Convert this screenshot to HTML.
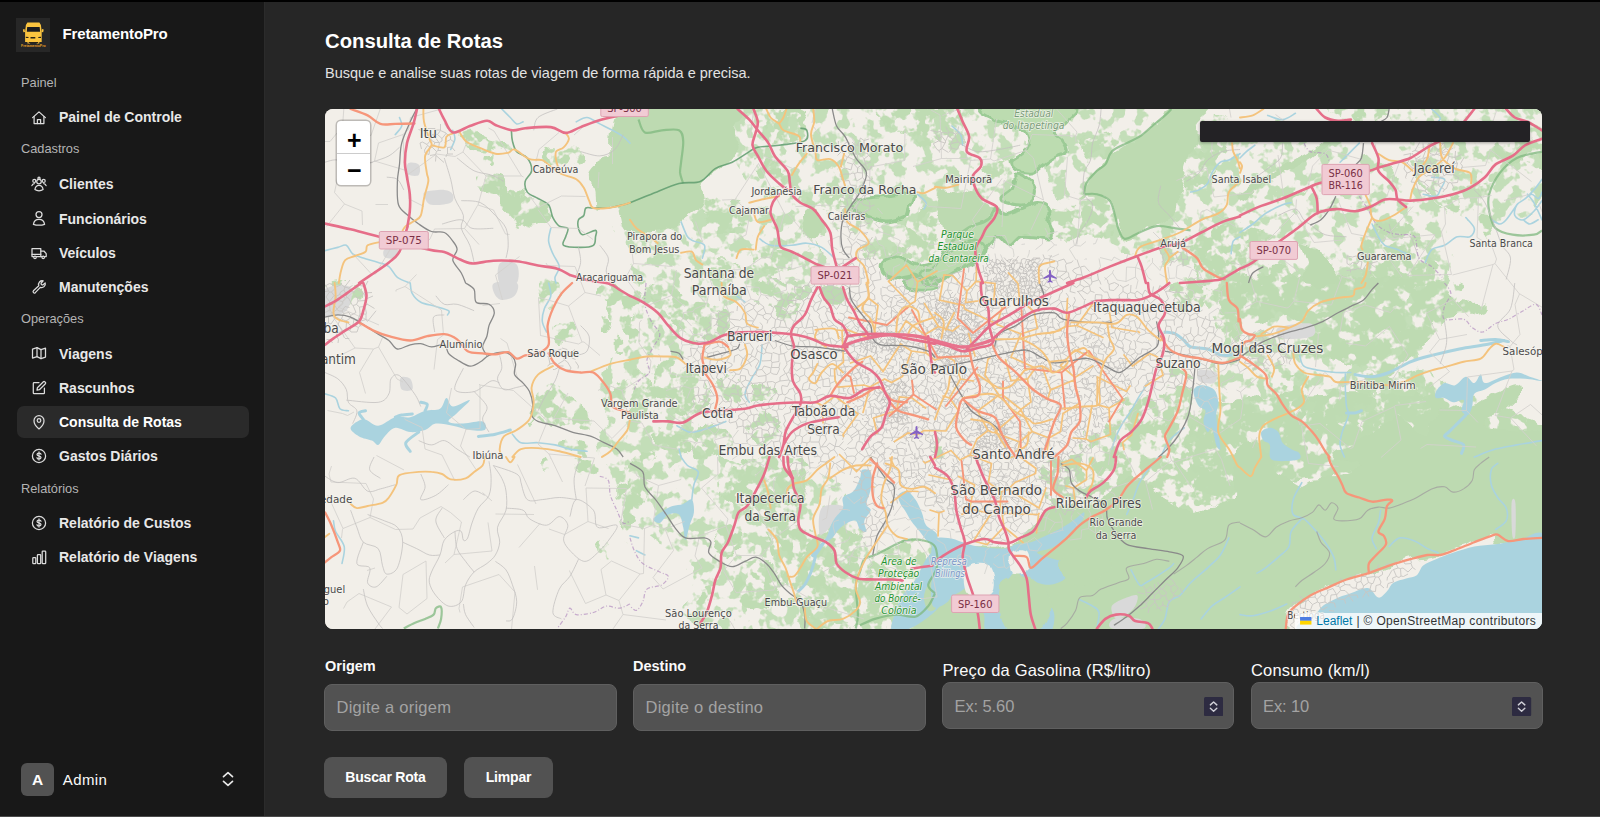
<!DOCTYPE html>
<html lang="pt-BR">
<head>
<meta charset="utf-8">
<title>FretamentoPro - Consulta de Rotas</title>
<style>
*{box-sizing:border-box;margin:0;padding:0}
html,body{width:1600px;height:817px;overflow:hidden;background:#262626;font-family:"Liberation Sans",Arial,sans-serif;color:#fafafa}
.abs{position:absolute}
#topbar{left:0;top:0;width:1600px;height:2px;background:#000;z-index:50}
#botline{left:0;top:816px;width:1600px;height:1px;background:#4a4a4a;z-index:50}
#sidebar{left:0;top:0;width:265px;height:817px;background:#181818;border-right:1px solid #2b2b2b}
#main{left:266px;top:0;width:1334px;height:817px;background:#262626}
.brand{left:62.5px;top:24.9px;letter-spacing:-0.12px;font-weight:700;font-size:15px;line-height:18px;color:#fff;white-space:nowrap}
.grp{left:21px;font-size:12.8px;line-height:16px;color:#b4b4b4;white-space:nowrap}
.nav{z-index:3;left:59px;font-size:14px;line-height:18px;font-weight:700;color:#e8e8e8;white-space:nowrap}
.ico{z-index:3;left:30.700px;width:16px;height:16px;stroke:#dcdcdc;fill:none;stroke-width:1.250;stroke-linecap:round;stroke-linejoin:round}
#active{left:17px;top:406px;width:232px;height:32px;border-radius:7px;background:#2a2a2a}
h1{left:325px;top:27.6px;font-size:20.3px;line-height:26px;font-weight:700;color:#fff;white-space:nowrap}
.sub{left:325px;top:64.4px;font-size:14.5px;line-height:18px;color:#e2e2e2;white-space:nowrap}
#map{left:325px;top:109px;width:1217px;height:520px;border-radius:8px;overflow:hidden;background:#f2efe9}
.lbl{font-size:14.5px;line-height:18px;font-weight:700;color:#fafafa;white-space:nowrap}
.lbl2{font-size:16.5px;line-height:20px;letter-spacing:0.18px;color:#fafafa;white-space:nowrap}
.inp{height:47px;width:293px;border-radius:8px;background:#525252;border:1px solid #5f5f5f;color:#a3a3a3;font-size:16.5px;line-height:45px;padding-left:11.5px;letter-spacing:0.25px;white-space:nowrap}
.btn{top:756.5px;height:41.5px;border-radius:8px;background:#525252;color:#fff;font-weight:700;font-size:14px;letter-spacing:-0.2px;line-height:41.5px;text-align:center;white-space:nowrap}
.spin{width:19px;height:19px;background:#2e2c40;border-radius:2px}
</style>
</head>
<body>
<div id="sidebar" class="abs"></div>
<div id="main" class="abs"></div>
<div id="topbar" class="abs"></div>
<div id="botline" class="abs"></div>

<!-- SIDEBAR -->
<svg class="abs" style="left:16.200px;top:17.900px;width:34.300px;height:34.300px" viewBox="16.200 17.900 34.300 34.300">
<rect x="16.200" y="17.900" width="34.300" height="34.300" fill="#272727"/>
<g fill="#fbc43f"><path d="M27.600 22.500h12l1.500 2.500.8 6.500v10.300h-2.400v1.700h-2.600v-1.700h-6.600v1.700h-2.600v-1.700h-2.400V31.500l.8-6.500z"/><path d="M23.100 29.300l1.600-.3.500 2.800-1.600.3zM43.900 29.300l-1.600-.3-.5 2.800 1.600.3z"/></g>
<path d="M27.400 26.900h12.500l.4 4.800H27z" fill="#1c1c1f"/>
<path d="M26 36.600l2.700.3v.9H26zM41.200 36.600l-2.700.3v.9h2.700zM30.700 37h4.800v1.400h-4.800zM28.900 41.800h9.500v1.100h-9.500z" fill="#2a2317"/>
<text x="33.550" y="46.900" text-anchor="middle" font-family="Liberation Sans,Arial,sans-serif" font-weight="700" font-size="3.300" fill="#e6a326" textLength="24.500" lengthAdjust="spacingAndGlyphs">FretamentoPro</text>
</svg>
<svg class="abs ico" style="top:109.7px" viewBox="0 0 16 16"><path d="M1.6 7.6L8 1.9l6.4 5.7"/><path d="M3.1 6.6v6.9h9.8V6.6"/><path d="M6.4 13.5V9.6h3.2v3.9"/></svg>
<svg class="abs ico" style="top:175.5px" viewBox="0 0 16 16"><circle cx="8" cy="5.6" r="2.3"/><path d="M3.9 13.6C4.3 10.7 5.9 9.4 8 9.4s3.7 1.3 4.1 4.2c-1.2.8-2.6 1.2-4.1 1.2s-2.9-.4-4.1-1.2z"/><circle cx="3.3" cy="4.9" r="1.5"/><circle cx="12.7" cy="4.9" r="1.5"/><circle cx="8" cy="2.2" r="1.1"/><path d="M.9 9.6c.4-1.4 1.2-2.1 2.4-2.1M15.1 9.6c-.4-1.4-1.2-2.1-2.4-2.1"/></svg>
<svg class="abs ico" style="top:210.1px" viewBox="0 0 16 16"><circle cx="8" cy="4.6" r="3"/><path d="M2.4 14.3C3 10.9 5.2 9.4 8 9.4s5 1.5 5.6 4.9c-1.7.6-3.5.9-5.6.9s-3.9-.3-5.6-.9z"/></svg>
<svg class="abs ico" style="top:245.2px" viewBox="0 0 16 16"><path d="M1 3.6h8.8v8H1z"/><path d="M9.8 6h3.1l2.3 2.7v2.9H9.8"/><path d="M1 9.3h8.8"/><circle cx="4" cy="12.4" r="1.2" fill="#181818"/><circle cx="12.2" cy="12.4" r="1.2" fill="#181818"/></svg>
<svg class="abs ico" style="top:278.8px" viewBox="0 0 16 16"><path d="M14.2 3.9a3.7 3.7 0 0 1-4.9 4.4l-5 5.4a1.35 1.35 0 0 1-1.9-1.9l5.4-5a3.7 3.7 0 0 1 4.400-4.900l-2.200 2.300.400 1.400 1.400.400z"/></svg>
<svg class="abs ico" style="top:345.1px" viewBox="0 0 16 16"><path d="M1.500 4.100l4.500-1.500 4 2 4.500-1.500v9l-4.500 1.500-4-2-4.500 1.500z"/><path d="M6 2.600v9M10 4.600v9"/></svg>
<svg class="abs ico" style="top:379.7px" viewBox="0 0 16 16"><path d="M8 2.600H3.100a.8.8 0 0 0-.8.800v9.500a.8.800 0 0 0 .8.800h9.500a.8.800 0 0 0 .8-.800V8"/><path d="M6 10.100l.400-2.400 6-6a.9.900 0 0 1 1.300 0l.700.700a.9.900 0 0 1 0 1.300l-6 6z"/></svg>
<svg class="abs ico" style="top:414.0px" viewBox="0 0 16 16"><path d="M8 14.900s-5-3.900-5-8.200a5 5 0 0 1 10 0c0 4.300-5 8.200-5 8.200z"/><circle cx="8" cy="6.500" r="1.800"/></svg>
<svg class="abs ico" style="top:448.2px" viewBox="0 0 16 16"><circle cx="8" cy="8" r="6.600"/><path d="M8 3.900v8.200M10 6.300c0-.9-.9-1.300-2-1.300s-2 .500-2 1.400c0 2.100 4 1 4 3.200 0 .9-.9 1.400-2 1.400s-2-.400-2-1.300"/></svg>
<svg class="abs ico" style="top:514.9px" viewBox="0 0 16 16"><circle cx="8" cy="8" r="6.600"/><path d="M8 3.900v8.200M10 6.300c0-.9-.9-1.300-2-1.300s-2 .500-2 1.400c0 2.100 4 1 4 3.200 0 .9-.9 1.400-2 1.400s-2-.400-2-1.300"/></svg>
<svg class="abs ico" style="top:549.0px" viewBox="0 0 16 16"><rect x="1.800" y="8.600" width="3" height="6" rx=".7"/><rect x="6.400" y="5.600" width="3.300" height="9" rx=".7"/><rect x="11.200" y="2" width="3.500" height="12.600" rx=".7"/></svg>
<svg class="abs" style="left:219.8px;top:771.4px;width:16px;height:16px;fill:none;stroke:#e8e8e8;stroke-width:1.7;stroke-linecap:round;stroke-linejoin:round" viewBox="0 0 16 16"><path d="M3.500 5.600L8 1.700l4.500 3.900M3.500 10.400L8 14.300l4.500-3.900"/></svg>
<div class="abs brand">FretamentoPro</div>
<div class="abs grp" style="top:75.3px">Painel</div>
<div class="abs nav" style="top:107.9px">Painel de Controle</div>
<div class="abs grp" style="top:141.3px">Cadastros</div>
<div class="abs nav" style="top:175.2px">Clientes</div>
<div class="abs nav" style="top:209.7px">Funcionários</div>
<div class="abs nav" style="top:243.9px">Veículos</div>
<div class="abs nav" style="top:278.2px">Manutenções</div>
<div class="abs grp" style="top:310.9px">Operações</div>
<div class="abs nav" style="top:345.0px">Viagens</div>
<div class="abs nav" style="top:379.1px">Rascunhos</div>
<div id="active" class="abs"></div>
<div class="abs nav" style="top:413.0px;color:#fff">Consulta de Rotas</div>
<div class="abs nav" style="top:447.3px">Gastos Diários</div>
<div class="abs grp" style="top:480.7px">Relatórios</div>
<div class="abs nav" style="top:513.7px">Relatório de Custos</div>
<div class="abs nav" style="top:548.2px">Relatório de Viagens</div>

<div class="abs" style="left:21px;top:763px;width:33px;height:33px;border-radius:6px;background:#525252;color:#fff;font-weight:700;font-size:15.5px;line-height:33px;text-align:center">A</div>
<div class="abs" id="admin" style="left:62.8px;top:770.7px;letter-spacing:0.4px;font-size:15px;line-height:18px;color:#fafafa">Admin</div>

<!-- MAIN -->
<h1 class="abs">Consulta de Rotas</h1>
<div class="abs sub">Busque e analise suas rotas de viagem de forma rápida e precisa.</div>
<div id="map" class="abs"><svg width="1217" height="520" viewBox="325 109 1217 520" style="position:absolute;left:0;top:0;font-family:'DejaVu Sans','Liberation Sans',sans-serif">
<defs><filter id="rough" x="-5%" y="-5%" width="110%" height="110%"><feTurbulence type="fractalNoise" baseFrequency="0.045" numOctaves="3" seed="7" result="n"/><feDisplacementMap in="SourceGraphic" in2="n" scale="14" xChannelSelector="R" yChannelSelector="G"/></filter><filter id="speck" x="-5%" y="-5%" width="110%" height="110%"><feTurbulence type="fractalNoise" baseFrequency="0.05" numOctaves="4" seed="21" result="n"/><feDisplacementMap in="SourceGraphic" in2="n" scale="16" xChannelSelector="R" yChannelSelector="G" result="d"/><feTurbulence type="fractalNoise" baseFrequency="0.085" numOctaves="3" seed="5" result="n2"/><feColorMatrix in="n2" type="matrix" values="0 0 0 0 0 0 0 0 0 0 0 0 0 0 0 10 0 0 0 -4.3" result="m"/><feComposite in="d" in2="m" operator="in"/></filter><filter id="speckmid" x="-5%" y="-5%" width="110%" height="110%"><feTurbulence type="fractalNoise" baseFrequency="0.05" numOctaves="4" seed="9" result="n"/><feDisplacementMap in="SourceGraphic" in2="n" scale="16" xChannelSelector="R" yChannelSelector="G" result="d"/><feTurbulence type="fractalNoise" baseFrequency="0.07" numOctaves="3" seed="14" result="n2"/><feColorMatrix in="n2" type="matrix" values="0 0 0 0 0 0 0 0 0 0 0 0 0 0 0 10 0 0 0 -3.55" result="m"/><feComposite in="d" in2="m" operator="in"/></filter><filter id="specksp" x="-5%" y="-5%" width="110%" height="110%"><feTurbulence type="fractalNoise" baseFrequency="0.03" numOctaves="2" seed="31" result="n"/><feDisplacementMap in="SourceGraphic" in2="n" scale="30" xChannelSelector="R" yChannelSelector="G" result="d"/><feTurbulence type="fractalNoise" baseFrequency="0.075" numOctaves="3" seed="17" result="n2"/><feColorMatrix in="n2" type="matrix" values="0 0 0 0 0 0 0 0 0 0 0 0 0 0 0 11 0 0 0 -5.5" result="m"/><feComposite in="d" in2="m" operator="in"/></filter><filter id="rough2" x="-5%" y="-5%" width="110%" height="110%"><feTurbulence type="fractalNoise" baseFrequency="0.09" numOctaves="2" seed="3" result="n"/><feDisplacementMap in="SourceGraphic" in2="n" scale="6" xChannelSelector="R" yChannelSelector="G"/></filter></defs>
<rect x="325" y="109" width="1217" height="520" fill="#f2efe9"/>
<g fill="#c3deb8" stroke="none" filter="url(#specksp)">
<path d="M620.0,215.0C630.0,198.3 671.7,200.0 700.0,200.0C728.3,200.0 768.3,205.0 790.0,215.0C811.7,225.0 828.3,245.8 830.0,260.0C831.7,274.2 818.3,291.7 800.0,300.0C781.7,308.3 738.3,298.3 720.0,310.0C701.7,321.7 693.3,348.3 690.0,370.0C686.7,391.7 688.3,423.3 700.0,440.0C711.7,456.7 738.3,463.3 760.0,470.0C781.7,476.7 811.7,465.0 830.0,480.0C848.3,495.0 865.0,535.2 870.0,560.0C875.0,584.8 888.3,617.5 860.0,629.0C831.7,640.5 728.3,640.5 700.0,629.0C671.7,617.5 700.0,578.2 690.0,560.0C680.0,541.8 655.0,540.0 640.0,520.0C625.0,500.0 605.0,466.7 600.0,440.0C595.0,413.3 603.3,383.3 610.0,360.0C616.7,336.7 638.3,324.2 640.0,300.0C641.7,275.8 610.0,231.7 620.0,215.0Z M740.0,109.0C780.0,95.5 955.0,93.8 1000.0,109.0C1045.0,124.2 1020.0,174.8 1010.0,200.0C1000.0,225.2 961.7,249.7 940.0,260.0C918.3,270.3 895.0,267.0 880.0,262.0C865.0,257.0 860.0,235.3 850.0,230.0C840.0,224.7 835.0,236.7 820.0,230.0C805.0,223.3 773.3,210.2 760.0,190.0C746.7,169.8 700.0,122.5 740.0,109.0Z M1180.0,150.0C1198.3,133.3 1260.0,123.3 1300.0,130.0C1340.0,136.7 1395.0,173.3 1420.0,190.0C1445.0,206.7 1446.7,211.7 1450.0,230.0C1453.3,248.3 1445.0,281.7 1440.0,300.0C1435.0,318.3 1423.3,320.0 1420.0,340.0C1416.7,360.0 1440.0,405.0 1420.0,420.0C1400.0,435.0 1336.7,431.7 1300.0,430.0C1263.3,428.3 1213.3,425.0 1200.0,410.0C1186.7,395.0 1220.0,360.0 1220.0,340.0C1220.0,320.0 1205.0,308.3 1200.0,290.0C1195.0,271.7 1193.3,253.3 1190.0,230.0C1186.7,206.7 1161.7,166.7 1180.0,150.0Z M1060.0,109.0C1083.3,93.8 1168.3,100.5 1200.0,109.0C1231.7,117.5 1250.0,134.8 1250.0,160.0C1250.0,185.2 1221.7,245.0 1200.0,260.0C1178.3,275.0 1143.3,260.0 1120.0,250.0C1096.7,240.0 1070.0,223.5 1060.0,200.0C1050.0,176.5 1036.7,124.2 1060.0,109.0Z M1400.0,109.0C1420.3,97.2 1518.3,93.8 1542.0,109.0C1565.7,124.2 1554.0,181.5 1542.0,200.0C1530.0,218.5 1490.3,223.3 1470.0,220.0C1449.7,216.7 1431.7,198.5 1420.0,180.0C1408.3,161.5 1379.7,120.8 1400.0,109.0Z"/>
</g>
<g fill="#bfdcb3" stroke="none" filter="url(#speck)">
<path d="M542.3,149.5C544.8,147.4 552.2,147.0 559.3,147.3C566.4,147.7 581.0,149.1 584.9,151.6C588.8,154.1 587.0,160.1 582.7,162.2C578.4,164.3 565.7,164.8 559.3,164.4C552.9,164.1 547.2,162.6 544.4,160.1C541.6,157.6 539.8,151.6 542.3,149.5Z M484.7,154.8C486.5,153.6 493.6,153.6 495.4,154.8C497.2,156.0 497.2,161.0 495.4,162.2C493.6,163.4 486.5,163.4 484.7,162.2C482.9,161.0 482.9,156.0 484.7,154.8Z M461.3,134.6C462.0,132.5 469.8,131.7 474.1,132.4C478.4,133.1 481.2,136.7 486.9,138.8C492.6,140.9 505.0,143.1 508.2,145.2C511.4,147.3 509.6,150.9 506.0,151.6C502.4,152.3 492.9,150.6 486.9,149.5C480.9,148.4 474.1,147.7 469.8,145.2C465.5,142.7 460.6,136.7 461.3,134.6Z M800.4,194.2C804.0,193.1 814.6,195.2 821.7,196.3C828.8,197.4 839.8,198.5 843.0,200.6C846.2,202.7 845.2,208.0 840.9,209.1C836.6,210.2 824.1,208.1 817.4,207.0C810.6,205.9 803.2,204.8 800.4,202.7C797.6,200.6 796.8,195.3 800.4,194.2Z M862.2,245.3C869.3,243.5 899.5,245.3 906.9,247.4C914.3,249.5 914.0,256.3 906.9,258.1C899.8,259.9 871.8,260.2 864.3,258.1C856.8,256.0 855.1,247.1 862.2,245.3Z M755.7,249.6C761.4,246.4 785.9,248.9 791.9,251.7C797.9,254.5 794.0,263.4 791.9,266.6C789.8,269.8 783.0,268.2 779.1,270.9C775.2,273.6 772.0,283.0 768.4,283.0C764.8,283.0 759.9,276.5 757.8,270.9C755.7,265.3 750.0,252.8 755.7,249.6Z M909.0,215.5C913.7,211.2 930.7,204.1 935.0,211.2C939.3,218.3 937.9,251.0 935.0,258.1C932.1,265.2 922.2,257.4 917.5,253.8C912.8,250.2 908.3,243.2 906.9,236.8C905.5,230.4 904.3,219.8 909.0,215.5Z M702.4,204.8C704.5,199.8 716.6,198.8 723.7,198.5C730.8,198.2 740.7,199.1 745.0,202.7C749.3,206.2 751.4,214.8 749.3,219.8C747.2,224.8 738.6,231.1 732.2,232.5C725.8,233.9 715.9,232.9 710.9,228.3C705.9,223.7 700.3,209.8 702.4,204.8Z M757.8,158.0C761.3,155.5 774.1,159.0 779.1,162.2C784.1,165.4 788.3,173.3 787.6,177.2C786.9,181.1 779.8,185.7 774.8,185.7C769.8,185.7 760.6,181.8 757.8,177.2C755.0,172.6 754.2,160.5 757.8,158.0Z M766.3,115.4C772.0,111.9 793.6,110.1 800.4,113.3C807.1,116.5 810.3,129.3 806.8,134.6C803.2,139.9 785.9,145.2 779.1,145.2C772.4,145.2 768.4,139.6 766.3,134.6C764.2,129.6 760.6,119.0 766.3,115.4Z M881.3,109.0C889.5,106.2 926.0,104.7 935.0,109.0C944.0,113.3 936.9,127.5 935.0,134.6C933.1,141.7 928.6,151.6 923.9,151.6C919.2,151.6 913.3,138.9 906.9,134.6C900.5,130.3 889.9,130.3 885.6,126.0C881.3,121.7 873.1,111.8 881.3,109.0Z M715.2,258.1C719.5,255.6 733.7,258.8 736.5,262.4C739.3,265.9 736.5,276.9 732.2,279.4C727.9,281.9 713.7,280.9 710.9,277.3C708.1,273.8 710.9,260.6 715.2,258.1Z M1050.0,211.2C1053.2,206.6 1067.7,211.9 1073.4,209.1C1079.1,206.3 1079.1,196.3 1084.1,194.2C1089.1,192.1 1098.7,194.5 1103.3,196.3C1107.9,198.1 1109.7,200.5 1111.8,204.8C1113.9,209.1 1116.3,216.9 1116.0,221.9C1115.7,226.9 1115.0,232.2 1109.7,234.7C1104.4,237.2 1093.3,236.5 1084.1,236.8C1074.9,237.2 1060.0,241.1 1054.3,236.8C1048.6,232.5 1046.8,215.8 1050.0,211.2Z M1082.0,136.7C1087.7,133.1 1109.6,128.5 1116.0,130.3C1122.4,132.1 1122.1,142.3 1120.3,147.3C1118.5,152.3 1110.7,157.6 1105.4,160.1C1100.1,162.6 1092.3,163.6 1088.4,162.2C1084.5,160.8 1083.1,155.8 1082.0,151.6C1080.9,147.3 1076.3,140.2 1082.0,136.7Z M935.0,109.0C939.3,104.7 956.0,103.7 960.6,109.0C965.2,114.3 965.6,135.2 962.7,140.9C959.9,146.6 948.1,144.2 943.5,143.1C938.9,142.0 936.4,140.3 935.0,134.6C933.6,128.9 930.7,113.3 935.0,109.0Z M984.0,162.2C987.5,160.1 1003.9,161.6 1007.4,164.4C1010.9,167.2 1008.8,177.2 1005.3,179.3C1001.8,181.4 989.6,180.0 986.1,177.2C982.6,174.3 980.5,164.3 984.0,162.2Z M1190.6,236.8C1198.8,231.8 1231.8,220.6 1240.0,228.3C1248.2,236.0 1246.5,273.9 1240.0,283.0C1233.5,292.1 1209.4,287.1 1201.2,283.0C1193.0,278.9 1192.4,265.8 1190.6,258.1C1188.8,250.4 1182.4,241.8 1190.6,236.8Z M1197.0,138.8C1201.3,131.7 1207.3,128.2 1211.9,130.3C1216.5,132.4 1224.7,143.4 1224.7,151.6C1224.7,159.8 1217.6,172.9 1211.9,179.3C1206.2,185.7 1194.9,191.0 1190.6,189.9C1186.3,188.8 1185.2,181.4 1186.3,172.9C1187.4,164.4 1192.7,145.9 1197.0,138.8Z M1282.6,196.3C1285.1,194.2 1293.2,191.0 1299.6,187.8C1306.0,184.6 1317.2,178.3 1320.9,177.2C1324.6,176.1 1325.2,178.9 1322.0,181.4C1318.8,183.9 1308.0,188.9 1301.8,192.1C1295.6,195.3 1287.9,199.9 1284.7,200.6C1281.5,201.3 1280.1,198.4 1282.6,196.3Z M1367.8,224.0C1371.7,217.6 1382.0,219.1 1389.1,219.8C1396.2,220.5 1405.1,224.8 1410.4,228.3C1415.7,231.9 1417.5,236.1 1421.0,241.1C1424.5,246.1 1428.2,251.1 1431.7,258.1C1435.2,265.1 1453.0,278.9 1442.3,283.0C1431.6,287.1 1380.6,287.1 1367.8,283.0C1355.0,278.9 1365.7,267.9 1365.7,258.1C1365.7,248.3 1363.9,230.4 1367.8,224.0Z M1261.3,270.9C1264.8,268.2 1278.3,264.6 1282.6,266.6C1286.9,268.6 1290.5,280.3 1286.9,283.0C1283.4,285.7 1265.6,285.0 1261.3,283.0C1257.0,281.0 1257.8,273.6 1261.3,270.9Z M1240.0,224.0C1244.3,221.2 1262.0,224.8 1265.6,228.3C1269.1,231.9 1265.6,242.5 1261.3,245.3C1257.0,248.1 1243.5,248.9 1240.0,245.3C1236.5,241.8 1235.7,226.8 1240.0,224.0Z M1495.6,143.1C1502.6,138.8 1534.3,139.5 1542.0,143.1C1549.7,146.7 1546.2,161.6 1542.0,164.4C1537.8,167.2 1523.9,159.4 1516.9,160.1C1509.9,160.8 1503.5,171.4 1499.9,168.6C1496.4,165.8 1488.6,147.3 1495.6,143.1Z M1448.7,196.3C1450.3,194.2 1458.0,195.7 1459.4,198.5C1460.8,201.3 1458.9,211.3 1457.3,213.4C1455.7,215.5 1451.2,214.0 1449.8,211.2C1448.4,208.3 1447.1,198.4 1448.7,196.3Z M1478.6,183.5C1480.4,181.0 1488.8,179.6 1491.3,181.4C1493.8,183.2 1495.3,191.7 1493.5,194.2C1491.7,196.7 1483.2,198.1 1480.7,196.3C1478.2,194.5 1476.8,186.0 1478.6,183.5Z M1478.6,217.6C1479.7,215.5 1486.7,217.0 1489.2,219.8C1491.7,222.7 1494.6,232.6 1493.5,234.7C1492.4,236.8 1485.3,235.3 1482.8,232.5C1480.3,229.7 1477.5,219.7 1478.6,217.6Z M1329.5,109.0C1336.6,107.2 1381.3,107.2 1389.1,109.0C1396.9,110.8 1383.4,117.8 1376.3,119.6C1369.2,121.4 1354.3,121.4 1346.5,119.6C1338.7,117.8 1322.4,110.8 1329.5,109.0Z M599.8,287.3C603.4,284.4 625.0,284.1 630.0,291.5C635.0,298.9 631.9,326.3 630.0,332.0C628.1,337.7 622.5,329.5 618.9,325.6C615.3,321.7 611.5,315.0 608.3,308.6C605.1,302.2 596.2,290.2 599.8,287.3Z M550.8,325.6C553.3,322.8 568.2,321.7 572.1,323.5C576.0,325.3 576.7,333.4 574.2,336.2C571.7,339.0 561.1,342.3 557.2,340.5C553.3,338.7 548.3,328.4 550.8,325.6Z M601.9,317.1C603.7,315.3 611.1,316.7 612.5,319.2C613.9,321.7 612.2,330.2 610.4,332.0C608.6,333.8 603.3,332.4 601.9,329.9C600.5,327.4 600.1,318.9 601.9,317.1Z M614.7,338.4C616.1,336.6 621.8,338.0 623.2,340.5C624.6,343.0 624.6,351.5 623.2,353.3C621.8,355.1 616.1,353.7 614.7,351.2C613.3,348.7 613.3,340.2 614.7,338.4Z M535.9,389.5C539.4,383.8 545.5,384.5 550.8,385.2C556.1,385.9 563.5,390.9 567.8,393.8C572.0,396.7 572.4,399.5 576.3,402.3C580.2,405.1 589.1,406.6 591.2,410.8C593.3,415.1 593.7,425.3 589.1,427.8C584.5,430.3 572.1,427.1 563.6,425.7C555.1,424.3 543.7,418.2 538.0,419.3C532.3,420.4 530.9,432.1 529.5,432.1C528.1,432.1 528.4,426.4 529.5,419.3C530.6,412.2 532.4,395.2 535.9,389.5Z M614.7,385.2C616.6,382.7 627.5,381.0 630.0,383.1C632.5,385.2 631.9,395.5 630.0,398.0C628.1,400.5 621.4,400.1 618.9,398.0C616.4,395.9 612.9,387.7 614.7,385.2Z M559.3,440.6C563.2,439.2 582.0,440.6 587.0,442.7C592.0,444.8 593.0,452.0 589.1,453.4C585.2,454.8 568.6,453.4 563.6,451.3C558.6,449.2 555.4,442.0 559.3,440.6Z M538.0,283.0C541.2,279.8 556.1,279.4 559.3,283.0C562.5,286.6 560.4,301.1 557.2,304.3C554.0,307.5 543.3,305.8 540.1,302.2C536.9,298.6 534.8,286.2 538.0,283.0Z M325.0,283.0C330.7,278.7 353.8,279.4 359.1,283.0C364.4,286.6 362.6,300.0 356.9,304.3C351.2,308.6 330.3,312.2 325.0,308.6C319.7,305.1 319.3,287.3 325.0,283.0Z M630.0,283.0C632.1,279.4 641.0,280.2 642.8,283.0C644.6,285.8 642.7,296.4 640.6,300.0C638.5,303.6 631.8,307.1 630.0,304.3C628.2,301.5 627.9,286.6 630.0,283.0Z M651.3,289.4C654.1,286.6 666.2,285.5 672.6,287.3C679.0,289.1 682.5,297.2 689.6,300.0C696.7,302.8 708.1,301.8 715.2,304.3C722.3,306.8 730.8,310.3 732.2,314.9C733.6,319.5 728.7,328.1 723.7,332.0C718.7,335.9 709.1,338.4 702.4,338.4C695.6,338.4 688.9,335.6 683.2,332.0C677.5,328.4 672.9,321.7 668.3,317.1C663.7,312.5 658.4,308.9 655.6,304.3C652.8,299.7 648.5,292.2 651.3,289.4Z M753.5,283.0C762.4,280.9 802.5,279.4 811.0,283.0C819.5,286.6 807.9,298.3 804.7,304.3C801.5,310.3 796.2,316.4 791.9,319.2C787.6,322.0 783.0,323.1 779.1,321.3C775.2,319.5 772.0,312.9 768.4,308.6C764.8,304.4 760.3,300.1 757.8,295.8C755.3,291.5 744.6,285.1 753.5,283.0Z M630.0,325.6C631.8,323.1 639.2,324.9 640.6,327.7C642.0,330.5 640.3,340.1 638.5,342.6C636.7,345.1 631.4,345.4 630.0,342.6C628.6,339.8 628.2,328.1 630.0,325.6Z M661.9,363.9C667.6,361.1 678.6,366.1 685.4,368.2C692.1,370.3 698.1,372.4 702.4,376.7C706.6,381.0 711.2,388.1 710.9,393.8C710.5,399.5 705.3,407.2 700.3,410.8C695.3,414.4 687.1,416.5 681.1,415.1C675.1,413.7 669.1,407.3 664.1,402.3C659.1,397.3 651.7,391.6 651.3,385.2C650.9,378.8 656.2,366.7 661.9,363.9Z M719.5,378.8C721.6,375.2 736.5,377.8 740.8,381.0C745.0,384.2 747.1,394.4 745.0,398.0C742.9,401.6 732.2,405.5 728.0,402.3C723.8,399.1 717.4,382.4 719.5,378.8Z M749.3,383.1C751.4,380.6 762.8,382.7 766.3,385.2C769.8,387.7 772.7,395.5 770.6,398.0C768.5,400.5 757.0,402.6 753.5,400.1C750.0,397.6 747.2,385.6 749.3,383.1Z M657.7,430.0C662.7,426.4 680.1,425.3 685.4,427.8C690.7,430.3 691.7,440.6 689.6,444.9C687.5,449.2 678.3,452.7 672.6,453.4C666.9,454.1 658.1,453.0 655.6,449.1C653.1,445.2 652.7,433.6 657.7,430.0Z M749.3,419.3C752.1,414.3 769.8,412.2 774.8,415.1C779.8,418.0 781.9,431.4 779.1,436.4C776.3,441.4 762.8,447.8 757.8,444.9C752.8,442.0 746.5,424.3 749.3,419.3Z M630.0,372.5C633.2,366.1 646.4,370.3 649.2,376.7C652.0,383.1 650.2,404.4 647.0,410.8C643.8,417.2 632.8,421.5 630.0,415.1C627.2,408.7 626.8,378.9 630.0,372.5Z M693.9,432.1C698.2,427.2 713.1,425.7 719.5,427.8C725.9,429.9 732.2,440.0 732.2,444.9C732.2,449.8 725.9,455.0 719.5,457.0C713.1,459.0 698.2,461.1 693.9,457.0C689.6,452.9 689.6,437.0 693.9,432.1Z M1116.0,402.3C1117.8,400.2 1130.2,399.4 1137.3,398.0C1144.4,396.6 1152.2,393.8 1158.6,393.8C1165.0,393.8 1172.2,394.4 1175.7,398.0C1179.2,401.6 1181.0,409.4 1179.9,415.1C1178.8,420.8 1172.8,426.4 1169.3,432.1C1165.8,437.8 1162.1,445.0 1158.6,449.1C1155.0,453.2 1155.1,455.7 1148.0,457.0C1140.9,458.3 1120.6,459.7 1116.0,457.0C1111.4,454.3 1117.5,446.2 1120.3,440.6C1123.1,435.0 1132.0,428.6 1133.1,423.6C1134.2,418.6 1129.5,414.4 1126.7,410.8C1123.9,407.2 1114.2,404.4 1116.0,402.3Z M1216.2,308.6C1219.8,305.1 1236.0,299.3 1240.0,304.3C1244.0,309.3 1241.8,333.1 1240.0,338.4C1238.2,343.7 1232.5,338.3 1228.9,336.2C1225.3,334.1 1220.4,330.2 1218.3,325.6C1216.2,321.0 1212.6,312.2 1216.2,308.6Z M1209.8,283.0C1211.6,281.2 1219.0,282.6 1220.4,285.1C1221.8,287.6 1220.1,296.1 1218.3,297.9C1216.5,299.7 1211.2,298.3 1209.8,295.8C1208.4,293.3 1208.0,284.8 1209.8,283.0Z M1084.1,430.0C1086.9,426.8 1097.5,428.9 1101.1,432.1C1104.6,435.3 1108.2,445.9 1105.4,449.1C1102.6,452.3 1087.6,454.5 1084.1,451.3C1080.5,448.1 1081.3,433.2 1084.1,430.0Z M935.0,440.6C936.4,437.9 941.7,437.9 943.5,440.6C945.3,443.3 947.0,454.3 945.6,457.0C944.2,459.7 936.8,459.7 935.0,457.0C933.2,454.3 933.6,443.3 935.0,440.6Z M1169.3,283.0C1173.9,280.2 1195.5,279.4 1201.2,283.0C1206.9,286.6 1205.9,299.3 1203.4,304.3C1200.9,309.3 1191.3,313.5 1186.3,312.8C1181.3,312.1 1176.4,305.0 1173.6,300.0C1170.8,295.0 1164.7,285.8 1169.3,283.0Z M1169.3,372.5C1172.1,366.1 1187.8,368.9 1190.6,376.7C1193.4,384.5 1189.1,412.9 1186.3,419.3C1183.5,425.7 1176.4,422.9 1173.6,415.1C1170.8,407.3 1166.5,378.9 1169.3,372.5Z M1271.9,368.2C1277.2,365.3 1296.8,372.4 1303.9,376.7C1311.0,381.0 1309.2,388.1 1314.5,393.8C1319.8,399.5 1331.2,410.1 1335.8,410.8C1340.4,411.5 1338.3,399.4 1342.2,398.0C1346.1,396.6 1355.0,399.4 1359.3,402.3C1363.6,405.2 1369.9,410.1 1367.8,415.1C1365.7,420.1 1352.2,431.4 1346.5,432.1C1340.8,432.8 1339.0,422.1 1333.7,419.3C1328.4,416.5 1323.0,416.5 1314.5,415.1C1306.0,413.7 1289.7,414.4 1282.6,410.8C1275.5,407.2 1273.7,400.9 1271.9,393.8C1270.1,386.7 1266.6,371.1 1271.9,368.2Z M1359.3,376.7C1366.4,367.5 1389.8,377.4 1401.9,376.7C1414.0,376.0 1424.6,369.6 1431.7,372.5C1438.8,375.4 1444.5,386.7 1444.5,393.8C1444.5,400.9 1438.8,411.6 1431.7,415.1C1424.6,418.7 1411.1,412.3 1401.9,415.1C1392.7,417.9 1383.4,429.3 1376.3,432.1C1369.2,434.9 1362.1,441.3 1359.3,432.1C1356.5,422.9 1352.2,385.9 1359.3,376.7Z M542.3,459.1C543.7,457.3 549.4,457.0 550.8,459.1C552.2,461.2 552.2,470.1 550.8,471.9C549.4,473.7 543.7,471.9 542.3,469.8C540.9,467.7 540.9,460.9 542.3,459.1Z M574.2,459.1C577.1,457.0 590.2,456.6 593.4,459.1C596.6,461.6 596.2,471.9 593.4,474.0C590.5,476.1 579.5,474.4 576.3,471.9C573.1,469.4 571.4,461.2 574.2,459.1Z M595.5,544.3C596.6,541.5 605.5,538.7 608.3,542.2C611.1,545.8 613.6,562.8 612.5,565.6C611.4,568.4 604.7,562.8 601.9,559.2C599.1,555.7 594.4,547.1 595.5,544.3Z M616.8,488.9C618.6,485.3 627.8,477.9 630.0,486.8C632.2,495.7 631.1,535.5 630.0,542.2C628.9,549.0 625.1,533.0 623.2,527.3C621.4,521.6 620.0,514.5 618.9,508.1C617.8,501.7 614.9,492.4 616.8,488.9Z M719.5,478.3C722.0,472.6 730.1,469.1 736.5,465.5C742.9,461.9 747.1,458.4 757.8,457.0C768.4,455.6 791.9,453.4 800.4,457.0C808.9,460.6 808.2,471.2 808.9,478.3C809.6,485.4 806.8,491.8 804.7,499.6C802.6,507.4 800.4,518.8 796.1,525.2C791.8,531.6 784.8,537.5 779.1,537.9C773.4,538.2 767.1,531.5 762.1,527.3C757.1,523.0 753.6,515.6 749.3,512.4C745.0,509.2 741.1,510.2 736.5,508.1C731.9,506.0 724.4,504.6 721.6,499.6C718.8,494.6 717.0,484.0 719.5,478.3Z M715.2,529.4C718.4,525.1 732.2,518.8 736.5,520.9C740.8,523.0 742.6,536.2 740.8,542.2C739.0,548.2 729.7,556.4 725.8,557.1C721.9,557.8 719.1,551.1 717.3,546.5C715.5,541.9 712.0,533.7 715.2,529.4Z M745.0,563.5C750.3,559.2 762.7,557.1 768.4,559.2C774.1,561.3 778.0,569.2 779.1,576.3C780.2,583.4 778.3,596.1 774.8,601.8C771.2,607.5 763.5,609.7 757.8,610.4C752.1,611.1 744.3,610.4 740.8,606.1C737.2,601.8 735.8,591.9 736.5,584.8C737.2,577.7 739.7,567.8 745.0,563.5Z M774.8,533.7C780.5,527.3 799.7,529.4 813.2,529.4C826.7,529.4 848.0,529.1 855.8,533.7C863.6,538.3 860.0,548.6 860.0,557.1C860.0,565.6 855.8,576.6 855.8,584.8C855.8,593.0 862.1,599.4 860.0,606.1C857.9,612.9 852.9,621.6 843.0,625.3C833.1,629.0 808.2,633.8 800.4,628.5C792.6,623.2 799.6,603.4 796.1,593.3C792.6,583.2 782.7,577.7 779.1,567.8C775.5,557.9 769.1,540.1 774.8,533.7Z M700.3,589.1C702.4,585.9 709.1,582.0 710.9,584.8C712.7,587.6 713.0,602.9 710.9,606.1C708.8,609.3 700.0,606.8 698.2,604.0C696.4,601.2 698.2,592.3 700.3,589.1Z M630.0,461.3C634.3,450.7 652.1,453.4 655.6,457.0C659.1,460.6 654.1,474.1 651.3,482.6C648.4,491.1 642.0,501.7 638.5,508.1C635.0,514.5 631.4,528.7 630.0,520.9C628.6,513.1 625.7,471.9 630.0,461.3Z M860.0,557.1C863.2,552.1 867.1,557.8 874.9,555.0C882.7,552.2 898.0,542.2 906.9,540.1C915.8,538.0 923.2,541.1 928.2,542.2C933.2,543.3 935.3,531.2 936.7,546.5C938.1,561.8 950.2,619.2 936.7,633.8C923.2,648.3 868.9,638.4 855.8,633.8C842.7,629.2 857.9,614.3 857.9,606.1C857.9,597.9 855.4,593.0 855.8,584.8C856.1,576.6 856.8,562.1 860.0,557.1Z M1054.3,457.0C1085.2,448.8 1209.0,448.5 1240.0,457.0C1271.0,465.5 1244.7,499.6 1240.0,508.1C1235.3,516.6 1220.1,507.4 1211.9,508.1C1203.7,508.8 1197.7,513.8 1190.6,512.4C1183.5,511.0 1176.4,504.2 1169.3,499.6C1162.2,495.0 1155.1,488.2 1148.0,484.7C1140.9,481.1 1133.8,476.5 1126.7,478.3C1119.6,480.1 1112.5,490.3 1105.4,495.3C1098.3,500.3 1092.6,506.3 1084.1,508.1C1075.6,509.9 1059.3,514.5 1054.3,506.0C1049.3,497.5 1023.3,465.2 1054.3,457.0Z M1110.0,420.0C1123.3,408.3 1155.0,400.0 1170.0,400.0C1185.0,400.0 1195.0,405.0 1200.0,420.0C1205.0,435.0 1211.7,476.7 1200.0,490.0C1188.3,503.3 1148.3,503.3 1130.0,500.0C1111.7,496.7 1093.3,483.3 1090.0,470.0C1086.7,456.7 1096.7,431.7 1110.0,420.0Z"/>
</g>
<g fill="#bedbb2" stroke="none" filter="url(#speckmid)">
<path d="M501.8,194.2C504.3,191.3 512.1,189.2 516.7,189.9C521.3,190.6 524.5,196.0 529.5,198.5C534.5,201.0 543.0,201.2 546.5,204.8C550.0,208.4 552.2,215.9 550.8,219.8C549.4,223.7 542.6,227.2 538.0,228.3C533.4,229.4 527.7,227.9 523.1,226.1C518.5,224.3 513.9,220.8 510.3,217.6C506.8,214.4 503.2,210.9 501.8,207.0C500.4,203.1 499.3,197.0 501.8,194.2Z M478.4,172.9C480.5,170.1 488.3,169.7 493.3,170.8C498.3,171.9 506.1,175.4 508.2,179.3C510.3,183.2 508.9,191.4 506.0,194.2C503.1,197.0 495.4,197.4 491.1,196.3C486.9,195.2 482.6,191.7 480.5,187.8C478.4,183.9 476.3,175.7 478.4,172.9Z M1235.7,280.9C1271.9,274.2 1416.8,277.7 1453.0,280.9C1489.2,284.1 1447.3,296.1 1453.0,300.0C1458.7,303.9 1483.5,301.8 1487.1,304.3C1490.6,306.8 1480.0,312.8 1474.3,314.9C1468.6,317.0 1459.4,314.2 1453.0,317.1C1446.6,320.0 1440.3,327.0 1436.0,332.0C1431.7,337.0 1431.7,342.3 1427.4,346.9C1423.1,351.5 1416.8,355.4 1410.4,359.7C1404.0,364.0 1396.2,370.7 1389.1,372.5C1382.0,374.3 1374.9,371.7 1367.8,370.3C1360.7,368.9 1353.6,366.0 1346.5,363.9C1339.4,361.8 1332.3,359.3 1325.2,357.5C1318.1,355.7 1306.4,356.9 1303.9,353.3C1301.4,349.8 1310.3,340.8 1310.3,336.2C1310.3,331.6 1308.5,328.8 1303.9,325.6C1299.3,322.4 1289.7,317.1 1282.6,317.1C1275.5,317.1 1269.1,324.9 1261.3,325.6C1253.5,326.3 1240.0,328.8 1235.7,321.3C1231.4,313.9 1199.5,287.6 1235.7,280.9Z M1199.7,413.2C1216.4,397.5 1255.6,397.5 1300.0,395.0C1344.4,392.5 1425.7,392.4 1466.0,398.0C1506.3,403.6 1529.3,415.8 1542.0,428.5C1554.7,441.2 1565.7,467.1 1542.0,474.0C1518.3,480.9 1440.3,469.0 1400.0,470.0C1359.7,471.0 1333.4,476.8 1300.0,480.0C1266.6,483.2 1216.4,500.4 1199.7,489.3C1183.0,478.2 1183.0,428.9 1199.7,413.2Z"/>
</g>
<g fill="#bddab1" stroke="none" filter="url(#rough)">
<path d="M589.1,172.9C590.5,167.6 596.9,162.6 601.9,160.1C606.9,157.6 614.2,158.0 618.9,158.0C623.6,158.0 628.1,152.7 630.0,160.1C631.9,167.5 633.6,194.7 630.0,202.7C626.4,210.7 614.0,207.3 608.3,208.0C602.5,208.7 598.0,209.7 595.5,207.0C593.0,204.3 594.5,197.8 593.4,192.1C592.3,186.4 587.7,178.2 589.1,172.9Z M621.5,106.9C640.7,88.1 717.5,103.0 736.5,106.9C755.5,110.8 734.7,122.9 735.4,130.3C736.1,137.8 744.2,144.8 740.8,151.6C737.4,158.3 721.6,165.5 715.2,170.8C708.8,176.1 704.4,178.2 702.4,183.5C700.4,188.8 705.3,197.7 703.5,202.7C701.7,207.7 697.7,209.1 691.8,213.4C685.9,217.7 676.5,225.5 668.3,228.3C660.1,231.1 650.6,231.8 642.8,230.4C635.0,229.0 625.0,240.4 621.5,219.8C618.0,199.2 602.3,125.7 621.5,106.9Z M804.7,213.4C806.5,209.8 814.2,209.4 817.4,211.2C820.6,213.0 823.8,219.7 823.8,224.0C823.8,228.3 820.2,235.4 817.4,236.8C814.6,238.2 808.9,236.4 806.8,232.5C804.7,228.6 802.9,217.0 804.7,213.4Z M1084.1,194.2C1082.0,191.4 1087.3,183.9 1090.5,179.3C1093.7,174.7 1099.0,171.1 1103.3,166.5C1107.5,161.9 1110.3,155.9 1116.0,151.6C1121.7,147.3 1130.5,145.9 1137.3,140.9C1144.0,135.9 1151.2,127.5 1156.5,121.8C1161.8,116.1 1160.4,109.4 1169.3,106.9C1178.2,104.4 1204.8,104.4 1209.8,106.9C1214.8,109.4 1201.2,116.5 1199.1,121.8C1197.0,127.1 1198.4,132.8 1197.0,138.8C1195.6,144.8 1192.4,152.3 1190.6,158.0C1188.8,163.7 1188.1,166.9 1186.3,172.9C1184.5,178.9 1181.7,187.8 1179.9,194.2C1178.1,200.6 1179.2,206.2 1175.7,211.2C1172.2,216.2 1164.6,220.4 1158.6,224.0C1152.6,227.6 1145.2,230.0 1139.5,232.5C1133.8,235.0 1128.5,240.7 1124.6,238.9C1120.7,237.1 1118.1,227.6 1116.0,221.9C1113.9,216.2 1113.9,209.1 1111.8,204.8C1109.7,200.5 1107.9,198.1 1103.3,196.3C1098.7,194.5 1086.2,197.0 1084.1,194.2Z M941.4,189.9C946.0,185.6 958.0,191.3 966.9,194.2C975.8,197.0 991.8,202.4 994.6,207.0C997.5,211.6 988.6,218.3 984.0,221.9C979.4,225.5 972.9,224.4 966.9,228.3C960.9,232.2 952.4,246.7 947.8,245.3C943.2,243.9 940.4,229.0 939.3,219.8C938.2,210.6 936.8,194.2 941.4,189.9Z M1240.0,202.7C1242.1,202.3 1247.5,198.1 1252.8,194.2C1258.1,190.3 1265.2,183.6 1271.9,179.3C1278.6,175.0 1286.5,172.2 1293.2,168.6C1300.0,165.0 1307.1,161.6 1312.4,158.0C1317.7,154.4 1322.4,149.8 1325.2,147.3C1328.0,144.8 1329.5,144.2 1329.5,143.1C1329.5,142.0 1328.4,139.5 1325.2,140.9C1322.0,142.3 1316.0,148.1 1310.3,151.6C1304.6,155.1 1297.8,158.6 1291.1,162.2C1284.3,165.8 1276.5,168.6 1269.8,172.9C1263.0,177.2 1255.6,183.9 1250.6,187.8C1245.6,191.7 1241.8,193.8 1240.0,196.3C1238.2,198.8 1237.9,203.0 1240.0,202.7Z M1301.8,245.3C1303.9,243.9 1315.9,250.2 1320.9,253.8C1325.9,257.4 1328.0,261.7 1331.6,266.6C1335.1,271.5 1346.8,280.3 1342.2,283.0C1337.6,285.7 1309.6,286.4 1303.9,283.0C1298.2,279.6 1308.6,268.7 1308.2,262.4C1307.8,256.1 1299.7,246.7 1301.8,245.3Z M821.7,287.3C824.5,284.8 840.2,286.2 843.0,289.4C845.8,292.6 841.5,303.9 838.7,306.4C835.9,308.9 828.8,307.5 826.0,304.3C823.2,301.1 818.9,289.8 821.7,287.3Z M1346.5,459.8C1315.3,456.6 1354.3,445.2 1359.3,440.6C1364.3,436.0 1371.3,435.7 1376.3,432.1C1381.3,428.6 1384.8,422.1 1389.1,419.3C1393.4,416.5 1398.4,413.7 1401.9,415.1C1405.5,416.5 1406.9,425.0 1410.4,427.8C1414.0,430.6 1419.7,433.5 1423.2,432.1C1426.8,430.7 1426.7,423.6 1431.7,419.3C1436.7,415.0 1445.9,409.3 1453.0,406.5C1460.1,403.7 1467.2,404.4 1474.3,402.3C1481.4,400.2 1488.5,396.7 1495.6,393.8C1502.7,390.9 1512.6,385.2 1516.9,385.2C1521.2,385.2 1523.3,389.5 1521.2,393.8C1519.1,398.1 1510.1,406.6 1504.1,410.8C1498.0,415.1 1486.3,415.8 1484.9,419.3C1483.5,422.9 1485.3,430.0 1495.6,432.1C1505.9,434.2 1538.2,427.5 1546.7,432.1C1555.2,436.7 1580.1,455.2 1546.7,459.8C1513.3,464.4 1377.7,463.0 1346.5,459.8Z M932.9,550.7C938.6,536.2 954.8,547.2 966.9,546.5C979.0,545.8 994.6,549.7 1005.3,546.5C1015.9,543.3 1024.0,533.3 1030.8,527.3C1037.5,521.2 1041.9,513.8 1045.8,510.2C1049.7,506.6 1047.9,506.4 1054.3,506.0C1060.7,505.6 1075.6,509.9 1084.1,508.1C1092.6,506.3 1098.3,500.3 1105.4,495.3C1112.5,490.3 1121.0,481.1 1126.7,478.3C1132.4,475.5 1136.0,477.2 1139.5,478.3C1143.0,479.4 1143.0,481.1 1148.0,484.7C1153.0,488.2 1162.2,495.0 1169.3,499.6C1176.4,504.2 1183.5,511.0 1190.6,512.4C1197.7,513.8 1203.4,508.8 1211.9,508.1C1220.4,507.4 1236.7,487.2 1241.7,508.1C1246.7,529.0 1293.2,612.8 1241.7,633.8C1190.2,654.8 984.4,647.6 932.9,633.8C881.4,619.9 927.2,565.2 932.9,550.7Z M1237.9,454.9C1243.6,425.1 1265.9,452.4 1271.9,454.9C1277.9,457.4 1271.6,465.9 1274.1,469.8C1276.6,473.7 1282.7,475.8 1286.9,478.3C1291.2,480.8 1295.7,484.4 1299.6,484.7C1303.5,485.0 1305.3,481.5 1310.3,480.4C1315.3,479.3 1323.5,479.0 1329.5,478.3C1335.5,477.6 1341.5,478.3 1346.5,476.2C1351.5,474.1 1354.3,469.1 1359.3,465.5C1364.3,461.9 1345.1,456.7 1376.3,454.9C1407.5,453.1 1518.3,441.1 1546.7,454.9C1575.1,468.7 1551.7,523.5 1546.7,537.9C1541.7,552.3 1525.4,540.0 1516.9,541.1C1508.4,542.2 1499.9,545.2 1495.6,544.3C1491.3,543.4 1494.8,536.1 1491.3,535.8C1487.8,535.4 1480.7,539.9 1474.3,542.2C1467.9,544.5 1460.1,547.2 1453.0,549.7C1445.9,552.2 1438.8,555.5 1431.7,557.1C1424.6,558.7 1417.5,557.8 1410.4,559.2C1403.3,560.6 1396.2,563.3 1389.1,565.6C1382.0,567.9 1374.9,570.8 1367.8,573.1C1360.7,575.4 1353.6,576.8 1346.5,579.5C1339.4,582.2 1332.3,585.7 1325.2,589.1C1318.1,592.5 1310.3,595.5 1303.9,599.7C1297.5,604.0 1289.9,608.9 1286.9,614.6C1283.9,620.3 1294.0,630.6 1285.8,633.8C1277.6,637.0 1245.9,663.6 1237.9,633.8C1229.9,604.0 1232.2,484.7 1237.9,454.9Z"/>
</g>
<g fill="#bcdcb0" stroke="#9ccb96" stroke-width="3" stroke-linejoin="round" filter="url(#rough2)">
<path d="M853.6,202.7C855.4,200.9 859.0,199.6 864.3,198.5C869.6,197.4 877.4,197.0 885.6,196.3C893.8,195.6 909.4,192.1 913.3,194.2C917.2,196.3 910.4,205.2 909.0,209.1C907.6,213.0 908.7,215.5 904.8,217.6C900.9,219.7 892.4,222.2 885.6,221.9C878.9,221.6 869.6,217.6 864.3,215.5C859.0,213.4 855.4,211.2 853.6,209.1C851.8,207.0 851.8,204.5 853.6,202.7Z M984.0,106.9C996.8,104.8 1057.5,104.4 1071.3,106.9C1085.1,109.4 1069.9,117.5 1067.1,121.8C1064.3,126.0 1055.0,129.2 1054.3,132.4C1053.6,135.6 1060.7,137.7 1062.8,140.9C1064.9,144.1 1068.5,148.8 1067.1,151.6C1065.7,154.4 1058.6,155.5 1054.3,158.0C1050.0,160.5 1045.0,164.0 1041.5,166.5C1038.0,169.0 1036.5,172.2 1033.0,172.9C1029.5,173.6 1023.8,172.6 1020.2,170.8C1016.7,169.0 1011.0,165.4 1011.7,162.2C1012.4,159.0 1021.7,155.5 1024.5,151.6C1027.3,147.7 1029.4,142.7 1028.7,138.8C1028.0,134.9 1025.9,131.4 1020.2,128.2C1014.5,125.0 1000.6,123.1 994.6,119.6C988.6,116.0 971.2,109.0 984.0,106.9Z M1015.9,172.9C1018.2,172.9 1025.5,176.8 1028.7,179.3C1031.9,181.8 1034.4,184.6 1035.1,187.8C1035.8,191.0 1034.8,195.7 1033.0,198.5C1031.2,201.3 1028.8,204.1 1024.5,204.8C1020.2,205.5 1011.3,203.8 1007.4,202.7C1003.5,201.6 1000.3,200.6 1001.0,198.5C1001.7,196.4 1009.4,193.1 1011.7,189.9C1014.0,186.7 1014.2,182.1 1014.9,179.3C1015.6,176.5 1013.6,172.9 1015.9,172.9Z M996.8,209.1C998.9,208.8 1001.4,213.4 1005.3,213.4C1009.2,213.4 1015.2,210.9 1020.2,209.1C1025.2,207.3 1030.8,203.4 1035.1,202.7C1039.4,202.0 1043.3,203.4 1045.8,204.8C1048.3,206.2 1049.7,208.7 1050.0,211.2C1050.3,213.7 1047.6,216.2 1047.9,219.8C1048.2,223.4 1051.8,229.3 1052.1,232.5C1052.4,235.7 1053.2,238.2 1050.0,238.9C1046.8,239.6 1038.0,237.2 1033.0,236.8C1028.0,236.5 1024.1,235.4 1020.2,236.8C1016.3,238.2 1013.0,245.3 1009.5,245.3C1006.0,245.3 1002.4,236.8 998.9,236.8C995.4,236.8 991.8,241.8 988.2,245.3C984.7,248.9 982.9,253.8 977.6,258.1C972.3,262.4 963.4,266.8 956.3,270.9C949.2,275.0 940.7,281.0 935.0,283.0C929.3,285.0 924.3,285.0 922.2,283.0C920.1,281.0 920.1,273.6 922.2,270.9C924.3,268.2 930.7,270.9 935.0,266.6C939.3,262.3 942.5,251.7 947.8,245.3C953.1,238.9 960.9,232.2 966.9,228.3C972.9,224.4 979.7,224.0 984.0,221.9C988.3,219.8 990.4,217.6 992.5,215.5C994.6,213.4 994.7,209.4 996.8,209.1Z M906.9,278.7C911.6,277.1 930.3,276.9 935.0,278.7C939.7,280.5 939.7,287.8 935.0,289.4C930.3,291.0 911.6,290.1 906.9,288.3C902.2,286.5 902.2,280.3 906.9,278.7Z M882.0,262.0C884.7,259.5 892.0,256.5 898.0,257.0C904.0,257.5 911.3,264.7 918.0,265.0C924.7,265.3 931.3,262.2 938.0,259.0C944.7,255.8 951.8,249.2 958.0,246.0C964.2,242.8 970.5,239.3 975.0,240.0C979.5,240.7 985.0,246.3 985.0,250.0C985.0,253.7 980.0,258.3 975.0,262.0C970.0,265.7 961.7,268.3 955.0,272.0C948.3,275.7 941.7,283.5 935.0,284.0C928.3,284.5 921.7,276.0 915.0,275.0C908.3,274.0 900.5,278.5 895.0,278.0C889.5,277.5 884.2,274.7 882.0,272.0C879.8,269.3 879.3,264.5 882.0,262.0Z"/>
</g>
<g fill="#d9d9d9" stroke="none">
<path d="M425.1,192.1C428.3,190.7 439.7,189.6 444.3,189.9C448.9,190.2 451.7,192.1 452.8,194.2C453.9,196.3 454.2,200.9 450.7,202.7C447.1,204.5 435.8,205.5 431.5,204.8C427.2,204.1 426.2,200.6 425.1,198.5C424.0,196.4 421.9,193.5 425.1,192.1Z M499.7,263.4C502.5,260.3 513.9,261.2 516.7,264.5C519.5,267.8 519.5,279.9 516.7,283.0C513.9,286.1 502.5,286.3 499.7,283.0C496.9,279.7 496.9,266.5 499.7,263.4Z M408.1,163.3C409.9,161.7 416.9,162.5 418.7,164.4C420.5,166.3 420.5,173.4 418.7,175.0C416.9,176.6 409.9,175.9 408.1,174.0C406.3,172.1 406.3,164.9 408.1,163.3Z M384.6,249.6C386.7,248.4 395.6,248.2 397.4,249.6C399.2,251.0 397.4,256.9 395.3,258.1C393.2,259.3 386.4,258.4 384.6,257.0C382.8,255.6 382.5,250.8 384.6,249.6Z M494.3,283.0C498.0,281.2 513.3,280.9 516.7,283.0C520.1,285.1 517.1,293.0 514.6,295.8C512.1,298.6 505.2,300.4 501.8,300.0C498.4,299.6 495.6,296.4 494.3,293.6C493.1,290.8 490.6,284.8 494.3,283.0Z M400.6,377.8C402.0,376.0 408.2,376.9 410.2,378.8C412.1,380.8 413.7,387.7 412.3,389.5C410.9,391.3 403.6,391.4 401.7,389.5C399.8,387.6 399.2,379.6 400.6,377.8Z M325.0,289.4C329.3,284.8 347.1,283.8 350.6,287.3C354.2,290.9 350.6,306.1 346.3,310.7C342.0,315.3 328.6,318.4 325.0,314.9C321.4,311.3 320.7,294.0 325.0,289.4Z M1199.1,370.3C1201.9,368.9 1213.7,370.4 1216.2,372.5C1218.7,374.6 1216.8,381.7 1214.0,383.1C1211.2,384.5 1201.6,383.1 1199.1,381.0C1196.6,378.9 1196.2,371.7 1199.1,370.3Z M1278.3,327.7C1282.9,325.2 1304.6,322.1 1310.3,323.5C1316.0,324.9 1317.0,333.7 1312.4,336.2C1307.8,338.7 1288.3,339.8 1282.6,338.4C1276.9,337.0 1273.7,330.2 1278.3,327.7Z M821.7,508.1C825.6,503.5 838.4,504.6 843.0,506.0C847.6,507.4 850.8,514.1 849.4,516.6C848.0,519.1 838.0,518.8 834.5,520.9C831.0,523.0 830.6,527.3 828.1,529.4C825.6,531.5 820.7,537.2 819.6,533.7C818.5,530.2 817.8,512.7 821.7,508.1Z M1111.8,606.1C1113.6,602.6 1122.5,599.4 1126.7,597.6C1131.0,595.8 1135.9,594.0 1137.3,595.4C1138.7,596.8 1137.0,602.9 1135.2,606.1C1133.4,609.3 1129.9,612.5 1126.7,614.6C1123.5,616.7 1118.5,620.3 1116.0,618.9C1113.5,617.5 1110.0,609.6 1111.8,606.1Z M1113.9,618.9C1118.5,617.3 1134.5,617.3 1139.5,618.9C1144.5,620.5 1148.3,626.9 1143.7,628.5C1139.1,630.1 1116.8,630.1 1111.8,628.5C1106.8,626.9 1109.3,620.5 1113.9,618.9Z M1511.6,502.8C1512.1,497.5 1514.8,497.5 1515.4,502.8C1516.0,508.1 1515.9,529.4 1515.4,534.7C1514.9,540.0 1512.8,540.0 1512.2,534.7C1511.6,529.4 1511.1,508.1 1511.6,502.8Z"/>
</g>
<g fill="#aad3df" stroke="none">
<path d="M350.6,427.8C351.3,425.0 358.7,419.7 363.3,419.3C367.9,418.9 372.9,426.1 378.2,425.7C383.5,425.3 390.0,418.6 395.3,417.2C400.6,415.8 405.2,418.3 410.2,417.2C415.2,416.1 420.1,412.2 425.1,410.8C430.1,409.4 436.4,410.8 440.0,408.7C443.6,406.6 444.3,398.4 446.4,398.0C448.5,397.6 448.9,406.1 452.8,406.5C456.7,406.9 469.1,399.0 469.8,400.1C470.5,401.2 460.7,409.3 457.1,412.9C453.6,416.4 447.8,419.6 448.5,421.4C449.2,423.2 455.6,423.6 461.3,423.6C467.0,423.6 478.7,420.3 482.6,421.4C486.5,422.5 486.8,428.6 484.7,430.0C482.6,431.4 475.1,430.7 469.8,430.0C464.5,429.3 458.5,426.8 452.8,425.7C447.1,424.6 440.4,422.9 435.8,423.6C431.2,424.3 429.4,428.6 425.1,430.0C420.8,431.4 415.2,432.5 410.2,432.1C405.2,431.7 399.6,427.1 395.3,427.8C391.0,428.5 387.5,433.5 384.6,436.4C381.8,439.2 380.3,444.2 378.2,444.9C376.1,445.6 375.1,442.0 371.9,440.6C368.7,439.2 362.7,438.5 359.1,436.4C355.6,434.3 349.9,430.6 350.6,427.8Z M1193.8,389.5C1194.8,387.4 1197.8,385.2 1201.2,385.2C1204.6,385.2 1211.2,386.6 1214.0,389.5C1216.8,392.4 1217.9,398.0 1218.3,402.3C1218.7,406.6 1216.2,410.1 1216.2,415.1C1216.2,420.1 1217.6,426.4 1218.3,432.1C1219.0,437.8 1220.8,447.0 1220.4,449.1C1220.1,451.2 1217.6,448.4 1216.2,444.9C1214.8,441.3 1213.3,429.9 1211.9,427.8C1210.5,425.7 1209.0,433.2 1207.6,432.1C1206.2,431.0 1203.8,424.9 1203.4,421.4C1203.1,417.8 1206.2,413.3 1205.5,410.8C1204.8,408.3 1200.9,408.6 1199.1,406.5C1197.3,404.4 1195.8,400.8 1194.9,398.0C1194.0,395.2 1192.8,391.6 1193.8,389.5Z M1436.0,391.6C1437.4,389.1 1441.3,384.2 1444.5,383.1C1447.7,382.0 1451.5,386.3 1455.1,385.2C1458.6,384.1 1462.6,377.0 1465.8,376.7C1469.0,376.4 1471.8,383.5 1474.3,383.1C1476.8,382.8 1478.9,374.6 1480.7,374.6C1482.5,374.6 1481.4,382.8 1484.9,383.1C1488.5,383.5 1496.7,378.5 1502.0,376.7C1507.3,374.9 1512.3,372.5 1516.9,372.5C1521.5,372.5 1525.5,375.3 1529.7,376.7C1533.9,378.1 1542.7,380.6 1542.0,381.0C1541.3,381.4 1531.0,379.2 1525.4,378.8C1519.8,378.4 1513.4,378.1 1508.4,378.8C1503.4,379.5 1499.5,381.3 1495.6,383.1C1491.7,384.9 1488.5,387.7 1484.9,389.5C1481.4,391.3 1476.4,391.0 1474.3,393.8C1472.2,396.6 1473.3,402.9 1472.2,406.5C1471.1,410.1 1469.7,414.4 1467.9,415.1C1466.1,415.8 1462.2,413.3 1461.5,410.8C1460.8,408.3 1465.0,401.5 1463.6,400.1C1462.2,398.7 1456.2,402.7 1453.0,402.3C1449.8,401.9 1447.3,398.7 1444.5,398.0C1441.7,397.3 1437.4,399.1 1436.0,398.0C1434.6,396.9 1434.6,394.1 1436.0,391.6Z M1261.3,432.1C1262.4,430.0 1267.0,427.8 1269.8,427.8C1272.6,427.8 1276.2,429.6 1278.3,432.1C1280.4,434.6 1280.5,439.9 1282.6,442.7C1284.7,445.5 1288.3,447.3 1291.1,449.1C1293.9,450.9 1298.5,451.6 1299.6,453.4C1300.7,455.2 1302.1,458.7 1297.5,459.8C1292.9,460.9 1276.5,462.3 1271.9,459.8C1267.3,457.3 1271.2,448.1 1269.8,444.9C1268.4,441.7 1264.8,442.7 1263.4,440.6C1262.0,438.5 1260.2,434.2 1261.3,432.1Z M843.0,508.1C844.4,504.6 841.2,500.3 843.0,497.5C844.8,494.7 850.8,494.3 853.6,491.1C856.4,487.9 858.6,481.9 860.0,478.3C861.4,474.8 860.4,470.9 862.2,469.8C864.0,468.7 869.3,468.7 870.7,471.9C872.1,475.1 871.4,483.6 870.7,488.9C870.0,494.2 866.4,500.3 866.4,503.9C866.4,507.4 871.1,507.4 870.7,510.2C870.4,513.0 865.0,517.4 864.3,520.9C863.6,524.4 867.1,530.1 866.4,531.5C865.7,532.9 861.8,531.2 860.0,529.4C858.2,527.6 857.9,522.0 855.8,520.9C853.7,519.8 850.1,521.6 847.3,523.0C844.4,524.4 841.2,526.9 838.7,529.4C836.2,531.9 834.4,535.8 832.3,537.9C830.2,540.0 827.8,540.4 826.0,542.2C824.2,544.0 823.5,546.1 821.7,548.6C819.9,551.1 817.1,556.0 815.3,557.1C813.5,558.2 810.6,556.8 811.0,555.0C811.4,553.2 814.9,549.4 817.4,546.5C819.9,543.6 823.9,541.1 826.0,537.9C828.1,534.7 828.8,530.5 830.2,527.3C831.6,524.1 832.4,522.0 834.5,518.8C836.6,515.6 841.6,511.7 843.0,508.1Z M898.4,495.3C899.5,493.2 904.1,490.4 906.9,491.1C909.7,491.8 912.9,496.1 915.4,499.6C917.9,503.2 920.0,508.1 921.8,512.4C923.6,516.7 923.6,521.7 926.1,525.2C928.6,528.8 934.9,530.2 936.7,533.7C938.5,537.2 938.1,545.1 936.7,546.5C935.3,547.9 931.0,544.7 928.2,542.2C925.4,539.7 922.5,535.0 919.7,531.5C916.9,528.0 913.7,524.4 911.2,520.9C908.7,517.4 906.6,513.0 904.8,510.2C903.0,507.4 901.6,506.4 900.5,503.9C899.4,501.4 897.3,497.4 898.4,495.3Z M936.7,576.3C935.3,572.8 930.3,581.2 928.2,584.8C926.1,588.3 923.9,593.3 923.9,597.6C923.9,601.9 926.1,609.0 928.2,610.4C930.3,611.8 935.3,611.8 936.7,606.1C938.1,600.4 938.1,579.8 936.7,576.3Z M653.4,518.8C654.1,516.7 660.9,512.3 664.1,510.2C667.3,508.1 669.4,507.1 672.6,506.0C675.8,504.9 680.0,505.0 683.2,503.9C686.4,502.8 690.0,498.2 691.8,499.6C693.6,501.0 694.3,508.1 693.9,512.4C693.5,516.7 691.0,520.6 689.6,525.2C688.2,529.8 686.5,539.8 685.4,540.1C684.3,540.5 684.3,531.6 683.2,527.3C682.1,523.0 681.5,516.6 679.0,514.5C676.5,512.4 671.5,513.1 668.3,514.5C665.1,515.9 662.3,522.3 659.8,523.0C657.3,523.7 652.7,520.9 653.4,518.8Z M932.9,542.2C935.4,535.8 942.8,537.9 947.8,537.9C952.8,537.9 957.7,540.8 962.7,542.2C967.7,543.6 970.5,545.4 977.6,546.5C984.7,547.6 998.9,549.0 1005.3,548.6C1011.7,548.2 1011.6,545.4 1015.9,544.3C1020.1,543.2 1025.8,543.6 1030.8,542.2C1035.8,540.8 1040.5,538.3 1045.8,535.8C1051.1,533.3 1057.8,530.1 1062.8,527.3C1067.8,524.5 1072.0,521.3 1075.6,518.8C1079.1,516.3 1083.0,512.0 1084.1,512.4C1085.2,512.8 1084.1,517.7 1082.0,520.9C1079.9,524.1 1074.8,528.0 1071.3,531.5C1067.8,535.0 1064.2,539.4 1060.7,542.2C1057.2,545.1 1053.9,546.8 1050.0,548.6C1046.1,550.4 1036.5,551.0 1037.2,552.8C1037.9,554.6 1048.6,557.8 1054.3,559.2C1060.0,560.6 1064.6,561.2 1071.3,561.4C1078.0,561.6 1092.6,559.2 1094.7,560.3C1096.8,561.4 1088.0,565.8 1084.1,567.8C1080.2,569.8 1074.8,569.9 1071.3,572.0C1067.8,574.1 1066.3,578.4 1062.8,580.5C1059.2,582.6 1054.3,584.4 1050.0,584.8C1045.7,585.2 1041.5,583.8 1037.2,582.7C1033.0,581.6 1028.0,580.2 1024.5,578.4C1021.0,576.6 1018.8,571.6 1015.9,572.0C1013.0,572.4 1010.2,577.0 1007.4,580.5C1004.6,584.0 999.2,589.0 998.9,593.3C998.5,597.6 1002.5,601.8 1005.3,606.1C1008.1,610.4 1012.7,614.3 1015.9,618.9C1019.1,623.5 1029.1,631.3 1024.5,633.8C1019.9,636.3 995.0,637.0 988.2,633.8C981.5,630.6 985.8,619.9 984.0,614.6C982.2,609.3 980.1,605.3 977.6,601.8C975.1,598.2 971.9,596.1 969.1,593.3C966.3,590.5 964.2,587.6 960.6,584.8C957.0,582.0 952.4,577.7 947.8,576.3C943.2,574.9 935.4,582.0 932.9,576.3C930.4,570.6 930.4,548.6 932.9,542.2Z M1028.7,593.3C1030.8,591.9 1041.5,598.2 1045.8,601.8C1050.1,605.3 1053.6,609.3 1054.3,614.6C1055.0,619.9 1053.2,630.6 1050.0,633.8C1046.8,637.0 1037.9,637.7 1035.1,633.8C1032.3,629.9 1034.1,617.1 1033.0,610.4C1031.9,603.6 1026.6,594.7 1028.7,593.3Z M932.9,576.3C935.4,571.3 944.6,574.2 947.8,576.3C951.0,578.4 952.0,584.9 952.0,589.1C952.0,593.4 951.0,599.0 947.8,601.8C944.6,604.6 935.4,610.4 932.9,606.1C930.4,601.9 930.4,581.3 932.9,576.3Z M1318.8,610.4C1322.3,604.7 1328.4,602.6 1333.7,599.7C1339.0,596.9 1345.1,595.2 1350.8,593.3C1356.5,591.3 1363.2,587.3 1367.8,588.0C1372.4,588.7 1375.2,597.1 1378.4,597.6C1381.6,598.1 1384.5,593.7 1387.0,591.2C1389.5,588.7 1390.2,584.8 1393.4,582.7C1396.6,580.6 1402.2,579.6 1406.1,578.4C1410.0,577.1 1413.9,577.3 1416.8,575.2C1419.7,573.1 1420.0,568.3 1423.2,565.6C1426.4,562.9 1431.0,561.3 1436.0,559.2C1441.0,557.1 1446.6,554.9 1453.0,552.8C1459.4,550.7 1467.2,547.9 1474.3,546.5C1481.4,545.1 1488.5,545.2 1495.6,544.3C1502.7,543.4 1508.4,542.0 1516.9,541.1C1525.4,540.2 1541.7,523.5 1546.7,539.0C1551.7,554.5 1585.8,618.0 1546.7,633.8C1507.7,649.6 1350.4,637.7 1312.4,633.8C1274.4,629.9 1315.2,616.1 1318.8,610.4Z M915.4,579.4C920.8,571.4 925.1,556.6 932.5,552.0C939.9,547.4 953.1,549.7 960.0,552.0C966.9,554.3 972.6,560.0 973.7,565.7C974.8,571.4 971.4,580.6 966.8,586.3C962.2,592.0 952.0,595.4 946.3,600.0C940.6,604.6 938.2,609.1 932.5,613.7C926.8,618.3 918.9,624.4 912.0,627.4C905.1,630.4 893.4,636.6 891.4,632.0C889.4,627.4 896.0,608.8 900.0,600.0C904.0,591.2 910.0,587.4 915.4,579.4Z"/>
</g>
<g fill="#f2efe9" stroke="none" filter="url(#rough2)">
<path d="M966.0,568.0C970.0,563.7 985.3,562.3 990.0,566.0C994.7,569.7 995.7,584.7 994.0,590.0C992.3,595.3 984.7,597.7 980.0,598.0C975.3,598.3 968.3,597.0 966.0,592.0C963.7,587.0 962.0,572.3 966.0,568.0Z M1011.0,553.0C1013.3,549.7 1023.2,549.2 1026.0,552.0C1028.8,554.8 1030.3,566.7 1028.0,570.0C1025.7,573.3 1014.8,574.8 1012.0,572.0C1009.2,569.2 1008.7,556.3 1011.0,553.0Z"/>
</g>
<g fill="#bddab1" stroke="none" filter="url(#rough2)">
<path d="M1000.0,585.0C1004.2,576.5 1021.7,575.5 1030.0,578.0C1038.3,580.5 1048.3,591.5 1050.0,600.0C1051.7,608.5 1047.5,624.2 1040.0,629.0C1032.5,633.8 1011.7,636.3 1005.0,629.0C998.3,621.7 995.8,593.5 1000.0,585.0Z M1060.0,560.0C1064.2,553.8 1091.7,546.3 1100.0,548.0C1108.3,549.7 1114.2,563.8 1110.0,570.0C1105.8,576.2 1083.3,586.7 1075.0,585.0C1066.7,583.3 1055.8,566.2 1060.0,560.0Z"/>
</g>
<g fill="none" stroke="#aad3df" stroke-width="1.6" stroke-linecap="round" stroke-linejoin="round">
<path d="M325.0,250.6C327.1,250.1 334.2,248.3 337.8,247.4C341.4,246.5 343.8,244.2 346.3,245.3C348.8,246.4 349.9,251.7 352.7,253.8C355.5,255.9 359.1,256.7 363.3,258.1C367.6,259.5 373.9,261.0 378.2,262.4C382.5,263.8 385.7,264.1 388.9,266.6C392.1,269.1 393.8,274.6 397.4,277.3C400.9,280.0 408.1,282.1 410.2,283.0 M550.8,228.3C550.4,230.4 548.2,236.8 548.6,241.1C549.0,245.3 551.1,249.6 552.9,253.8C554.7,258.1 558.9,262.7 559.3,266.6C559.6,270.5 555.5,274.6 555.0,277.3C554.5,280.0 555.9,282.1 556.1,283.0 M395.3,134.6C396.4,133.2 401.0,128.8 401.7,126.0C402.4,123.2 399.9,118.9 399.5,117.5 M450.7,149.5C451.4,147.7 454.5,142.0 454.9,138.8C455.2,135.6 453.1,131.7 452.8,130.3 M501.8,109.0C503.2,110.4 507.8,115.0 510.3,117.5C512.8,120.0 514.6,123.2 516.7,123.9C518.8,124.6 522.0,122.2 523.1,121.8 M576.3,121.8C578.1,121.1 583.1,117.2 587.0,117.5C590.9,117.8 595.5,121.8 599.8,123.9C604.0,126.0 608.6,128.2 612.5,130.3C616.4,132.4 620.3,134.6 623.2,136.7C626.1,138.8 628.9,142.0 630.0,143.1 M681.1,221.9C682.2,224.4 685.4,233.6 687.5,236.8C689.6,240.0 691.1,239.7 693.9,241.1C696.7,242.5 703.1,242.5 704.5,245.3C705.9,248.1 702.8,256.0 702.4,258.1 M759.9,238.9C761.7,240.0 765.3,244.2 770.6,245.3C775.9,246.4 785.9,245.7 791.9,245.3C797.9,245.0 801.8,242.8 806.8,243.2C811.8,243.5 817.1,244.9 821.7,247.4C826.3,249.9 832.4,256.3 834.5,258.1 M917.5,194.2C918.9,195.6 925.0,200.2 926.1,202.7C927.2,205.2 924.3,208.0 923.9,209.1 M1240.0,153.7C1238.2,154.8 1232.2,158.7 1228.9,160.1C1225.6,161.5 1223.2,160.1 1220.4,162.2C1217.6,164.3 1214.0,169.3 1211.9,172.9C1209.8,176.5 1209.7,180.7 1207.6,183.5C1205.5,186.3 1201.9,188.5 1199.1,189.9C1196.3,191.3 1192.0,191.7 1190.6,192.1 M1240.0,236.8C1238.9,237.5 1234.7,238.3 1233.2,241.1C1231.7,243.9 1231.4,251.7 1231.1,253.8 M952.0,126.0C953.4,127.4 958.8,131.4 960.6,134.6C962.4,137.8 962.4,143.4 962.7,145.2 M1542.0,179.3C1540.7,181.1 1536.7,186.7 1533.9,189.9C1531.1,193.1 1528.2,196.0 1525.4,198.5C1522.6,201.0 1518.7,202.0 1516.9,204.8C1515.1,207.6 1513.7,213.0 1514.8,215.5C1515.9,218.0 1520.1,220.5 1523.3,219.8C1526.5,219.1 1530.8,214.4 1533.9,211.2C1537.0,208.0 1540.7,202.4 1542.0,200.6 M1525.4,198.5C1526.5,197.8 1529.7,194.2 1531.8,194.2C1533.9,194.2 1536.5,198.8 1538.2,198.5C1539.9,198.2 1541.4,193.2 1542.0,192.1 M1523.3,219.8C1524.4,220.5 1527.2,224.0 1529.7,224.0C1532.2,224.0 1536.8,220.5 1538.2,219.8 M1516.9,204.8C1515.1,207.3 1509.0,216.6 1506.2,219.8C1503.4,223.0 1502.4,224.0 1499.9,224.0C1497.4,224.0 1492.7,220.5 1491.3,219.8 M1527.5,194.2C1528.6,195.6 1531.5,198.4 1533.9,202.7C1536.3,207.0 1540.7,217.0 1542.0,219.8 M1465.8,217.6C1467.2,219.4 1473.6,225.1 1474.3,228.3C1475.0,231.5 1472.8,235.4 1470.0,236.8C1467.2,238.2 1461.5,235.4 1457.3,236.8C1453.0,238.2 1448.8,243.2 1444.5,245.3C1440.2,247.4 1434.9,246.8 1431.7,249.6C1428.5,252.4 1426.4,260.3 1425.3,262.4 M1240.0,232.5C1242.1,231.1 1248.5,227.2 1252.8,224.0C1257.1,220.8 1260.6,216.6 1265.6,213.4C1270.6,210.2 1278.3,206.6 1282.6,204.8C1286.8,203.0 1289.7,203.0 1291.1,202.7 M1340.1,162.2C1341.9,160.4 1347.6,154.8 1350.8,151.6C1354.0,148.4 1357.9,144.5 1359.3,143.1 M1240.0,158.0C1241.1,156.9 1243.9,153.7 1246.4,151.6C1248.9,149.5 1253.5,146.3 1254.9,145.2 M1267.7,115.4C1270.2,116.1 1278.0,119.9 1282.6,119.6C1287.2,119.2 1293.3,114.3 1295.4,113.3 M1372.1,224.0C1373.1,226.1 1376.3,233.2 1378.4,236.8C1380.5,240.4 1381.6,243.2 1384.8,245.3C1388.0,247.4 1393.3,247.8 1397.6,249.6C1401.9,251.4 1408.3,254.9 1410.4,256.0 M1423.2,194.2C1425.3,194.5 1433.2,197.0 1436.0,196.3C1438.8,195.6 1438.8,192.7 1440.2,189.9C1441.6,187.1 1445.9,181.4 1444.5,179.3C1443.1,177.2 1433.8,177.5 1431.7,177.2 M1431.7,109.0C1433.1,110.4 1439.1,115.4 1440.2,117.5C1441.3,119.6 1438.4,121.1 1438.1,121.8 M410.2,283.0C410.6,284.8 410.5,290.4 412.3,293.6C414.1,296.8 416.9,300.1 420.8,302.2C424.7,304.3 431.2,305.0 435.8,306.4C440.4,307.8 446.6,309.3 448.5,310.7C450.4,312.1 447.7,314.2 447.5,314.9 M325.0,393.8C326.8,394.5 333.1,395.5 335.6,398.0C338.1,400.5 337.8,406.6 339.9,408.7C342.0,410.8 347.0,410.4 348.4,410.8 M548.6,283.0C549.0,285.1 551.5,291.5 550.8,295.8C550.1,300.1 545.8,304.4 544.4,308.6C543.0,312.9 541.9,317.4 542.3,321.3C542.6,325.2 545.8,330.2 546.5,332.0 M512.4,434.2C513.8,435.6 516.7,441.3 521.0,442.7C525.3,444.1 532.3,442.3 538.0,442.7C543.7,443.1 549.7,443.8 555.0,444.9C560.3,446.0 564.6,448.0 569.9,449.1C575.2,450.2 584.1,450.9 587.0,451.3 M762.1,344.8C761.7,348.0 761.7,358.2 759.9,363.9C758.1,369.6 753.9,373.8 751.4,378.8C748.9,383.8 745.4,389.9 745.0,393.8C744.6,397.7 748.6,400.9 749.3,402.3 M676.9,425.7C679.0,426.8 685.4,431.4 689.6,432.1C693.9,432.8 698.1,431.1 702.4,430.0C706.7,428.9 711.3,427.1 715.2,425.7C719.1,424.3 724.0,422.1 725.8,421.4 M679.0,449.1 L681.1,457.0 M736.5,295.8 L745.0,302.2 M1148.0,383.1C1146.6,385.2 1142.3,391.3 1139.5,395.9C1136.7,400.5 1133.8,406.2 1131.0,410.8C1128.2,415.4 1124.9,419.3 1122.4,423.6C1119.9,427.9 1117.8,432.1 1116.0,436.4C1114.2,440.6 1112.5,447.0 1111.8,449.1 M1184.2,427.8C1181.7,429.9 1173.2,435.7 1169.3,440.6C1165.4,445.5 1162.2,454.3 1160.8,457.0 M1299.6,355.4C1300.3,357.2 1300.7,363.6 1303.9,366.1C1307.1,368.6 1313.5,369.2 1318.8,370.3C1324.1,371.4 1330.5,372.1 1335.8,372.5C1341.1,372.9 1348.3,372.5 1350.8,372.5 M1345.4,372.5C1345.4,375.3 1345.2,383.8 1345.4,389.5C1345.6,395.2 1346.0,402.2 1346.5,406.5C1347.0,410.8 1349.3,410.8 1348.6,415.1C1347.9,419.4 1343.6,427.1 1342.2,432.1C1340.8,437.1 1339.7,440.8 1340.1,444.9C1340.5,449.0 1343.7,455.0 1344.4,457.0 M1542.0,440.6C1537.8,441.3 1524.6,443.5 1516.9,444.9C1509.2,446.3 1502.7,447.1 1495.6,449.1C1488.5,451.1 1477.8,455.7 1474.3,457.0 M333.5,520.9C333.9,522.7 333.8,527.2 335.6,531.5C337.4,535.8 343.1,541.2 344.2,546.5C345.3,551.8 342.4,560.7 342.0,563.5 M681.1,457.0C682.2,458.4 684.6,463.0 687.5,465.5C690.4,468.0 697.1,468.7 698.2,471.9C699.3,475.1 695.0,480.1 693.9,484.7C692.8,489.3 692.1,497.1 691.8,499.6 M630.0,535.8 L638.5,537.9 M636.4,550.7 L644.9,555.0 M1228.9,537.9C1227.5,540.8 1224.0,550.0 1220.4,555.0C1216.9,560.0 1212.6,563.2 1207.6,567.8C1202.6,572.4 1195.2,578.1 1190.6,582.7C1186.0,587.3 1183.5,592.2 1179.9,595.4C1176.4,598.6 1171.8,597.9 1169.3,601.8C1166.8,605.7 1166.8,614.4 1165.0,618.9C1163.2,623.4 1159.7,626.9 1158.6,628.5 M1240.0,586.9C1237.5,588.7 1229.4,594.4 1224.7,597.6C1220.0,600.8 1215.8,602.6 1211.9,606.1C1208.0,609.6 1203.0,616.8 1201.2,618.9 M1158.6,457.0C1156.8,459.1 1151.2,465.5 1148.0,469.8C1144.8,474.1 1142.0,477.6 1139.5,482.6C1137.0,487.6 1135.2,494.3 1133.1,499.6C1131.0,504.9 1127.8,512.0 1126.7,514.5 M1131.0,569.9C1132.4,572.4 1137.0,582.7 1139.5,584.8C1142.0,586.9 1140.9,585.5 1145.9,582.7C1150.9,579.9 1164.7,571.0 1169.3,567.8C1173.9,564.6 1172.9,564.2 1173.6,563.5 M1079.8,599.7C1081.9,600.8 1089.4,604.0 1092.6,606.1C1095.8,608.2 1098.3,608.8 1099.0,612.5C1099.7,616.2 1097.2,625.8 1096.9,628.5 M1301.8,482.6C1300.4,485.4 1294.6,494.3 1293.2,499.6C1291.8,504.9 1291.4,511.3 1293.2,514.5C1295.0,517.7 1300.4,516.3 1303.9,518.8C1307.5,521.3 1311.0,525.5 1314.5,529.4C1318.0,533.3 1322.0,537.6 1325.2,542.2C1328.4,546.8 1331.9,552.5 1333.7,557.1C1335.5,561.7 1335.5,567.8 1335.8,569.9 M1301.8,518.8C1300.0,520.9 1293.2,526.9 1291.1,531.5C1289.0,536.1 1291.1,542.2 1289.0,546.5C1286.9,550.8 1282.2,553.6 1278.3,557.1C1274.4,560.6 1269.1,565.1 1265.6,567.8C1262.0,570.5 1258.4,572.2 1257.0,573.1 M1240.0,614.6C1242.1,614.8 1247.5,616.4 1252.8,615.7C1258.1,615.0 1266.2,612.4 1271.9,610.4C1277.6,608.4 1284.4,605.1 1286.9,604.0 M1380.6,510.2C1380.2,512.3 1379.8,518.4 1378.4,523.0C1377.0,527.6 1372.4,533.6 1372.1,537.9C1371.8,542.2 1375.6,546.8 1376.3,548.6 M1389.1,546.5C1390.9,545.1 1395.4,538.8 1399.7,537.9C1404.0,537.0 1410.1,539.3 1414.7,541.1C1419.3,542.9 1423.5,546.7 1427.4,548.6C1431.3,550.5 1436.3,552.1 1438.1,552.8 M1497.7,463.4C1496.6,464.5 1492.4,466.2 1491.3,469.8C1490.2,473.4 1490.2,480.1 1491.3,484.7C1492.4,489.3 1495.2,493.6 1497.7,497.5C1500.2,501.4 1504.8,504.2 1506.2,508.1C1507.6,512.0 1508.0,517.4 1506.2,520.9C1504.4,524.4 1497.4,528.0 1495.6,529.4"/>
</g>
<g fill="none" stroke="#aad3df" stroke-width="3" stroke-linecap="round" stroke-linejoin="round">
<path d="M418.7,432.1C416.6,433.9 407.3,439.5 405.9,442.7C404.5,445.9 409.5,449.9 410.2,451.3 M363.3,419.3C362.6,418.2 358.7,414.3 359.1,412.9C359.5,411.5 364.4,411.1 365.5,410.8 M425.1,410.8C425.5,409.7 427.9,405.8 427.2,404.4C426.5,403.0 421.9,402.6 420.8,402.3 M395.3,417.2C396.4,416.9 398.9,415.6 401.7,415.1C404.5,414.6 410.5,414.2 412.3,414.0 M478.4,436.4C481.2,436.0 490.1,435.3 495.4,434.2C500.7,433.1 507.8,430.7 510.3,430.0 M1165.0,332.0C1166.8,332.4 1172.5,332.7 1175.7,334.1C1178.9,335.5 1181.7,338.4 1184.2,340.5C1186.7,342.6 1186.7,345.5 1190.6,346.9C1194.5,348.3 1202.3,347.6 1207.6,349.0C1212.9,350.4 1217.1,354.7 1222.5,355.4C1227.9,356.1 1237.1,353.6 1240.0,353.3 M1504.1,340.5C1500.9,341.2 1492.4,343.4 1484.9,344.8C1477.5,346.2 1468.3,347.2 1459.4,349.0C1450.5,350.8 1439.9,353.3 1431.7,355.4C1423.5,357.5 1417.5,358.9 1410.4,361.8C1403.3,364.7 1395.5,370.0 1389.1,372.5C1382.7,375.0 1377.8,376.3 1372.1,376.7C1366.4,377.1 1357.8,375.0 1355.0,374.6 M1465.8,415.1C1464.4,416.5 1460.1,420.8 1457.3,423.6C1454.5,426.4 1450.8,430.0 1448.7,432.1C1446.6,434.2 1443.8,435.0 1444.5,436.4C1445.2,437.8 1449.8,439.2 1453.0,440.6C1456.2,442.0 1462.2,442.8 1463.6,444.9C1465.0,447.0 1461.8,452.0 1461.5,453.4 M1480.7,340.5C1483.2,340.3 1491.0,339.2 1495.6,339.4C1500.2,339.6 1506.3,341.2 1508.4,341.6 M1346.5,412.9C1347.9,412.9 1352.5,413.2 1355.0,412.9C1357.5,412.5 1360.3,411.1 1361.4,410.8 M815.3,557.1C814.6,559.6 812.8,567.4 811.0,572.0C809.2,576.6 806.8,581.6 804.7,584.8C802.6,588.0 799.4,590.1 798.3,591.2"/>
</g>
<g fill="none" stroke="#7fb87f" stroke-opacity="0.75" stroke-width="2.2" stroke-linejoin="round">
<path d="M638.5,119.6C639.6,121.7 641.0,130.6 644.9,132.4C648.8,134.2 656.2,130.7 661.9,130.3C667.6,130.0 675.5,128.5 679.0,130.3C682.5,132.1 682.9,135.6 683.2,140.9C683.6,146.2 681.6,156.9 681.1,162.2C680.6,167.5 679.8,169.3 680.1,172.9C680.5,176.5 682.7,181.7 683.2,183.5 M1084.1,194.2C1084.4,192.4 1084.1,187.4 1086.2,183.5C1088.3,179.6 1093.7,174.0 1096.9,170.8C1100.1,167.6 1102.9,167.6 1105.4,164.4C1107.9,161.2 1108.2,155.2 1111.8,151.6C1115.3,148.0 1122.1,145.6 1126.7,143.1C1131.3,140.6 1135.2,139.5 1139.5,136.7C1143.8,133.8 1148.0,129.6 1152.3,126.0C1156.5,122.5 1161.8,118.2 1165.0,115.4C1168.2,112.6 1170.3,110.1 1171.4,109.0 M1084.1,194.2C1086.2,194.2 1092.6,193.1 1096.9,194.2C1101.2,195.3 1106.7,197.0 1109.7,200.6C1112.7,204.2 1113.6,210.9 1115.0,215.5C1116.4,220.1 1116.6,224.4 1118.2,228.3C1119.8,232.2 1121.0,238.2 1124.6,238.9C1128.1,239.6 1134.2,234.6 1139.5,232.5C1144.8,230.4 1150.5,226.8 1156.5,226.1C1162.5,225.4 1170.0,227.6 1175.7,228.3C1181.4,229.0 1188.1,230.1 1190.6,230.4 M1542.0,151.6C1537.8,152.7 1523.9,154.4 1516.9,158.0C1509.9,161.6 1504.5,166.9 1499.9,172.9C1495.3,178.9 1491.0,187.8 1489.2,194.2C1487.4,200.6 1488.1,205.5 1489.2,211.2C1490.3,216.9 1491.7,224.4 1495.6,228.3C1499.5,232.2 1506.2,233.6 1512.6,234.7C1519.0,235.8 1529.0,235.4 1533.9,234.7C1538.8,234.0 1540.7,231.1 1542.0,230.4 M403.8,628.5C405.6,627.6 410.9,624.7 414.5,623.1C418.1,621.5 421.9,620.3 425.1,618.9C428.3,617.5 431.8,616.4 433.6,614.6C435.4,612.8 434.6,609.4 435.8,608.2C437.1,607.0 440.2,605.4 441.1,607.2C442.0,609.0 441.6,615.4 441.1,618.9C440.6,622.4 438.4,626.9 437.9,628.5 M855.8,628.5C856.1,626.2 857.9,621.9 857.9,614.6C857.9,607.3 855.4,591.9 855.8,584.8C856.1,577.7 858.6,576.3 860.0,572.0C861.4,567.7 861.8,562.0 864.3,559.2C866.8,556.4 869.6,557.5 874.9,555.0C880.2,552.5 890.9,546.8 896.2,544.3C901.5,541.8 902.6,540.8 906.9,540.1C911.2,539.4 917.1,539.0 921.8,540.1C926.5,541.2 932.5,541.9 935.0,546.5C937.5,551.1 937.8,561.4 936.7,567.8C935.6,574.2 928.5,580.5 928.2,584.8C927.9,589.0 933.9,591.9 935.0,593.3 M935.0,593.3C933.9,595.4 931.5,602.2 928.2,606.1C924.9,610.0 920.7,615.3 915.4,616.7C910.1,618.1 903.0,614.2 896.2,614.6C889.5,615.0 880.9,617.1 874.9,618.9C868.9,620.7 862.5,624.2 860.0,625.3"/>
</g>
<g fill="none" stroke="#5f9c6f" stroke-opacity="0.85" stroke-width="1.6" stroke-linejoin="round">
<path d="M511.4,130.3C511.6,132.1 511.5,137.4 512.4,140.9C513.3,144.4 514.2,148.8 516.7,151.6C519.2,154.4 524.8,154.8 527.3,158.0C529.8,161.2 532.0,166.9 531.6,170.8C531.2,174.7 525.9,177.9 525.2,181.4C524.5,184.9 525.2,189.2 527.3,192.1C529.4,194.9 534.5,196.4 538.0,198.5C541.5,200.6 546.1,201.6 548.6,204.8C551.1,208.0 551.1,214.1 552.9,217.6C554.7,221.1 556.8,224.3 559.3,226.1C561.8,227.9 566.7,226.5 567.8,228.3C568.9,230.1 566.4,234.0 565.7,236.8C565.0,239.6 561.1,243.5 563.6,245.3C566.1,247.1 575.6,247.4 580.6,247.4C585.6,247.4 590.9,247.1 593.4,245.3C595.9,243.5 595.1,239.3 595.5,236.8C595.9,234.3 597.6,230.8 595.5,230.4C593.4,230.1 585.5,235.0 582.7,234.7C579.9,234.3 579.2,230.8 578.5,228.3C577.8,225.8 577.6,221.9 578.5,219.8C579.4,217.7 582.6,217.5 583.8,215.5C585.0,213.5 584.3,209.2 585.9,208.0C587.5,206.8 589.7,208.0 593.4,208.0C597.1,208.0 603.3,208.5 608.3,208.0C613.3,207.5 619.6,205.7 623.2,204.8C626.8,203.9 628.9,203.0 630.0,202.7 M630.0,202.7C633.5,201.3 643.1,197.4 651.3,194.2C659.5,191.0 670.8,185.6 679.0,183.5C687.2,181.4 694.3,183.9 700.3,181.4C706.3,178.9 709.9,171.8 715.2,168.6C720.5,165.4 726.5,165.0 732.2,162.2C737.9,159.4 745.0,154.1 749.3,151.6C753.6,149.1 752.8,148.4 757.8,147.3C762.8,146.2 771.3,146.3 779.1,145.2C786.9,144.1 800.1,143.4 804.7,140.9C809.3,138.4 807.5,132.4 806.8,130.3C806.1,128.2 801.5,128.5 800.4,128.2"/>
</g>
<path d="M3105 627l-65-39-1 0-49-61 3-9-9-25-30-18 3-80-38 2-30 17 2 34-8 16 20 85-88 2 55-82-103 10 59-66M1036 759l-22-73-13-9M3002 194l-24 73M3061 809l-40 27 52 56M3061 809l30 27M3028 739l-8-46 20-24-10-60 9-21M2656 300l71 20M2656 300l-31 32-11 51M2767 479l-5 3M2758 406l15-12 26-70M2678 405l25 62 53 10M3028 739l-4 3-34 89 31 5M1599 343l-72-31M1638 268l-11-15M1077 596l4 75-1 0M965 611l35-4M883 620l4 50-12 9-7 60M1027 781l-67-11-2-2M1028 782l67 60-19 46 22 20 27 56M1027 781l1 1M960 770l0 87-28 2-39-33 10-50M694 1204l24-17 65 27-45 60M687 1217l7-13M710 696l37 2-28 47 12 42M710 696l-50 25-13-1M662 964l70 3 15 31-7 37 51 24 35-1 14-22 42-23 19 12 22 19-15 65 76-7-8-57M662 964l-4-16 5-16M740 1035l-54 22-1 2-2 17M750 1136l-16 5M686 1057l-30-66M852 1122l-46 27-8 66 16 13 40-31-2-75M806 764l-12-6-37-64-10 4M695 831l13-7M695 831l-10-4-30-6M809 837l1 2 34 16 6 43 34 12 26 52M2971 331l10-31 82 63M3008 401l51-12M2923 335l48-4M2983 391l-26 4M2551 229l27 20M2423 306l2-33M2831 324l3-4 66-19M2751 289l1 19M2802 880l-40 35M2766 500l38 54M2986 529l4-2M2986 529l-81 21M2906 599l-53 27 26 53 55-10M1949 206l-64 25M1880 230l-18-10M1883 317l51 0-7-44M1883 317l-3-87M1647 1217l-2-4-73-44-22 5-2 6-76 5-25-43 26-31-21-59-53 20-9 40 14 24-78 42-20-23 41-54-17-43-24-8-17 7-2 90-7 1-42 53-26-11-10-51 21-17 57 26M1647 1217l9-1 72 22M1707 1109l-61 35M1500 426l-30-27 47-72 53 102-2 1-26 85-16-1-37 25-33 1M1444 400l26-1M1302 722l-3 24-55 35-29-11-19 11M1302 722l-24-36 1-41 4-5M1576 428l51 59M1591 413l70-3M1702 273l34 59M1510 201l-10 75M1624 246l10-37M710 696l-55-78M991 550l14 50M1118 265l-40 34-6 24M988 262l-11-6M753 911l55 29M921 892l31 47M932 859l-11 33M965 985l19 17M1035 929l37 79M1098 908l91 8-19 56M3089 435l-11-27M2458 213l4 22M2841 897l13-8 98 5M1739 374l1-40 69-13 1-63M1696 433l43-59M1883 317l-57 16M2640 847l61 50 5-2 18-52 65-30 13 67M2603 852l14 75 60 6M2603 852l37-5M2906 599l31 34M3020 693l-5-2M2986 529l-24 91M2792 613l-11 12-51-15-43 15-7 39M2879 679l-20 25 40 39-40 31M2816 710l-37-57-48 39-39-6M2154 264l-65-73M2154 264l-3 8-87-3-13 32-63 21-7-4 12-80M1212 1278l34-49 86 11M1253 977l-81-1 4 67 41 14M1253 977l-12 71 48 9M1744 1207l72-11-29-75M1148 270l18-16M1200 711l-32-27-4 0-27-72-58-17M1081 671l76 17 7-4M1251 556l16-29 78 6M1251 556l42 56 50-21 10-51M1264 504l3 23M1370 613l-27-22M1150 533l20 52 32 7M1137 612l33-27M1095 531l55 2M1500 426l-8 44-24 11M1391 443l15 43M706 508l36 39-66 67 82 36M757 694l8-19M988 262l55 90-71 0-46-48 10-26M926 304l-16 9-37-5-57 41 2 49 30 15M955 411l1-1 16-58M746 325l-65 3-12 57 20 23 35 14 1 28M644 283l16 0 25-30 4-53M653 453l36-45M1068 1029l-77-1M1022 1270l8-86-1-1-31-34-73 25-7 43 2 8M1238 1201l8 28M1212 1190l-41 17-32-65 0-1M1176 1043l-47 26-31-11M1075 1179l1 0M2217 978l59-19-30-62 3-3M2151 272l1 12M2514 603l-24 12M2514 603l-20-68-31-11M2423 306l4 9M2353 361l60-25 15 58 75-8 6-8M2460 972l-17-53-12-21-82 26 34 51M2437 868l44-30 5-32-5-22 41-35M2514 874l-9 22M2380 834l57 34M2473 780l8 4M2600 850l-8-21 57-84M2935 754l-2 67-54-1M3024 742l-89 12M2956 845l-23-24M2789 813l1-2 62-8M2816 710l-41 65M2514 603l60 13 4-2 10-12 11-46M2494 690l72-30 8 67M1403 976l53 62-4 14M1369 1043l-39 15M1317 971l-11 79M1317 971l45-12M1317 971l-43-19-3-7M1816 1196l5 4 53-6-16-79-24-36M1157 457l29 22M1225 274l0 54M1196 376l2-32M742 547l9 1 32-54 11-5 52 3 14-14 9-20 60-1 26-46M883 620l-73-47 23-24M792 583l0-3 18-7M1095 531l-3-5M1157 457l-55-2-26-36M991 550l48-37M1043 352l4 2M1171 393l-48-1-47 23-19-26M1307 890l-23-44-25-4-15-61M1307 890l51 9M1436 948l-1-34M1436 948l-33 28M1550 1174l-27-63 21-25 1-8-32-64M1473 1111l50 0M890 1126l18-17M1080 1047l-42 48M1075 1179l-6-47M1839 396l18 17 65 4 19-96-7-4M1856 490l65-7 31-31-7-13 59-82M2186 398l-25 2-7 89M1981 318l-40 3M2349 924l-6-3-52 42 14 56M2380 834l-44 64 7 23M2556 310l11 80M2399 461l3-37 12-5 56 34M2320 478l-14-14M2631 734l6-67M2684 480l-56 5-37-60-55 55 2 18 58 44M2494 535l44-37M2593 399l-2 26M2663 610l21-57 24 7M2588 602l75 8M2676 546l8 7M1473 1264l-13-22M1136 786l-29 51 3 0 78 5 36 35 35-35M751 409l25 0M958 489l-29-32M816 349l-7-9-60-18 8-36 49-17 11-10 4-24 69-19M987 420l24 48 8 1M956 410l31 10M742 271l30-86M685 253l57 18M809 340l-3-71M1660 991l-7 45-8 4M1545 1078l52-37M2161 400l-32-10 6-76M2062 460l27-58M2681 771l-31-26M2681 771l54-13M2679 801l2-30M2087 400l-20-84-16-15M2087 400l-79-39-4 93" transform="scale(.5)" fill="none" stroke="#d3d1cd" stroke-width="1.7" stroke-linejoin="round"/>
<path d="M2191 924l-13 11 8 12-19 13 3 13 4 1M2195 951l11-17M2201 983l-2 12M2201 983l-12-10M2215 961l-19-7-1-3M2274 819l-8 5-7 18-8 4M2244 816l8-18 6-2M1929 472l-6 20-19-4M1797 1108l7 15M1797 1107l0 1M1797 1107l-1-1 1-17-7-5-7-14-13-5-7 5M1808 1083l14 0M2177 1057l-14 3-1 17-22 3M2177 1057l14 9 0-28 15 0-5-20-6 0-6-18M2084 1089l-9 13-16-2-5-15 15-10 15 14M2178 935l-6-2 2-27 9 0 0-22 15-5 1 23-10 5 2 17M2170 973l-15 8M2171 1008l-2-1M2171 1008l7-7M2211 979l17 8 2 5-1 3-21 8M2229 995l7 19M2252 563l-18-3-9-14-16 14M2442 640l-23 1-1-13 18-12 9 12M1979 527l-2-19M1994 531l-4-24M1951 521l12-14-4-15-4-8-20 16 5 12M1951 521l1 5 7 4M2009 527l-8-18M1678 1019l15 0 7 2M1677 941l13 6M1683 967l-9 5-2-19-22 1 11-24M1673 933l4 8M1683 993l-5 8M1657 975l15 0M1717 1042l2 1M1666 1052l2-9 10-3M1694 993l14 14 0 1M1889 1089l6 17-1 1-11 5M1782 1135l16 6M1782 1135l-9 1-1 0-9 20-17-12M1758 1081l13 10M1770 1048l0 17M1796 1106l-28 5-4 3M1796 1057l-13 13M1738 1146l-7 7M1746 1170l17-6M1745 1129l-10-17M1738 1146l0-10 7-7M1756 1083l-3 26M1728 1120l0-1-26-7 9-17 19-3M1721 1153l-6-8M1513 949l-2 4M1493 928l-11 8M2436 750l2-5 13-7 5-11 19 4 6-16-2-8 5-6M2436 750l-24 8M2399 777l7-5 6 6M2013 1137l15-11-5-22-1 0-16 7 3 23 4 3M2191 1038l-11-5 1-6-10-19M2177 1035l0 22M2177 1035l3-2M2169 1036l-14-11M2089 1061l-17 2M2009 1134l-13 1-10-8M2199 879l-1 0M2199 879l13-2M2219 907l8-22 6-3 0-12-5-9-14 6M2219 907l-20-5M2217 930l3-22-1-1M2180 861l18 16 7-22-1-7-8-1M2216 836l-2 5 14 12 21-8M2350 556l-11 1-2 1-8 16M2320 541l1-2 10-28M2319 548l18 10M2336 534l3 23M2368 561l-16-6 2-23 9-4 20 8M2432 607l12-10-1-14-15-3M2472 625l-23 1M2407 570l-8 2-18-14 22-3 8 11-4 4M2398 543l5 12M2418 564l-7 2M2377 556l7-17 14 4M2371 576l16 6 2 12-4 6M2389 594l22 3M2418 602l-2 0M2419 564l-1 0M1955 482l11-10M1987 497l-10-5M1924 494l-1-2M1991 473l-20 0M1991 473l-3 22-1 2M1933 515l-12 21 4 3M2059 500l-1 7-3 8M1605 975l9 14M1708 1007l19-14M1820 1053l-14 9M1834 1080l-1-19 3-3 20 3-13 20M1889 1089l-16-10M1846 1040l-8-5-22 5-5-5-18 4-3-1-20 10M1782 1165l-9 6M1358 649l8 10-23 11-1-1M1523 940l-10 9M1520 972l18-14M1527 931l4-2 17 11M1527 931l-4 9M1555 953l-7 5-1 21 5 14M1504 920l2-9M1504 920l-11 7 0 1M1484 910l18-19-7-4-24 0-4-2-12 12M1527 931l-23-11M1503 891l18 0M1484 910l-6-1-14 10M1439 906l-10-26 1-1 0-10 7-9 0-9 4-4M1465 876l-7-4-27 7M1465 876l2 9M1458 872l-5-8M2442 640l2 5-16 25 16 7 0 11 15 9 8-19 17 19 1 3M2474 646l-3 3 8 20 11 3M2476 628l-4-3M2429 794l22 10M2454 780l-11-9 0-5 23-11 2-4M2434 777l-1 0M2417 800l12-6M2409 803l-13-8-9 2M2409 803l-9 14M2416 802l-7 1M2399 777l-3 18M2411 828l16-7-11-19M2284 821l-3 26M2270 810l17-22M2284 821l4-1 2 1 22-7 1-13-18 0M2389 835l-1-14M2372 818l-1 26M2041 1089l13-4M2042 1068l-8-7M2031 1103l10-14M2069 1058l-27 10M2235 821l0 2-19 13M2235 821l9-5M2215 961l7-4M2142 1038l11 10 1 4M2124 1044l1 16 2 2M2124 1044l1-1-6-16M2144 1030l-2 8M2138 1079l-2-9M2110 1045l-13 20M2110 1045l14-1M2100 1068l25-8M2016 1084l-11-5-12 15M1922 1091l2 17-8 3-2 11 7 15M2296 555l-6-13-19-7 0 19 5 7-4 17M2303 560l-7-5M2320 541l-15-16-15 17M2252 563l19-9M2443 583l2-2M1851 533l-1 27M1851 533l17 6 2 6 25-6M1843 522l0 2-14 17-20-7-1-2 6-15M1877 515l-9 24M2027 514l1-4-2-12-6-4-1 0-9-23-17 0M2225 546l1-4 2-2M2195 551l2-11 4-7-3-16M1765 428l-10-12M1897 533l14-4 3-12-1-4-18-12-13 15 15 17M1877 515l5 1M1933 515l-19 2M1495 887l-3-23M1465 876l12-16M1603 954l-8-6-18 16M1603 954l1 21M1594 936l1 12M1591 980l1-2M1619 935l13 1 11-8M1624 966l0-3M1650 954l-11-8M1603 954l15-11M1579 970l-6 5-10 23M1852 1023l-23-8M1666 1052l4 16M1688 1042l6 25M1692 1111l8 3-1 16M1699 1077l-7 6-24 7M1674 1110l18 1M1700 1073l-1 4M1332 781l24-7 4 0 0 13M1386 753l5-17M1349 683l-11 9M1414 856l-13 9M1414 856l16 13M1403 884l8 6 0 3M1380 659l6 10-7 20-14 1-2-2 3-28 0-1M1367 634l16 18M1367 634l-9 15M1406 668l-20 1M1384 692l-5-3M1378 719l-19-8 6-21M1359 711l-6 5M1437 582l2 20M1451 607l10-7 3-16 7-3-9-23-1 0-14 3M1772 513l-5-20-10-5-6-15M1795 451l-8 2M1783 473l-1-2-24-8M1783 473l16 7 1 3-5 13 1 9 13 2 12-15M2479 669l-12 9M2462 705l17 2M2462 705l-3-8M2454 652l-1 19M2453 715l-19-3M2307 778l8 21-2 2M2356 815l-17-21M2332 815l-5-17 5-5 0-8M2360 814l-4 1M2315 799l12-1M2312 814l6 9 14-8M1902 1078l-2-16-14-4-11 6-7-6-12 3M1971 1102l11-10M1940 1113l-16-5M1967 1122l8 8-6 18M1967 1122l5-15-1-5M1999 1108l-11 8M1940 1113l3 7M2069 1058l-7-13M2305 525l0-9M2271 535l6-13M2271 535l-18-1-1 29M2256 507l-5 17M2224 521l4-7 23 12M2050 488l-7 1M2062 471l-6-6M2224 521l-24-6M2118 508l-13 6-8-3M2139 499l1-2 9-6 12 1 11-9M1828 1014l-9-3 0-1-27-22M1788 1032l15-21 14 2M1346 799l-14-9M1348 810l-11 13M1366 821l-3-7M1351 837l-3 0-9-7M1365 753l-24-6 0-12M1386 753l-20 1-1-1M1380 726l-14 11M1374 797l8-20-19-6-3 3M1396 774l-14 3M1391 818l-15 9 0 14 11 5M1351 837l17 9-3 10-6 3M1394 642l0-8-8-11-19 2 0 9M1422 647l0-21M1427 579l-8-24M1451 607l7 18M1423 623l21 9M1461 600l5 2 17-5 0-16 10-8 9 25-14 9-5-10M1321 715l-4-7M1321 715l0 7M2475 731l5 13 24-14M2478 748l2-4M2317 834l-10 5-17-18M2317 834l21 8 10-10M2318 823l-1 11M1861 1042l9-8M1850 1038l11 4M2089 1061l4-26-17-2M2110 1045l-17-10 6-10M2191 487l4-10M2139 499l13 21M2171 518l3 0M2191 487l-5 1M2169 519l2-1M2095 502l14-12-16-18 3-4 19-5M2085 488l0-10M2114 490l-5 0M2071 499l14-11M1437 851l-15-6M1414 856l2-9M1403 884l-10 2-9 17M1375 881l-10 6M1392 860l-15 8M1393 886l-18-5M1397 591l16 17-24 10-3 5M1395 582l2 9M1419 582l-6 26M1748 441l-8-5M1778 446l-20 10-9-10M1734 470l-6-5-7-3-13 19-23-14M2122 482l-1-13M2149 491l-5-20M1800 529l-13 6-1 14M1786 512l-13 3M1796 505l-10 7M1827 996l-7 8M1495 554l-3 15 1 4 25 2 4 14 22 4M1462 558l8-3M1495 554l26-7M1502 598l14 4 6-13M1712 410l2 23 22-15M1696 431l3 4M1722 443l-8-10M1696 431l-17-8M1668 434l0 5 25 6 2 8M1720 460l1 2M1722 443l-2 17M2096 468l-6-12M1596 560l3-1M1644 472l-3 1M1634 543l6-15 20 0M1668 439l-3 6 11 18M1573 565l0 15-25 8M1573 565l13-8 10 3M1535 550l5 7 20 3-14 17M1561 560l-5-26-3-1M1645 505l-8 15-8-3M1616 501l1-2M1656 482l23-10 2 23M1644 472l1 0M1660 491l15 8M1656 482l4 9M1645 505l2 0M1640 528l-3-8M1540 557l-4 13M1556 534l1-1 25 5 1 0 2-26 17 1M1583 538l26-7 0-2M1612 536l-3-5" transform="scale(.5)" fill="none" stroke="#d2d0cd" stroke-width="1.6"/>
<path d="M2218 725l-3 14-10-5-3-7-14 7 8 12 3 0 6-12M2218 725l-13 0 2-16-11-2 3-15 6-4 9 8-3 11 10 6 0 10 5 3 4 9-12 8-3-4M2270 755l4-15-5-4-13 2-6-3-5 2 0 9-2 1-8 12-7-4 4-6 3-12-5-2M2277 761l2-2 6-8 7-1 2-3 10-1 2-11 6-1 7 6-5 10-5 3-5-7M2297 726l-11-3-6 15 11 2M2297 726l2 4 7 5M2333 697l9 14-1 1-15 0-5-12-10 9 4 11 1 0 6-2 4-6M2333 697l-5-3-6 3M2347 691l2 1 0 16-7 3M2347 691l-14 6M2261 761l-11-1 0-5 8-6M2261 761l7-6 2 0M2264 774l-3-13M2253 777l-5-14 2-3M2276 739l4-1M2292 750l2 10 2 2 12-4 1-5M1922 684l-1 4 15 8 3-8-11-10-6 6-9-8 1-5-5-4 2-10 6-2M1813 605l-5-8-14 6-1 7 11 5 6-3 3-5 0-2 12-10-10-8-8 2 0 1 1 7M1772 605l3 8-7 6-12-13 0-2M1772 605l-8-6 0-7-2-3 0-13M2235 737l8-1-6-16-11 6M2221 713l11-4 1-3-6-12-8-1-5 3M2195 761l-3-10-11 1-3-5 9-14-3-4-15 9 2 6 7 3M2195 761l13 1 1-11-10-5M2218 743l0 3-9 5M2203 602l-13-3 1-10 13 1-1 12 3 4 1 2 6 6 2 12-6 3M2179 543l-10-11-8 2 3 16-10-1-9-7 3-4 11-4-5-15M2143 569l-3 14 11 3M2143 569l10 6 7-6 9 5 10-2 2 10-6 6-11-7 5-7M1445 830l-9-2-4 4 3 12 8 2 4-3M1472 748l7 1 6-13-1-1-1-2-1-4 4-12-9-8-8 3-1 13M1472 748l-4-5 0-5M1453 705l-9 7-8-10-10 3 3 12-9 4 0 9-6 2-2-1-13 2-1-2-20 8M1453 705l-4-10-3 0-6 0-3-3-4-8-7-1-6 5 0 3-10 8-6-5-7 0-3 4-13-2 2 16-8 2M2343 748l-14 0-4 7 2 10-16-2-3-5M2343 748l-8 15-6 4 0 5-8 9-7-2-5-3-5 0-10 8-4-4-3-6 9-12 8 14M2324 740l-5 0M2324 740l5 8M2325 755l-11-5M2301 721l14-1M2316 720l0 6M2311 709l-6-2-5 5 1 9M2294 710l1-11 7-3M2294 710l6 2M2253 777l-1 1-13 3-4-12-9 2-2 0-12 6 4 8 9 3 2-2 12-4 0-1M2237 763l11 0M2237 763l-2-4M2245 746l5 9M2245 737l-2-1M2226 754l-8-8M2226 754l2 1M2277 761l0 7-7 7 2 9 2 2 16-6M2344 748l8 4 0 3-4 11-13-3M2367 749l-2 1-2 17 8 4 1 2-8 8M2365 733l6 5 9 1 6 12-9 6-6 14M2363 767l-2 0-10 7-1 3 1 2M2377 757l-10-8M2352 752l4-1M2352 755l9 12M2348 766l3 8M2333 774l17 3M2021 649l7-9 8 0 0 1 1 6-7 10-9-8M2057 642l-21-1M2057 642l-5 14-4 1-11-10M2033 694l-2 3 1 8-15 7-3-4 5-9-5-12 0-3 17 1 2 9M2010 652l13 14 0 1-18-2 0 3-8 2-10-7-4 5 1 10 8 3 1 1 16-3M2012 681l11-14M2075 674l4 6 2 1 1 15 5 1 11-4 1-9-9-5 2-11 3-2 1-12-3-3-12 2 5 12M1975 693l-7-1-2-1-11 2-17 6-2-3-8 6-5 1 0 17-2 2 9 14 5 0 7 10-5 8-13-11 6-7M1975 693l5 4 0 7-17 7-1 1-9-6-9 1-1 0-11 5-4-10M1949 684l6-8 9 7 2 8M1944 685l-6-16 17 3 0 4M1964 683l6-7-2-6-12-1 0-5-7-6-8 0-3 11-8 2-2 7M1975 693l5-13-10-4M1939 688l5-3M1750 576l-4-9-1-5 17-3-3-15 2-2M1772 590l9 5 4 0 3-2 1-2 18-1M1777 581l11 3 5-10 4 1 10 13 4-14-8-2-6 3M1774 576l3 5M1774 576l-10-2M1764 592l8-2M1772 605l9-10M1781 614l4-19M1781 614l-6-1M1793 610l-8 4-2 1-2-1M1737 596l5 5 8-2-1-9-7-5-2 0-3 11M1750 576l-8 9M1750 612l6-6M1750 612l-9-1 1-10M1735 582l-1-5 12-10M2165 709l0 9 10 3 2 0 4-16-5-2-11 6-5-7-10 6 2 9 13 2 0-1M2142 612l-14 10-6-18 0-1 11 0 9 9M2145 612l2 1 1 9 5 7 8-1 1-12-15-3M2153 693l6 3 1 6M2153 693l-12 8 1 4-5 9 0 2 8 6 7-5M2132 694l5-8 12-1 4 8M2132 694l9 7M2148 594l3 7-6 11M2154 583l2 0 13 17 3-1M2200 576l9 8 6 0 4 12-13 10M2196 636l-6-9-7 2-8-2 0-9-7-6 1-11M2196 636l6 1M2207 608l-10 8-2 3M2010 652l-1-1-1-7M2019 632l9 8M2009 651l-5 4-7 0-9 5-8-9-9 0-2 5-9 3-5-12 0-1 11-3M2095 538l5-5 10 3-8 12-7-5 0-5M2042 533l2 0 11 10 7-2-1-4-6-14 10-3 3 3-7 14M2028 525l9-13M2042 533l-2 0-5 11 1 2 17 1 2-4M2132 586l5 7-4 10M2101 574l-3-11-2-2-1 0-7 10 10 5 3-2 4 2 12-5 7 3 0 1 1 8-5 6-2 8 0 2 4 4M2183 568l-3 3-1 1M2189 585l-8-3M2200 574l0 2M2156 583l8-2M2076 539l-8 4 0 14 9 5 9-7 0-1-10-15 3-6 0-1 9-14 1-1 10 1 16 5 1-1 12-4 5 9-2 4 2 12-17-1-3 9 1 3 5 0 15-11-1 0M2096 561l7-12-1-1M2095 561l-9-6M2066 516l14 0M2103 510l-4 8 1 15M2116 531l-1-8M2113 536l3-5M2089 517l-3-8M1737 939l3 3 3 14-12-1-6-9 12-7-3-9-9-2-6 11 3 5 3 2M1731 955l-7 8-8-10-8 2M1720 1058l8 7 11-12 5 8-4 13-9 0-3 2-6-1M1435 821l4-7 11 3 1 1-3 10-3 2M1428 805l-6 4-2 9-2 2-2 7-4 1-14-7 6-8 14 7M1458 844l2-12-12-4M1446 801l-8 9M1446 801l5 3 12-2-2 10 10 10 7-12-5-9M1460 832l5-4-12-10-2 0M1436 828l-1-7M1472 748l-9 12 10 6 7-3 1-12 10 1 0 8 10 3 2 3-11 9-4-2-13 8-5-5-8 2M1411 747l3-2 5 0 7 13 3 0M1412 760l4 1 5 13-2 3 10 15-14 0-3-4 1-9 6-2M1442 720l-6 1-6 13 18 2 1 2 4 0 8 8 7-3M1442 720l5 4 6-1 11 5 0 4-11 6M1433 756l2-8-7-8-9 5M1428 740l1-4 1-2M1452 755l-6-10-11 3M1455 775l7-15-6-4M1455 775l-5 1-6-4 0-9 8-8M1433 756l11 7M1458 844l2 2 12-3 3 11 11-2 0-11-8-5-6 7M1431 791l-1 1M1421 774l9-2 4 3 10-3M1443 792l-12-1M1443 792l3 9M1432 832l-11 1M1524 722l18-1 2-14-12-2-5 3-12-6-5 13-6-3-8 9 3 4 0 1 13-9-2-2M1524 722l0-1M1453 723l9-15-9-3M1442 720l2-8M1502 709l-8-1-7 9 9 4M1502 709l2 3M1518 722l-6-5M1511 734l7-12M1503 733l-4-7M1486 717l1 0M1484 735l15-10M1496 740l-11-4M1538 684l9 14 6-5-1-9-12-3-2 1 0 2-1 1-6 15-10-9 16-6M1455 626l-17-3-2 7 1 8-1 1-13-3M1480 702l-6-9-8 0-4 15M1480 702l10-5 3 2M1490 688l-5-5-6 2-13-9-5 12 5 5M1468 624l-6 0-5 4 2 10 18 2 2 1 5-4 7 4 3 12-10 3-5-3-10 17 7 1 10 5 5-6M1455 626l2 2-19 10 15 10 5-7 1-3M1478 653l-7 0-13-12M1437 692l-13 6M1484 656l1 5M1526 631l6-4 10 1 1 5-7 8-9-5-1-5-11-3-1-3-7-8-15 8 17 15 6-12M1490 688l9-2 8 11-5 12M1515 702l-2-5 4-6M1494 653l6 1 3 14 11-9-9-12-5 7M2445 700l-14 10 13 10M2428 710l-4 2-2 4 7 11 13-2M2428 710l3 0M2407 715l9 4-4 13-13-7 8-10-4-7 10-7 11 11M2377 599l9 14 9-6M2377 599l1-3-8-11M2385 614l1-1M2390 626l4 2 11-8M2393 637l-14 4 0-1 1-8-6-7 1-8-8-5 8-12-12-4M2393 637l2 16 2 1-1 15-8 6-1 5 2 1 7 4 11-5 4 1-2 12 5 6 10-8 5 2 9-3M2349 692l9-2 6 4-3 14-4 2 1 10M2396 633l13 5-6 15 9 6 6-6 10 1-1 12-10-1-4-3-1-3M2396 633l-3 4M2330 732l2-5-10-9M2330 732l14 8 4-8 0-3-8-8 1-9M2329 733l1-1M2344 748l0-8M2365 733l0-7 6-5 1-11-11-2M2285 722l1-10M2284 698l11 1M2284 698l-2 10-6 0-5-3-2-6 3-3-2-14-3-1M2347 691l-2-5 7-12 7 7 6-2 4-9-3-3M2328 694l3-9-6-6-11 3-1 9M2345 686l-9-4 3-12M2351 670l1 4M2305 672l6 2 3 8M2303 693l-5-7-10-2-3 2-12-4 7-11 10-3 2-2-2-5 5-16 11 13-6 9-8-1M2284 697l0 1M2311 763l-2 13M1678 505l5 0 8-11 12 0 1-3 8-8 10 8-4 8-3 2 2 15-10 3-2-1-4-10 2-12 0-2M2191 768l-7-2-9 5-3-12 9-7M2191 768l4-7M2056 658l4 13-4 0-11 9-8-4-1-6 4-3 8-10M2056 658l17-3-2 15 4 4M2056 628l-4-1-12 2-4 8 0 3M2057 642l1-1 1 1 12-5 7 4 3-16 6-1 2-3M2099 684l8-4 0-1-1-10 2-5M2098 693l6 10 0 2M2107 680l8 12-11 11M2096 654l10 1-1-17 6-1 3-6-9-11 0-5 7 0 11 10-9 6M2093 651l4-15-18 6M2136 681l1 5M2136 681l1-14-10-2-1 1-6 11-13 2M2149 685l1-3-12-15 15-2-2-12 4-8-10-6-4 0-3-7M2159 675l-9 7M2036 710l-4-5M2036 710l-4 9 3 8 13-11-3-7-9 1M2017 712l1 2-3 6-5 4-8 0-3-15-13 4-2-2-4-7M1994 694l7 12 5 0 1-8-4-7-9 2-1-11M1980 697l14-3M1999 709l2-3M2012 681l1 2 1 1M2014 708l-8-2M2073 717l19-5-16-10 0-1 6-5M2073 717l0-8M1980 680l4-2M1968 670l4-4-3-10M1921 688l-9 8-1-1-6-14M1880 667l-5 13-3 1-10-3 0-13 2-1 6-12 12 9 8-8-10-11-10 9 0 1M1846 669l4 9-13 9 1 4 2 3 9 3 1 9 14 3-3-14-6-2-6 4M1846 669l10-7 6 3M1857 681l5-3M1884 685l8 2 6-9-1-6-8-1-5 14-9-5M1880 667l1 0 8 4M1902 695l9 0M1902 695l-10-6 0-2M1847 623l2-9 14 0 2 2-6 10-12-3-4 13M1877 623l-5-7-7 0M1877 623l-9 7-9-4-2 13-11 3-2 6-4 3-3 4 7 14 2 0M1849 614l-2-5-8-3-7 13-9-10 12-10 4 7M1825 595l6-1 1-7-8-9-9 9M1813 607l10 2M1835 599l0-1 12-5 6 11 7-1 2-3-4-9-9-1-2-4 7-13 5 0 3-3 18 4-7 8-5 1 3 15-9 2M1856 662l-2-6-10-8M1831 680l4-6 9-5M1840 651l-13-10 3-9-3-6-7 0 0 1-8 13-6 1-3-13-2-2 3-11M1857 681l-2 12M1870 693l-9 2M1807 589l0-1M1785 614l11 13 5-1M1740 611l1 0M1740 611l-12-3-2 2 2 13 9 0 8 6 8-6-3-11M1735 582l-17 4 3 8-7 9 0 8 12-1M1718 586l-6 1-8 11 10 5M1718 586l0-13 1-3 3-2 0-11-7-7 0-1-4-10M1734 577l-3-9M2202 727l-11-10 2-9-6-4 0-6 2-7 10 1M2188 601l-7 1M2188 601l3 9-9 4-1 2 10 7M2190 599l-2 2M2197 616l-6-6M2182 556l2-12M2182 556l2 8 13-4-2-12M1923 606l0-3-14-6-4 14 4 3 14-8 4 4 16-6 1 6-8 9 4 7 12 0 2-2 0-3 5-20 12 16-1 2 6 4 1 10-10 6-9-14 12-6M1915 585l11 7 5-6-3-13-3-2 6-15 11 5-5 11-9 1M1926 596l-3 7M1907 595l5-8M1907 595l2 2M1868 630l2 6 10 4 3-5 11 1M1854 656l10-8-2-6M1908 628l-10-1-5-5 5-11-1-1-15-3M1909 638l-10 6-2 8 1 18-1 2M1923 642l0-14 14 2-1 4 10 9 3-1 3-16M1923 642l-4 2-10-6M2021 612l-9 6-9-8-1-7 12-5 1 0 9-2 5 5 10-6 7 1 0 3-6 11-5 2M2113 536l3 6M2098 563l14-3 2-6M2127 560l-8-6M2127 560l11-7-1-7-3-3M2133 527l10-2 3-4M2066 516l-1 4M2062 541l6 2M2079 532l-11-9M1995 599l1-1 0-1-11-19-2 2-9 1-1-6 10-6 3 9-1 0M2105 576l1 8-5 7 1 2-5 11 4 5 17-10M2143 568l-19 7M2143 568l0-6-5-9M2112 560l5 11M2088 571l-1 0M2077 562l0 2-6 13-9-3 1-14M2041 928l-3-2-7-15 11-2 1-12-13 1-1 12-2 1-7 13 7 7 1 9 9 3 5-7-1-8 10-6 0-10-9-3M1754 1023l-9-6M1758 1013l-9-2-3-5-12 5-3-8-10 4 2-12-3-2M1768 1020l0 1-11 15-8-4 5-9M1768 1020l-7-3M1740 1074l3 4-1 13-9 2-6-9M1739 1053l6-4 7 0 3 11-11 1M1745 1049l-1-17-3-1-2-8-7-5M1758 1040l1 2-7 7M1753 1071l6-8 5 0M1740 1074l13-3M1542 721l2 4-1 10-1 1-14-4-4 7-10 1-3-6M1498 749l4 3 10-3 2-9M1496 740l2 9M1482 765l9-5M1463 787l14 2-2-8M1473 766l-3 10M1488 773l-6-8M1460 793l3-6M1460 793l-13-5M1422 809l-10-7 0-1 3-9M1412 802l-8 11M1412 760l-2 1-3 14M1402 744l9 3M1410 761l-14-1M1464 802l-1 0M1453 818l8-6M1471 826l0-4M1479 792l-2-3M1460 793l4 9M1477 831l11-7 1-3-11-11 13-3 5 9 3 0 8-5 2-6 3-2 10 6 7-5M1546 705l-2 2M1532 705l-1-5M1484 637l3-10 3-2-1-12 9-7 10 6-1 5M1546 655l3 0 2-16-8-6M1534 647l2-6M1546 655l-9 8 10 10 7-4-3-13-2-1M1538 682l-2-2 1-16-12-3-2 7 2 7-9 9-10-7M1554 669l6 4 2 3 1 2-11 6M1563 678l3 3 16-16-3-6-17 17M1537 598l-6-5M1516 605l2 1 10 8-1 2 5 11M1604 576l-15-3 1 12 10 9 6-12-2-6 4-4 8-2 6-11 7 5 0 7-7 6-6-7M1420 688l-9-4-1-1-1-9 6-5 8 1 3 13M1471 653l-12 6-7-5 1-6M1491 641l16 1-2 5M1520 645l5 6-1 8-10 0M2378 777l-6-4M2380 739l12-4 0-7-6-5-6 2M2392 766l7 4 0 1M2389 767l-5 8-6 2M2377 757l12 10M2392 735l3 4 18-3-1-4M2399 725l-7 3M2395 739l0 11 0 1 7 2 3 11-6 6M2357 599l6 13 4 0M2351 596l-3 2-1 17 8 3-1 14-16-14-6 7 20 10-4 5-17 0-8 1-11-7 1-10-3-3-15 4 6 15-6 4-6-2-3-17 4-2 5 2M2351 596l6 3M2360 615l3-3M2354 634l0-2M2331 603l6-5-6-15-2-2 0-1 12-11M2331 603l7 15 9-3M2331 603l-2 0-6 5 0 14 9 3M2355 634l11-9 5 2-6 13-2 13 3 2M2390 626l-10 6M2396 633l-2-5M2382 655l1-1M2365 640l-10-6M2386 723l-1-13 10-1 6-2-3-12-7 2M2331 666l-6 3-6-1-8 6M2331 666l0-10 2-4-2-12M2319 668l-4-14-1 0 9-13M2363 653l-9 2-4 14 1 1M2350 669l-5 0-4-16-8-1M2252 778l3 8-12 10M1723 969l1-6M1743 956l-1 4 12 11-6 6 0 2-1 15-1 1M1868 988l-10-8 10-11 4 7M2165 719l-5 14 9 5M2182 723l-5-2M2163 751l8-7M2164 757l8 2M1979 873l0 9M1979 873l-13 0M1971 890l-6-8-12 4M1971 890l-1 2 5 7 5-2 3-12 9 3 1-17M1803 682l-2 0-3 12 13 0-4 7-9 3-6-6 6-4M1790 667l0 12 1 1-3 16 4 2M1790 667l3-3 11 0 7-3 0 1 10-12 11 7-3 5-12 6-6-6M1986 716l-3 12 7 3-3 17 12 2-5 15-7 3-8-7 4-12 4-1M1986 716l14 10 2-2M1986 713l0 3M2003 742l-7-11M1841 747l-6 4-6-4 0-12 3-2 3-9 1 0 2-13-6-6 8-11M1841 747l0-7M1816 748l-2-10 4-4 11 1M1816 750l2 10-7 6 1 4 9 6-9 11-4-3-1-4-11-8-2 14 3 3M1834 755l1-4M1834 755l-12 6 8 15 2 1 1 2-11 12-7 0M2052 656l4 2M2030 665l6 5M2074 654l4-2 3 1M2096 633l1 3M2070 624l1 13M2081 625l-5-3 0-7 9-9 1-4 11 2M2056 628l7-5 7 1M2037 624l-10 2-4-1-5 4-4-3-2-8M2036 637l-9-11M2040 629l-3-5M2019 632l-1-3M2052 627l-5-13-7-4M2122 604l-10 11M2128 622l-5 3 4 18-8 2-8-8M2101 611l0-2M2096 633l9-13M2109 708l11 0 3 14-15 0 1-14M2094 719l-1-6M2094 719l10 9 4-6M2124 706l-3 1-6-15M2124 706l7-11-7-5-2-11-2-2M2137 714l-13-8M2130 722l7-6M2120 708l1-1M2132 694l-1 1M2127 665l0-1 3-11 0-9M2106 655l2 1M2119 645l-2 7M2130 653l11 0-2-12 2-2M2012 756l6-4 8 1 6-8M2012 756l-11-7M2012 736l7 2 10-3-14-15M2079 680l-10 7-9 0-1 2-14 6 1-13 13 3 1 2M2076 701l-2-2-13-3-3 7 1 17-5 0-9 13-10-4 0-2M2051 778l-5-2-9-13 2-2 14-2 4 4M1914 671l10-5 6 5M1898 670l11-3M1880 640l0 2M1864 648l6 3M1847 609l6-5M1863 614l-3-11M1863 581l-5 10M1847 586l-8-3-7 4M1837 655l-5 2M1835 674l-6-12M1827 641l-7 4 1 5M1847 735l-4-10-7-1M1847 735l6 1 6-13-9-3-2-10 2-4M1859 723l1-1 4-13 9-1 3-9-6-6M1868 727l-8-5M1868 727l1 1-13 12M1894 706l8-11M1894 706l-3 0-3-6 4-11M1884 685l-7 14 11 1M1877 699l-1 0M1850 560l-2 3-7-9-13 6 2 8-6 8 0 2M1854 573l-6-4-7 2-11-3M1868 559l-6 11M1848 569l0-6M1750 750l9-3 3-8-4-9M1750 750l-3-2-2-15 6-3M1728 623l-2 2-12-2-3-3M1725 636l4 6-9 11 12 4 4-9 9 13M1736 643l8-4 1-10M1744 639l7 3 10-5 2-11 0-2M1820 645l-8-5M1675 533l-18 1 1 7 17 3 0-11 2-4-7-8 0-3 17 0 0 1-1 7-8 3-1 0M1712 587l-12-5-3 4 3 12 2 1 2-1M1691 543l2-1 3 1 11 14-1 1-1 2-6 14 19-1M1691 543l0 14-8 5-9-4 2-12-1-2M1712 538l-7-12-11 7-1 9M1715 550l-8 7M1719 570l-13-12M2172 777l13 6-7 13-10-8M2193 794l-7-10 9-8 6 1 0 14 7 3 8-9M2191 768l4 8M2172 777l3-6M2185 783l1 1M2208 762l1 2 0 10-8 3M2226 754l-5 7-12 3M2269 720l-8-9-7-3-4 9 2 6 17 0 0-1 0-2 7-12M2271 705l-10 6M2285 722l-16 0M2250 735l2-12M2269 736l0-13M2238 717l12 0M2260 698l-1-7 4-8-14-6-6 5 4 9-2 7 0 3 9 6 6-9 9 1M2254 708l0-1M2230 690l15 8M2159 672l12-3 2 9-7 3 1 9 6 2 3-1 11 7M2162 616l6-4M2196 636l-11 11-4-3 2-15M2197 655l1 0 7-13 5 3 11-5 0-9 8 0 7 8-12 5-3-4M2197 655l-10-3-7 9 4 9 12 2 1-17M2171 669l7-8-12-4-9 9M2173 678l8-1 3-7M2368 586l-16-2 1-6M2351 586l1-2M2351 586l-14-4 11-9M2329 603l-10-9 0-3-5-4 6-16 9 9M2331 583l6-1M2209 555l6 5 1 6 2 3 11-4 9 5-10 11-9-1-1-11M2202 569l-3-8-2-1M2183 568l1-4M2219 596l3 1 3 4 14-5 1 3-12 11-2-1-1-8M2246 583l-8 7 1 6M2246 583l0-8-6-5M2255 588l-9-5M2255 588l6-3 1-15M2258 569l-12 6M1871 598l7 3 7-7-12-12M1872 616l7-11M1927 610l1 6M1912 624l-3-10M1958 625l-4-1M1986 614l9-15M1986 614l-8-6 1-9 6-2M1949 642l6 4M1949 658l6-11M1956 664l4-5M2024 596l7-11M2160 569l1-8-11-2 4-10M2180 571l-15-13-4 3M2182 556l-17 0 0-5-1-1M2165 556l0 2M2053 547l-1 9 3 2-4 15-4 1-10-4 5-12 10-2M1915 585l4-14-5-2 1-10 6-5-5-9 9-3 7 6-2 8 1 0M1969 564l-9 10-9-4-1-7 11-4M1942 561l5-1 3 3M1937 572l8 6 6-8M2068 901l0 9 8 0 5 13-9 4 4 13 1 1 10-7 9 4 2 3 4 3 10-6 2-11 7-2 3 2 1 17 11-1 0 12-7 4-9-4 2-8-10-9M2068 901l-6-10-8 9 0 10-3 2M2045 895l9 5M2054 968l5-1 0-14-7-6-4 3 0 12 6 6-7 13-9-1-1-1-16-4 7-15 2 0 5 3 13-1M1739 1053l-7-6-9 2M1768 1021l9 9-2 3-17 7M1743 974l-12 7 6 13-4 2-2 7M1723 969l-1 8 9 4M1706 963l17 6M1707 982l14-3 1-2M1732 1047l2-11-12-4M1741 1031l-7 5M1565 927l0-2-7-11 14-7 2 3-1 10M1554 912l-10 5M1578 937l6-10 8-2 2 1-3 16M1604 927l0 16M1604 927l-10-1M1574 910l6-1 10 7M1620 938l-1-12 8-1M1636 927l5-4 1-8-6-3-7 2-4-11-9 7 3 16M1742 1091l2 1 2 9M1751 1111l-7 5M1768 1059l-2-11-7-6M1775 1043l4 2M1775 1033l0 10M1581 825l-13 4M1587 833l-2 5 2 7 9 5 6-5 10-2-2 16 4 3 12-8 2 0 5 16 8 2 4-2 0-13-1-2-11-4-5 3M1571 842l-4-12M1481 792l13-5 1 0 1 14-5 4-10-13-2 0M1492 775l2 12M1503 787l-8 0M1503 787l5-10 9 1 3 3 5-5 12-1 3 4-5 9-12 2M1503 766l0 1 13-1 1-1 8 1 0 10M1503 787l11 6 7-4-1-8M1512 749l4 4 16-2 0 12-7 3M1504 868l-15-1-2-1 1-12-2-2M1504 868l2 4-14 11M1524 875l1 0 16-2-5-12-12-2 0 16-16-1-2-2M1534 837l0 8 14-1-2-9-5-2M1539 816l-3-10 5-8M1539 816l-8 3-7-1-2-9M1507 811l9 12M1402 744l-2-7M1416 707l-3 11-2 0-10 0-5 4-3-1-7-8 8-13 7 8 0 10M1416 707l9-2M1410 699l0 4 6 4M1436 721l-7-4M1398 776l-3-2M1393 823l0 1M1400 798l-3 8M1400 798l-4-7 0-1-7 2-4 6 4 10-4 8M1412 801l-12-3M1412 788l-16 3M1398 776l-2 14M1398 821l-5 2M1474 622l1-10M1527 616l-13 9M1508 612l8-7M1507 642l2-2M1559 654l3-13 5-1 3 4 3 11-2 0-12-1-8 2M1554 638l-3 1M1554 638l8 3M1579 659l0-2-6-2M1523 668l-18 4-3-3M1485 683l1-7M1607 767l-3 12 10 1 4-3 2-11 10 0 1-3 0-11 10-3 4 10-14 4M1600 761l-10 6 1 5 11 9 0 1-11 6-5-11-8 2-2 6-6 5-5-2-7 2-5 12M1599 754l1 7M1599 754l10-4 7 6 0 7-9 4M1598 714l-5-3M1590 726l11 1 2 8-10 7-7-7-5 0-4 10 11 5 3-2 8 6M1590 726l-6-8 2-4M1584 681l-1-15 11 3 3-13-13-3-5 4M1584 681l-2 1-14 1M1577 586l1 4 6-1 9 11 8-3-1-3M1554 638l5-10 10 2-2 10M1397 694l-2-11-3-3M1410 683l-15 0M1409 674l-9-4M1415 669l-3-10-4-1M1422 651l-4-7M1422 651l-10 8M1446 695l-2-16-4-1-7 6M1429 664l9 3 2 11M1448 656l-3 6 8 11M1448 656l-16-7-5 3M1456 689l-8-10-4 0M1466 676l-1-4 4-2M1449 695l7-6M1459 659l6 13M1452 654l-4 2M2437 741l-10-9-8 5 10 12M2429 727l-2 5M2416 719l6-3M2414 737l-1-1M2414 737l5 0M2414 737l-3 13-9 3M2411 750l7 6 0 1M2410 637l2-5M2410 637l11 5-3 11M2409 638l1-1M2432 670l-12 14M2427 666l5 4M2417 665l-5 15M2372 710l8-3 5 3M2348 640l1 11M2312 634l-8 5M2314 654l-1 0-7 4M2307 573l-2 13-2 2-2 1-11-9-5 10-11-8-4 5 1 7 9 5 6-3-1-6M1743 956l8-1M1754 971l4-2 8 1-1 12 0 1 8 2 7-4-6-13-4-2 0-9-16-4 3-13 1-10-3-3 0-10-15-6 10-12 2 1 8 10-5 7M1784 918l10-1 3-7-3-12-7 2-7 10M1768 909l-1 0 3 13 12-1 2-3M1776 896l-6 1-5-7-13 10M1768 909l2-12M1787 900l-11-4M1767 909l-7 1M1767 928l3-6M1851 994l-15 1-1-1 3-10 14-2-1 12M1871 993l-17 4-2-1-3 11 2 5 15-2M1871 993l-3-5M1853 981l-1 1M1853 981l5-1M1606 582l13 4 4-2-1-7M1623 584l6 3 1 0 5-8-6-8M1629 564l10 0 2 1 2 9-8 5M1688 543l3 0M1645 646l-2 4 7 12 1 0 6 4 2-1M1645 646l-7-12 1-5-6-6-4-1-3-8 5-8-7-8-1 0-9-1 5-11M1634 653l-7 0-2-10-8-7 3-7-7-6-13-2 8-15-1-4-6-5M1617 636l-5 20 13-2 2-1M1695 476l9 15M1868 559l13-5 6 8 4 0 7 5 4-2 12 4M1913 545l3 0M1938 531l-1 14M1948 547l-1 13M2001 791l-6-1-6-12 16-4 2 2-2 10-4 5 5 9-13 9 2 7-7 9-6-14-2 0-7-10-6 0-4 15 8 2 5 9 12-2 4 7M2029 771l4-7-3-3-14 3-4-6-10 10 3 6M2029 771l-10 2-2-2-10 5M2037 763l-4 1M2033 779l-4-8M2033 779l13-3M2031 786l-10-1-2-12M2031 786l2-7M2012 756l0 2M2005 786l15-1-3 17 10 0 4 5 3 9-3 4-13-3-1-15-11-1 0-1M2068 901l11-5 8 1-9 12 12 6 6-5-7-13 1-2M2142 942l-4-1-3-10-7-4-4 0M2142 942l4 15 12-12-6-6-10 3M2096 832l5 6-3 11-14 0-1-6 13-11 5-7 9 1 8 6 1-2 4-14 7-1 5 3 0 13 1 1-5 8-12 4-3-5-15-1M2123 816l-2-2-8 1-3 11M2118 832l-2 7M2072 827l-8 8 2 3 16 3-2-9-8-5 1-9-9-3 0-11-3-1-10-11-2-1-3 3-12-2-3-6M2083 843l-1-2M2087 826l9 6M2087 826l-7 6M2083 850l-15 2-2-14M2083 850l1-1M2066 801l14 8 0 5-7 4M2078 793l5 8-3 8M2078 793l-9 0-3 8M2087 826l-3-10-4-2M2009 857l-7-4-7-11 1-3 8 0 7 8 10-7 6 7 0 7-18 3-1 6-9 7 9 14-14 6-2-2M2096 874l4-8 0-4-16-3M2098 849l5 6-3 7M2090 872l-8 4-8-8-2 0-5-2-9 16 5 5M2133 806l-6-11 1-1-2-17 14 1 5 4 0 6-6 3M2118 800l5-4-9-11-8 4 1 10-5 4-2 0-9 12 10 7 5-10M2118 800l3 14M2133 806l6-2 9 3 2-1 4 1 10-8-1-8-3 0-10 1M2112 869l-12-3M2096 874l4 8 9 1-3 14M2081 881l1-5M2081 881l9 11 10-10M2138 915l-3-6-8-2-3 2-3 16M2128 760l10 4 2 14M2128 760l-3 1-7-3-15 8-1 0-4 6-5 2 2 13-2 2-12-3-3 7M2126 777l-4-3-1 0-2 2-5 9M2148 750l6-2 4-15 2 0M2141 746l-3-8 8-8-1-8M2148 761l0-11M2148 761l-10 3M2163 751l-9-3M2130 722l6 15 2 1M2172 776l-11-14-9 4 1 8 4 1 15 1 0 1M2164 757l-3 5M2145 782l8-8M2148 761l4 5M2021 944l7-4M2017 925l-1 15-14-2 2-11-9-5-8 4 0 13-4 3-1 3-14-6-4-3 0-5 10-2 9 13M1953 888l2 6 1 1 14-3M1981 871l12-1-2-13-5-5-7 11 2 8-2 2M2002 853l-11 4M1995 842l-9 9 0 1M2027 911l-12-5-3-10 14-1 4 2 0 1M2009 925l8 0M1907 1044l-11 1-4-6 7-10 11 1-3 14M1812 692l10 6 3-3 4-15-10-1-7 6-9-3M1817 668l2 11M1831 680l-2 0M1838 691l-13 4M1995 790l-8 4 0 14M1995 816l10 2 1-17M1989 778l-3-4-7 4-4 8 4 7 8 1M1960 760l0 8 6 6-1 11 10 1M1960 760l10-1 6 2-6 12 9 5M1979 793l-6 8M1963 798l4 3M2002 768l-8-3M1986 774l1-6M1976 761l3 0M1979 729l4-1M1979 729l-1 5 0 10 5 5M1970 759l0-13 8-2M1889 833l6-4 11-2 0 1 15-2 6-8 0-1-1-2 1-4-11-12-6 14-3 2-4-4-2-2 10-11 5 1 8-9-8-4-13 1-1-1 0-4-11-5-7 5 3 5 15-1M1889 833l-7-5-10 0-1-9 13-8 1 2 7 6 11-8M1889 833l-1 7-7 6-11-4-3-10-7-1-7 12-11-2 3-12 12-1 3 3M1816 750l-14 1-2 6 4 7-8 8-10-4 0-7-10-3-2-7-12-2-3-2M1841 769l-9 8M1851 758l4 3 1 0M1851 758l0-8 7-4 4 1 7 5 3 1 8-7 1-9-11-6-8 16M1841 747l10 3M1841 767l10-9M1870 731l-1-3M2098 576l-8 9-6-4-5 0-1 17 6 2 7-15M2002 603l-6-5M1986 614l0 3 13-1M1976 623l8-2 2-4M1971 617l7-9M2102 733l12 12 8-4M2104 729l16 5 3 5 13-2M2104 728l0 1M2123 722l-3 12M2098 737l-2 2-15-3-4-4 0-4 9-2 12 11 4-4M2094 719l-8 7M2096 746l0-7M2096 746l-10 4-4 0-1-14M2072 720l5 8M2088 773l-7 7-10-3 4-15 9 4M2082 750l-5 2-3 7-8 1-4-16 7-1 8 9M2065 779l-9-4M2065 779l6-2M2081 786l0-6M2069 793l-1-1-3-13M2045 709l3-5 10-1M2072 720l-10 1M2029 735l6-6M2077 732l-6 6M1912 696l1 3-5 15-14-8M1962 712l1 9 16 8M1978 734l-15 3-2 4-10-4-6 9 11 7 6-9-1-3M1873 761l-6 8 0 1-6 5 3 14-9 3-4 7-13 1 0-14-5-7M1835 724l-13-6 1-6 4-6M1818 721l0 13M1818 721l4-3M1848 710l-10 1M1810 705l-3-4M1873 708l5 7 0 2 10 12 6-6 15 10 6-11-7-8-14 9-6-12 3-5M1777 572l14-2 0-8M1777 560l11-2 0-1 7-7M1774 576l3-4M1793 574l-2-4M1772 558l5 2M1774 691l-10 4 0 12M1774 691l2-8 2-3 12-1M1757 687l7-7M1784 698l-10-7M1784 698l4-2M1784 698l-4 9-9 5 0 6 0 1-12 9-5-10 1-10-3-1-1 0-10 11 8 3 5-3M1800 757l-12 1-1-8 12-6 3 7M1734 664l-13 3-1 9 5 4-4 10-12 4-3-4 4-11-7-8 14-9-1-7 4-2M1740 667l-6-3M1740 667l2-1 10 7 12-6-8-12 11-5 7 5 7-5 1 0 11 2 0 12M1752 673l1 11 4 2-5 7 0 14M1764 667l1 1 5-1 8 13M1790 667l-6-2-11 0-3 2M1616 756l10-7 5 3M1794 651l-8-16 10-8M1794 651l9-5 8 15M1793 652l1-1M1806 641l-2 2M1783 615l0 20-1 0-3 3 0 1-9 3-9-5M1683 505l3 4 15-1M1694 533l-8-7M1705 518l-18 1M1688 543l-10-14M1734 488l-2 11 6 7 12-6M1734 488l-12 3M1718 499l9 3M1772 558l3-16M2190 801l3-7M2179 801l6 2-1 13-5 4 0 5 13 8-4 8 4 15M2179 801l-8 5-3 8-5-1-13 9-4-6M2209 774l3 3M2190 801l10 8 9-4 1-3 11-3 4-9 0-2M2200 809l-1 5 3 6 2 7-4 5-6 0-2-15-8-1M2209 805l5 7 6 5 6-10 10-4 1-2 6-4M2187 686l-3-1M2204 686l1 2M2204 686l-6-7-11 7M2198 679l-1-6-1-1M2153 629l-8 10M2175 627l-9 7 0 1 14 8-15 10-5-8 6-10M2198 655l11 4 1 8-13 6M2219 693l0-16-3-3-1-2-1-2-4-3M2215 672l14-8 5 15 2 1-6 10M2243 682l-7-2 5-17-7-7 8-8 9 4-2 13 2 2 8-2 3-10-4-4-7 1M2229 664l3-8-5-3-1 0-13 2-4 4M2213 614l13-5M2215 626l5 3 1 2M2231 614l-3-4M1887 623l6-1M1902 595l5 0M1902 595l-6 3 1 12M1896 598l-11-5 0 1M1928 642l8 9 1 0 4 7M1923 642l5 0M1923 660l13-9M1975 560l-6 4 4 11M1982 563l1 6M2057 576l0 13-8 2-3-4-15-4 0-2 6-11-13-9-3 0-4 13 10 6 4 1M2062 574l-5 2M2046 596l3-5M1931 586l9 0 5-6 0-2M1926 596l19 4-5-14M1943 604l2-4M1948 547l5-3-4-16M1960 546l-7-2M2068 910l0 15-10 3-7-6M2042 936l15 2 1-10M2037 943l1 2 10 5M2052 947l5-8 0-1M2038 945l-8 15M2082 983l-16 2 0-13-5-5-2 0M2082 983l1 4 9 5-1 13 8 4 7-2-4-17-2-1-8 3M2075 999l-9-9-5 6 6 12-6 2-1 9 3 2 12-2 8-1 6-12-14-4 0-3M2047 981l5 2 14 2M2089 1006l2-1M2089 1024l-6-6M2107 1007l-1 0M2107 1007l7 10-3 8M2121 1016l9 14 4-9 14-1-6 11M2121 1016l-7 1M2112 992l2 5-2 6 14 4 1-13 14 1 0 13-7 2 0 11M1758 1013l4-11-7-7 7-6 12 11M1787 1020l0-8-11-2-8 10M1781 1030l-4 0M1776 1010l-2-8M1655 939l-4-15-10-1M1604 927l0-14 3-6-3-5 9-7 12 8 4-3 1 0 6 12M1593 913l11 0M1593 913l3-15-1 0-10-16 5-3 2-7-5-9-1 0-8 9 0 2-8 1 1 8 6 5 7-6 1 0M1603 885l-6 13M1603 885l1-1 10 2-1 9M1668 927l-5 11M1668 927l3 0 14 11 2-2 17 0-4 14M1550 855l14 10-3 6 9 4M1550 855l4-7 4-2-2-14-10 3M1567 848l4 8-2 4 9 12M1549 856l-9-2-6-9-9 5-7-8-7 2 5 12 7 0 1 3M1549 856l1-1M1548 844l6 4M1556 831l0 1M1571 842l-4 6M1579 856l-8 0M1557 818l-4 4-9-3M1557 818l1-12M1554 804l-12 13-3-1M1556 831l-3-9M1565 819l-8-1M1534 837l-3-3 0-15M1581 819l0 6M1581 819l-2-4 12-13-1-1-1-11 2-2M1565 819l7-7-2-3-2-3 3-12 14 6M1541 797l12-11 5 4M1549 856l-3 14-4 3M1536 861l4-7M1553 786l-6-7-7 0M1559 738l-5 11-8-1-5-3-8 5-9-11M1560 754l11-7-4-8 7-10-1-3M1560 762l18-2-6-13 5-2M1560 762l0-8M1594 696l-10 0-2-14M1594 696l1-1 3-12M1640 706l-8 10M1640 706l-16 1M1526 882l-1-7M1526 882l-13 9M1531 893l-4 8M1531 893l-5-11M1488 824l9 8 6-3-4-13M1473 858l2-4M1477 831l1 5M1497 832l-3 7-8 2M1412 828l-5 6M1384 726l-6 12M1398 731l-2-9M1410 703l-9 5M1394 698l0 2M1384 726l9-5M1489 613l-7-6M1545 763l-11 1 3 11M1542 736l-1 9M1543 735l15 0 1 3M1551 766l-6-3M1551 766l9-4M1551 766l-3 11-1 2M1558 735l2-10M1544 725l14-2 0-14-12-4M1575 703l-7 4-6 1-2-16 8-6 8 14 8-4M1584 718l-11 7-5-18M1558 709l4-1M1584 653l4-10-6-6-3-9-4-2-6 4M1614 597l-7 5M1600 621l-1 0-1 2 9 14-4 6-13-1 6-19 2 0M1591 609l1-8 1-1M1584 613l-6-2-5 10 2 5M1579 628l13-5 4 0M1584 613l7-4M1592 601l-17 0 3 10M1578 590l-4 11M1559 627l4-12-12-3-4 3-1 6-4 7M1559 628l0-1M1573 621l-10-6 6-15-4-1-9 3-10-9M1538 608l9 7M1565 599l-4-11 6-3M1432 649l4-10M1438 638l-1 0M1923 1033l-10 14 15 6 3-16-4-4-4 0-10-5-3 2M1896 1045l0 1-8 7M1909 1060l-7-2M2414 771l-8-7-1 0M2382 655l-1 11-10 4-2 0M2305 672l-5-5M2295 644l0 1M2290 661l-12-5 5-13-9-7-5 5-10 2-3-5 10-13 7 4 1 7M2280 671l-7-7 2-8 3 0M2273 664l-7 7-7-6M2319 594l-8 4-10 9-8-9-3 0-4 14 5 6-1 5M2323 608l-6 0-8 8 1 5M2277 610l1 16 8-1M2277 610l9 2M2309 616l-8-9M2286 596l4 2M2276 609l4-10M2301 589l-8 9M2255 786l4 3M1740 942l3-2M1748 927l7 0M1785 876l-18-1-2-5 5-10 9 0 6 16 0 4-3 2M1762 884l3 6M1762 884l5-9M1762 884l-5-1-10 5-1 6 4 5M1751 867l14 3M1751 867l-1 5M1765 812l-8-8 11-6M1772 813l3-8 8-4-5-13-8 0-5-4M1831 974l-10 12-6-2-6 4-9 2-2 0-5 6 2 11M1809 942l-3-16 5-3 9 1 1 2 13-3 0-6-10-9-14 4 0-12-4-3-12 0-1-6 8-7 11 4M1809 942l-5 4-1-1-16-9 10-8M1794 917l5 8M1797 910l12 2M1868 925l-3 9-7 6 7 11 6-3 5-8-11-6M1868 925l-15-2-2 1 0 13-13 1-2-13-2-2M1851 924l-5-1-3-10-4-1-5 5M1853 981l-4-9-17-1-1 3M1633 623l2-3 14-8 5 6 0 4-3 4 6 15 3 0 8 9-11 4-7-10 7-3M1699 574l-1 1-12-7-3-6M1700 582l-2-7-17 11-13 9-1 4-1 11-12 8M1594 669l5 4 10-12 5 6 13 0-2-13M1605 654l-8 2M1605 654l4 3 3-1M1599 673l1 8 5 1 10-3-1-12M1897 549l7-1 1 0 8-3M2066 972l13 0M2082 983l1-4M2114 927l-9-6-4 4-15 0M2129 959l2 10M2105 954l11 3 4-2M2117 984l8 3M2132 977l-2-5-14-1-3 8-11 2-2 8M2132 977l-1 2 12 14-2 2M2112 992l5-8M2116 957l-1 13 1 1M2119 845l16 12-1 3-18 0-3-6M2119 844l0 1M2083 801l10-2 0-10M2093 774l-5-1M2084 816l7-1M2095 787l10 1-1-10 15-2M2041 854l3-1-3-13-1-1-13 8M2041 854l-14 0M2048 808l-2-6-15 5M2047 816l1-8M2047 816l10 2 7-3M2051 778l-2 13M2021 840l-1-5 10-7M2039 835l1 4M2047 816l0 12-8 7M2070 886l1-1 10-4M2079 896l-9-10M2055 881l3 1M2053 857l1-1 8 2 5 8M2048 868l7 13M2062 858l6-6M2135 931l13-7-1-4-9-5M2152 939l1-9M2135 909l10-8 9 10-7 9M2096 910l7 3 7-7 14 3M2087 897l2 0M2112 883l6 2 2 6 6 6 1 10M2142 834l-6-2M2142 834l11-5 10-4 5-11 11 6M2169 898l6-10M2163 825l10 8-2 7-2 3-10-1-6 6 3 11-5 4-1 4 8 8 5-2 4 0 3-2 1-7-4-6-9 1 5 14M2116 865l13 8 4-2M2118 885l6-5 13 10 4-12-1-3M2104 778l-6-6M2111 751l-9 2-2 7-10 0M2008 911l-8-3-1-7 13-5-1-10 9-2 6-4 10 4-6 13M1975 899l-2 11 2 1 11 0 7 3 2 8M1866 962l-1-11M1866 962l-15 2-5-8-2 0-14 13-3-3-14 12-5-5-12 6M1868 965l-2-3M1849 972l2-8M1838 938l-2 2 2 10 6 6M1993 895l1-5M1972 1017l7-11 9 3 5-5 0-6 14-6 2 1-5 13-11-2M1972 1017l-6-1-5-10 9-5 8 5 3-11-4-8-10 4 3 10M1990 1020l-2 1-15 1-1-5M1957 1021l-8-7-6 5 0 17-12 1M1957 1021l2 8-15 7 3 7-1 5-18 5 0 2-4 8-13 1M1943 1019l-6 0-7 3-9-10-1 0-7 9 0 7M1960 760l-4-4-12 6 9 12 7-6M1952 776l1-2M1914 773l1 2 14 8-3 7-2 0M1873 761l11 5 6 0 1-1-3-16-8-3M1903 787l0 3 8 8M1894 803l7 6M1894 803l9-13M1959 787l-13 6-1 2 2 7 5 1 11-5M1952 776l-11 3-6-3-6 7M1914 773l6-9-3-2-18 3-1-1 5-14 1-1 10 5 3 8M1933 765l-7-2-2-20-3 0-12-6-1-1M1944 762l-9 1-2 2M1962 870l0-1 11-10-1-4 5-9 9 5M1975 842l2 4M1855 761l-2 13M1841 769l11 5-4 12-10 0M1812 770l-5 10M1778 788l5-4 11 2M1783 801l10 3-2 13M2071 577l1 1-7 15-8 11-11-5M2084 600l2 2M1999 629l-1-1-6 1-8 8 1 5 6 1 10-6-2-8 15-3M1977 633l7 4M1980 651l5-9M2052 748l-4-2M2052 748l7-4-1-11-12 0-1 0M2053 759l-1-11M2062 744l-3 0M2059 732l-1 1M2061 696l-2-7M2061 672l-2 13M2045 680l1 2M1745 474l-8 12-2 0M1714 478l20 7M1745 490l-8-4M1788 557l-9-16M1806 560l2-1 6 2 11-4 3 3M1745 733l-3-2-2-12 1-1M1787 734l-10-4-6-11M1787 734l-4 11-6 2-7-9-8 1M1780 707l10 6 1 7-20-2M1798 704l0 2 7 13 2 0 1 17-9 2 0 6M1786 768l-4 5-12-3-4-5 1 0M1788 758l-2 3M1756 766l2 15 5 3-7 9-2 8-5-2-11 4 3 9 6 2-1 12 6 2 7-2-1-6-9-6-2 0M1756 766l10-1M1750 750l1 14-8 6 0 6 7 5-2 6 8 6M1674 668l1-13-5-3-2-2M1670 628l-16-6M1645 646l5-2M1690 650l-5 1-3 3 7 11 9 0 2-4-10-11 14-9 0-1-14-6-5 9-9-5M1674 668l8 8 1 2 12-1 7-7-4-5M1773 665l1-10M1736 750l-6-2 2-14-7-6-1-2 8-11M1748 787l-4 4M1756 804l-2-3M1756 804l1 0M1690 746l-6 6 2 7 3 2 10 2 1-1 2-12 2-1 3-14-10-3-6 3-1-1-7-13-11 1 2 13 16-1M1713 761l1 8-3 3 3 17 2 8 12 7-3 7-10 3 1 11 10 6 6-2 0-10M1713 761l-13 1M1604 884l1-10-6-3-7 1M1765 812l-7 8M1762 827l3 16-11 0-2-15M1762 827l-3-1M2237 801l-12-11M2199 814l-7 3M2221 799l5 8M2204 827l16-2M2181 644l-1-1M2166 657l-1-4M2275 656l-3-1-3-14M2278 626l-5 3M2242 641l-6-2M2227 653l-3-9M2238 616l-1 10 9 7 0 2 10 3M2238 616l8-4 6 11M2231 614l7 2M2229 631l8-5M2261 585l9 2M2265 612l-17-3M2265 612l1-2 10-1M2265 600l-10-4-8 9-7-6M2265 625l0-13M2255 588l0 8M2015 598l-1-10 13-8M2011 583l3-8-7-5-10 8 2 4M1986 578l9-1 2 1M1992 562l2 2 11-2 1 1 10-7 0-5-8-9-4 1-6 4 7 15M1992 562l-10 1M2042 558l-5-8-1-4M1961 579l-6 6 1 14 3 1 12-5 0-11 3-3M1960 574l1 5M1979 599l-8-4M1959 601l0-1M1960 546l8-3-2-13M1975 560l1-13-8-4M1993 548l-1 14M1993 548l-9-5 0-5 5-9 4 1 9-4 8 2 2 4 9-1 7-6M2019 1006l-13 3 1 11 3 4 13-4 4 4-2 10-12 1 3 8-12 7-6 1-8-13 2-3-1-15M2041 854l-5 14-8-3-5 5-7-1-8-6M2053 857l-9-4M2048 868l-10 2-2-2M2044 886l-7-2 1-14M2011 886l0-1-3-1M2057 939l12 5-1 6 3 8-10 9M2081 923l4 0 5-8M2068 925l4 2M2069 944l7-4M2003 962l10 3 8-10-2-3-10 0-7-11-7 11 14 1-6 9M2021 944l-2 8M2002 941l-1-2 1-1M2028 960l-7-5M2000 964l12 13 6-1-5-11M2028 994l-6 1-1-1-12-1M2021 975l-2 1-1 0M1991 993l-10 2M1991 993l2 5M2006 1009l-2-3M2022 998l0-3M2003 984l4 8M2003 984l9-7M2075 1019l-2 12-8-2-2-8M2138 966l12 7-2 3-1 2-15-1M2146 957l9 10M2164 1014l-4-10 1-8 0-1-16-3-2 1M2148 1020l-4-11M1762 989l3-6M1823 940l13 0M1823 940l0 13 2 3 13-6M1793 996l-7-1-4-14 10-4-1-7-4-3-13 1M1823 940l-14 2M1804 946l-1 6 6 3 14-2M1748 927l-8-2-6 5M1740 911l-2 0 2 14M1704 936l0-1 8 4 7 0M1532 892l12-11 3 3 2 13-11 14M1531 893l1-1M1554 912l3-13M1572 907l-4-8M1588 900l-12-8 1-4M1614 862l1 5-10 7M1614 886l6-3 1-10M1667 924l-8-4-2-9-1-3-9-1-5 8M1668 927l-1-3M1651 924l8-4M1565 788l-2-12 1-5 11 2 5-11-2-2M1582 762l-2 0M1582 762l6-12M1590 726l-4 9M1610 738l-1 12M1610 738l-7-3M1582 762l8 5M1613 720l0-1-6-9-9 4M1613 720l8 15 3 0 1 0 0-20M1601 727l12-7M1610 738l11-3M1626 749l-2-14 18 12-1 2M1608 708l10-2-5-11-1 0-7 5 3 8-1 2M1595 695l10 5M1605 682l7 13M1488 854l13-1 5 8-2 7M1494 839l8 8-1 6M1605 654l-2-11M1588 643l2-1M1626 614l-8-3 0-1M1629 587l-5 11M1643 601l-12 5M1643 601l-8 19M1613 623l5-12M1957 1085l-14-2 0-4-9-8-7 1-2 7M1924 1063l3 9M1892 1039l-6-3-3-13-11-1M2398 695l1-2M2380 707l-2-9 8-5 3-12M2364 694l9-3M2365 679l9 7 4-3-7-13M2249 677l2-10M2241 663l8 2M2259 643l-1 8M1768 945l4 9 2-1 10-11 1-6-1 0-10-1-6 10-11-5M1767 928l7 7M1782 921l2 15M1842 841l-6 3M1839 823l-10 6M1739 895l-3-12 5-2 2-6-10-7 2-9 9-1 7 8 7-8-8-13 4-2M1731 898l6 13 1 0M1731 898l8-3M1908 1018l-13-1-1-1 5-7 8-1 1 10 5 3M1899 1029l-4-12M1920 1012l-8-8M1867 1010l1 4M1809 955l5 10-6 7 0 1M1823 940l-2-14M1822 902l3 2-1 4M1839 912l-1-12-4-1-5-15-6-2 1-5-10-13-7 4-1 5 12 11M1654 561l-8 0-1-14 11-2M1654 561l7-5M1643 574l7 4 5-7-1-10M1670 560l-3 11-12 0M1638 544l7 3M1674 558l-4 2M1634 653l5 14-9 5-3-5M1650 662l-5 4-6 1M1618 680l2 12-7 3M1633 679l-4-3 1-4M1633 679l-1 15-5 2-3 10M1615 679l3 1M1646 681l-1-15M1646 681l-13-2M1635 696l6 9 7 2-1 9 8 12-1 3-6 4-12-4 1-10M1635 696l-3-2M1905 548l0 1 10 10M1868 559l12 12 0 3M1885 593l6-12 4-1 7 15M2102 981l-4-5-7 0 0-13 8-1 2 6 14 2M2114 997l13-3M2121 1016l6-7M2054 833l-7 6 8 6 8-10-2-2-7 0-7-5M2041 840l6-1M2057 818l4 15M2064 835l-1 0M2009 835l10-1-7-13-5-1-3 4 5 11-5 4M2020 835l-1-1M2018 817l-6 4M2166 925l-11-15 10-6 3-5-6-3-2-11-6-4 4-6M2154 911l1-1M2171 847l-2-4M2200 832l4 7M2142 834l2 14-4 2-9-10M2135 857l2-1 3-6M1975 911l4 12-5 6M1965 912l-1 19-11-3 0-16 5-2M2001 939l-14 0M1902 880l0-13 8-1 6 5 9-6 10 9-1 5 11 9M1902 880l-1 1-12-6 9-11 8-11 8 4-4 9M1888 898l6 1 6 11 2 0 10 4 10-12 0-1-6-5 1-14 15-2-1 16 6 2-1 15 7 2 5-3-5-12-4-2-2 0M1900 885l0 7 15 4 1 0M1886 899l2-1M1875 900l-5-16-3 0-4 3-5 8-9 3-2-1M1881 882l-1-1 4-5 5-1M1901 881l-1 4M1892 860l-10 1 2 15M1892 860l6 4M1895 846l-7-6M1895 846l-3 14M1881 846l-2 13 3 2M1991 993l1-9 5-2 6 2M1973 1022l-2 9 4 2 14 5-7 8-6 0-9 3 6 8 7 4 2 0 0-15M1957 1021l9-5M1959 1029l7 5 5-3M1966 1034l-2 11 1 4-10 12 5 7 0 4-15 3-2-11 0-1 6-3 6 1M1957 1085l6-10-3-3M1943 1079l2-4M1934 1071l9-7M1937 1019l-5-12-6 0-5 5M1935 763l2-9M1942 722l1-2 15 2-8 12M1929 718l13 4M1944 707l-1 13M1963 721l-5 1M1956 756l0-3M1942 746l3 0M1970 746l-8-2M1894 735l-6-4 0-2M1888 749l9-1-3-13M1881 737l7-6M1931 805l13 1 0 6-17 5M1926 790l4 4M1927 811l4-6M1915 880l2 2M1950 873l-8-3-7 4M1920 856l5 8 0 1M1908 833l7 9-10 8 1 3M1908 833l-9 13-4 0M1920 856l5-12 2 1 9 10-11 9M1915 842l9 2 1 0M1921 826l4 13-1 5M1927 818l11 9-13 12M1976 827l-4 8-12-4-7 11-5 0-3-3-3-11 2-2 14-1 2 6M1975 842l-1-1M1858 895l10 11 7-6M1854 913l-2-3-9 3M1854 913l14-4 5 8-1 4 9 9 0 8 7 6 11-7M1863 887l-12-7 1-10 5-1 7 3 3 12M1886 899l-4 15-9 3M1880 881l-9-15 3-6 5-1M1871 866l-7 6M1884 797l-11-9-8 2 3 12-8 8M1884 782l-4-2 4-14M1894 803l-8 0-2-6M1890 766l1 11M1867 769l12 11M1812 830l5 15 7 1 8-4M1814 828l14 0-2-14-3-1-4-9 10-4-7-9M2071 608l-11 3 3 12M2078 598l-4 0M2057 589l8 4M1814 561l1 11M1824 551l1 6M1753 684l-7 0-10-5-2 1 1 19-6-1-8-8M1751 707l-14-7 3-3M1794 724l-2 8M1791 720l3 4M1814 738l-6-2M1818 721l-11-2M1691 611l4 2 6-3 1-11M1691 611l-1-13 10 0M1714 611l-4 4-9-5M1690 634l-3-6-8-2M1676 626l-2 1M1685 651l0-8M1687 611l4 0M1694 622l1-9M1694 622l-7 6M1687 611l-6-4-8 12-7-9M1710 651l-10 10M1710 651l6 4M1703 671l-1-1M1674 705l7-4 6-12 10 1-3 17-6 0-5 14 16-1 1-1 13 1 2-12 17 6 3-14 0-1M1674 705l-4 16 2 1M1691 735l-1 11M1684 752l-9-2-2-12 1-3M1657 666l1 10-11 6-1-1M1635 696l13-7-1-7M1714 789l-10 1-3 16-5 2 1 7 8 3 7-7-1-1M1712 811l3 3M1738 803l-5-2-5 3M1735 831l11-5M1735 831l-3-2M1714 789l11-4 8 10 7-5-1-10-13 2-1-10 4-5-8-12 4-6-7-5-12 5 9 10 6-4M1596 850l2 6-11 7M1599 871l2-13M1751 867l0-1M1770 860l-3-4-9 2M1767 856l-1-13 10-3 6 7 12-5 4 6-4 9-11-2-1-8M1735 831l4 8-10 14-7-6-2-6-12-1 3-13 5-2M1752 502l-6 15 6 2M1722 557l8-1-4-10 1-2 9 0 6 6 10-6-6-12 10-6M1745 562l-4-3 1-9M1746 532l-7-14-4-1 3-11M2035 544l-7 0-7-13M2036 1055l-9-10 1-2 14-7 4 6-10 13M2046 1042l5 4 7-4-1-12-6-3-9 6 0 3M2005 1033l4-3 1-6M2023 1046l4-1M2023 1046l-7-3M2025 1034l3 9M2088 950l12 9 5-5M2088 950l-4 1-2 8 1 2 8 2M2077 941l7 10M2071 958l11 1M2075 1002l-6 6 6 11M2145 992l2-14M1815 984l-2-6M1780 981l2 0M1559 882l2-10 0-1M1559 882l2 4 1 11M1546 870l15 2M1547 884l12-2M1653 893l6-7 11 7 3-13-4-6-1-4 0-2 2-7-4-7-1-1-7 4-13 0M1653 893l-10 1 10-14-2-8 0-1 7-14M1645 870l6 2M1621 884l17 0 3 10-1 2 7 11M1620 883l1 1M1641 872l-3 12M1643 894l-2 0M1656 908l5-6-8-9M1671 927l13-7 5 2-2 14M1674 913l1-2 0-2-7-10-7 3M1705 928l-14-8 3-7-5-9M1705 928l-1 7M1591 772l-5 5M1599 805l5-5 2-5 14-2 0-1M1503 829l5 1-1 13 4 1M1519 833l-4-5-7 2M2396 669l7 3 10-10M2381 666l7 9M2378 683l9-3M1845 885l-7-4M1845 866l7 4M1812 830l-9 3 4 16 3 1 7-5M1784 834l-8 4-3-15-11 4M1784 834l1-14-10-1M1793 819l5 14-3 2-11-1M1886 1020l-13-16 0-1 14 3 9-14 3 2 0 15M1894 1016l-1 0M1867 1010l6-6M1871 993l2 1 0 9M2001 1076l-17 1-1 0-15 0-1-1-4-1M2001 1076l0-4-9-12 6-9M2022 1073l-9-12-12 11M2031 1064l-11-8 3-10M2003 1077l-2-1M2036 1056l-5 8M2004 1050l9 10M1898 567l-3 13 8 1M1905 549l-3 16M2186 858l-1 1-2 10M1968 939l0 10-9 2-2-2 0-4-8-5-7 4-2 6 6 5 1 10 9 6 7-5-4-15M1898 913l-7 5-9-4M1900 910l-2 3M1922 902l8 12 6-1M1955 894l-12 6M1953 912l-5 0M1943 915l-1 13-4 2 0 9 4 5M1873 994l7-4 15 1 1 1M1880 990l0-11 8-9M1895 991l1-13 8-4 7 6-10 14 9 3 7-4 1-12 0-1 12 2 3 4 9-2-5-16 10-3M1868 965l10-2 0-12-7-3M1887 967l-1-2-8-2M1878 951l10-3 2 4-4 13M1946 955l11-6M1942 984l13-7 6 11 2 0 4 3M1965 1049l2 0M1975 1033l1 13M1967 1076l13-15M1983 1061l-1 0M1941 1004l-4-7 9-6 6 6-2 9-1 0-8-2-9 3M1926 1007l0-11 6-4 5 5M1942 984l4 7M1961 1006l-11 0M1961 988l-9 9M1897 748l6 2M1909 737l-5 12M1921 743l-7 11M1952 803l8 12-15-1-1 12M1962 817l-2-2M1936 855l6 2 1 4 16-4 3 12M1972 855l-12-1-1-6-6-6M1959 857l1-3M1866 848l4 10-10 2-6-8 1-3-2-6M1870 842l-4 6M1874 860l-4-2M1857 869l3-9M1845 859l9-7M1845 859l-6-5-12 8M1870 817l6-13 9 0 1-1M1857 828l-1-14-12 1M1839 823l1-3-11-8 5-10 3-1M1865 790l-1-1M1876 804l-8-2M1848 786l7 6M1856 814l3-3M1793 819l18-1-2-14-13-3M1803 833l-5 0M1811 802l-2 2M1715 708l0-2-6-4-12 7 3 10M1737 700l-2 0M1694 707l3 2M1682 679l5 10M1697 690l3-1 6 1M1714 637l-9 5-1-1M1694 622l10 5M1710 651l-5-9M1660 767l11-5 0-10-10 0-1 1-13-11-5 5M1660 767l-2-11-12 3 0 14 14 0 2 2M1678 771l-7-9M1678 771l-1 1 1 1 0 13 15 2-7 15-8-1-5-9 0-2 5-5M1660 773l0-6M1646 759l-1 0M1686 759l-8 12M1673 738l-12-1 0 15M1670 721l-4 0-11 7M1661 737l-7-6M1625 735l11-4M1682 679l-8 5-3 5 10 12M1674 684l-11-8-3 1-2-1M1716 724l-8 10-1 1M1725 728l-7 13-10-7M1725 785l1-3M1736 750l0 16M1678 773l13 4M1695 780l1 6 8 4M1701 772l-6 8M1686 803l1 2-3 11-9 2-1 15 6 0 11-5 1 0 5-13M1626 854l-7-8 13-6 1 0 5-1 12 8-6 8M1612 843l0-1 2-7-19-3 7 13M1665 853l0-1-15-6 0 1M1736 883l-7 0 3-14-12 1-2 13-4 1-3 12 5 9 1 0 13 9-7 10M1731 898l-2-1-4-12-7-2M1729 853l0 1-12 9-2-1-5-7-5-2-10 5-1 9-3 2-15-9 11-9-9-4-4-14-6 1-4-2-3-14 6-6 1-1 10-9M1735 859l-6-5M1746 532l-9 3-1 9M1730 519l1 11-5 6 1 8M1730 519l-4-1-4 0-4 16-6 4M1735 517l-5 2M1737 535l-6-5M1717 516l5 2M2028 544l-12 7M2007 570l-1-7M2012 532l-4 10M1993 548l5-1M2004 543l-11-13M2052 983l7 13 2 0M2162 987l2-4M2161 996l11 0 6 10M2148 976l14 11M1791 970l9-9 2-8-10 0-6 4-12-4M1808 972l-8-11M1784 942l8 11M1803 952l-1 1M1688 872l-20-4M1688 872l-3 8M1687 883l-9 10-8 0-2 6M1519 833l-1 9M1506 861l10-5M1840 870l-10-2-6 9M1824 846l0 14-10 4M1807 849l-9-1M1795 835l-1 7M1810 850l-11 12M1796 861l-2-4M1785 876l3-2 8-13M1779 860l4-5M1985 1089l-11 1-6-13M1983 1077l2 12M1650 578l-14 13 7 9 0 1M1667 599l-21 1M1667 571l1 4-6 9-9-2M1686 568l-8 11-10-4M2145 901l0-4-8-5 0-2M2181 872l-11-1M2171 882l-4-9M2156 859l2 0M2171 847l-4 11M1937 968l-3-1-3-15 9-2M1930 982l2-14 2-1M1918 980l2-13 12 1M1899 994l2 0M1926 996l-9-3M1881 930l9-3 0-2M1876 940l5-2M1903 925l5 5-3 7M1912 914l4 11-8 5M1930 914l-6 12 2 3 12 1M1963 988l10-13-2-9M1973 975l7 9 7-2-2-11-11-7 6-10 1-1 10 3 7 9 0 1-13 5M1927 845l18-6M1938 827l4 1M1942 857l6-15M1962 817l-4 8M1811 818l12-5M1811 802l8 2M1709 702l0-8M1667 690l-4 0-9 6-6-7M1667 690l1 13-13 1-1-1-6 4M1671 689l-4 1M1660 677l3 13M1674 705l-6-2M1666 721l-11-17M1718 741l0 3M1713 761l2-2M1668 811l7 7M1688 849l-1 2 8 7M1688 849l-8-16M1631 782l6-7 5 1M1631 782l-2 7 4 3 14-4 4 4 4-2 7-14M1630 766l7 9M1618 777l13 5M1670 861l6-1M1688 872l3-3M1701 872l14-10M1701 872l-7-5M1718 867l2 3M1718 867l-15 9 2 4-10 9M1717 863l1 4M1701 872l2 4M1716 905l-6 8 2 5-7 10M1729 897l-12 8M1737 911l-7 3M1695 895l5 2 11-1M1695 895l-6 6-11-8M1694 913l11-1 5 1M2027 1024l9 3 6 6M2060 1019l-9 7 0 1M2050 1008l-4 5 5 13M2050 1008l-1-8-4-4 2-15M2038 998l-3 12 7 3-6 14M2061 1010l-11-2M2028 994l10 4M2022 998l13 12-12 9M1822 902l-5-17M1788 874l16 1M1667 599l12 5 9-7-1-6-6-5M1662 584l6 11M1690 598l-2-1M2151 883l-1 10-5 4M2171 882l-11 3M2141 878l10 5M1890 952l12 1 4-14 6 3 4 11 9-1 3-2-2-7-1-1-13 0M1887 967l20-6-5-8M1908 963l-1-2 9-8M1931 952l-3-2M1920 967l5-15M1926 929l-1 13M1968 949l12 5M1995 952l-4 4M1997 982l1-16M2000 964l-2 1M1704 825l-11 4 4 7 8 6 3-2M1705 818l-1 7M1692 828l1 1M1705 853l0-11M1688 849l9-13M1673 793l-7 1-5 11 6 7M1666 794l-11-4M1650 846l3-12 11-2M1661 805l-8-1-3-6 1-6M1633 792l3 11 0 1-10 3-5-6-1-8M1604 800l10 5 7-4M1614 835l3-4-15-14-8 15M1599 805l3 11 13-3-1-8M1581 819l21-3 0 1M1653 804l-5 11-7 0-5-11M1661 818l-10-1-3-2M1653 834l-3-2-5-1-7 8M1623 829l-1-15 1-1 16 4-2 7 8 7M1632 840l-8-11M1617 831l6-2M1615 813l7 1M1641 815l-2 2M1626 807l-3 6M2580 729l-2-3 5-9-14-4-3 1 3 11-4 4-6 0-4-11 8-5 3 1M2539 690l-3-2-1-5-7-4-14 10-3-2-12 13 2 4 1 0 15-4 5 6 12-17-19 0M2539 690l7-1 4-15-9-6-13-5-1 1-5-5-7 4M2569 713l11-12 7 3M2522 711l1-3 14-2 6 9 7-9-10-8-1-8M2522 711l-6 6-1-1-15 2-3-3-3 1-5 10 13 2-2-10M2536 688l-2 1M2478 722l6 6M2478 722l0-4 6-9 0-4-5-3-1-11 6-8 6 4 3 11 6 2M2510 735l0-3-7-3-16 11M2510 735l-6 11M2522 741l-12-6M2523 673l-8 2-3 3-1 7-14-1 1-12 7-1 1-5 5-3M2528 679l-5-6M2467 709l-1-5 13-2M2541 668l7-12M2550 674l7 0 1-8M2576 689l2 10 2 2M2576 689l-2-3 2-6 4-5M2570 700l-11-10 1-1-2-14-1-1M2556 703l5 5 2 5M2556 692l-10-3M2559 729l-7 3-7-5-1-8-1-1-10 1-11-8M2556 703l-6 3M2501 704l-4 11M2516 717l0 6-6 9M2503 729l-1-1M2498 672l-3-1-11 11-6-6-2-3 1-2M2512 678l-7-7M2463 689l15-13M2576 689l15 0M2558 675l7-2M2529 737l8-1 1 2M2529 737l-3-9 5-4 8 8 6-5M2527 740l2-3M2516 723l10 5M2533 719l-2 5M2497 684l-7 3M2484 682l0 1M2464 692l14-1M2846 335l-14-3 1-9 14 0 3 5-4 7 1 2 11 4 8-5M2863 328l-13 0M2863 328l-6-14-9 3-1 6M2863 328l1 0 7-7 10 1 2-10-11-4-3 2-9-3-1-2-3-2 0-15 7-1 4 3 8-5 11 2-8 12 6 4 8-6-4-10-2 0M2914 326l-13 5-7-7 4-11 12 2 4 11 1 0-4 17M2906 296l-8 5-1 10 1 2M2911 302l-1 13 13-6M2859 305l8-13 9 7 2 0M2898 301l-6-4M2897 311l-11-2-2-6M2876 299l-4 9M2807 310l15-3-5 16-3 3-3 0-7-5M2832 322l0-4-8-12M2846 315l5-13-4-2-1-13M2832 322l1 1M2832 318l9-6M2848 317l-2-2M2830 301l10 3M2830 301l9-16M2832 332l-3 4-3 1-12-11M2811 326l-3 12 6 8 6-2 6-7M2856 351l-3 2-9-7 3-9M2856 351l13 1-2 10-14-2-4 5 0 1 8 7-7 9-9-2-4 1-5-16 6-4 11 4M2837 349l-8-13M2844 346l-7 3-9 3-6 12 10 1M2830 301l-5 2 0 1M2881 322l4 4M2876 368l1 1 1 3 11 7-3 5M2876 368l-7-1-6 7 1 5 10 3 2 3M2811 355l1 2M2814 346l-3 9M2837 382l6 13M2867 362l2 5M2837 349l1 12M2837 382l0-1M2901 331l-1 7 6 8 0 3-1 1-13-1 3-9 5-2M2908 377l-5-11-3-1-3 1-4 11-4 2M2915 365l-12 1M2891 362l-14 7M2891 362l6 4M2915 365l2-10-11-6M2895 340l-9-2-2 3 4 11 4-3M2861 386l-6 1-5-5M2921 327l7-12M2925 332l-4 10M2921 327l4 5M2884 341l-12 2-1 7-2 2M2879 354l8 0M2869 337l3 6M2876 368l3-14M884 282l-5 3-3 16 6 0M893 293l2 2 0 13-2 1-1 5M889 285l12-6 7 5M895 295l8-1 7 8M853 264l1-3 2-4 14 0 0 3-2 9-2 0-4 2 0 9 8 5-5 10-5-1-5-3-1-2 8-9M853 264l-16-5M854 266l-1-2M889 247l7 11M901 279l0-6-9-6 0-1-11-5-6 8 9 8 8-10M860 311l11-2 0 1 1 1-1 12M871 309l2-6 3-2M881 248l0 12-11 0M873 303l-8-8M878 285l-8 0M858 309l2-15M858 309l-8-3-1-6 6-9M878 285l-12-16M845 284l9 5M872 311l16 14M868 269l7 0M881 260l0 1M884 282l0-5M843 298l-3-12 5-2M895 308l11 0M652 594l7-10-2-2-12 2M659 603l9-12-5-7-4 0M659 603l-7-9M652 571l-4-2M652 571l5 11M676 601l-8 8-9 0 0-6M676 601l-4-8-4-2M715 597l1 5 15-1 1-3-4-11-13 10-5-6M731 601l3 6M732 598l14-6M730 573l-10-2M730 573l6-11M688 580l5 11 0 4 4 1 8 15M688 580l-7 4-2 5 12 7-6 7-9-2M663 584l7-7 0-2 13-6 6 5 1 0 7 2 8-5M672 593l7-4M697 576l5 6 8 3M689 574l11-14M715 579l-1 1M690 574l-2 6M693 591l9-9M715 579l13 8 1-1 2-11-1-2M734 608l15 9M702 664l12 0 3-9-11-5 2-11 8 1 4-12-1-14-6-5 3-7M659 609l1 11-14 7M657 634l-10-4M657 634l0 12-7 1M685 603l1 4-12 11-6-9M652 571l7-4 8 3 3 5M729 586l15-1M649 662l13 1 1-1 10 5 10-4 6 13M653 679l5 0 4 2 3 5M698 676l0 1-8 0M713 609l-7 2 6 14-11 6 0 5 7 3M703 652l-3 9 2 3M734 608l-4 5-11 1M730 613l3 14-1 1 0 11-13 4 1 8 3 1M660 620l4 6 10-7 0-1M657 634l7-4 0-4M693 644l-1 15-8 3-3-6-5-6 4-11-5-4-4 0-9 13-5-2M703 652l-10-8M700 661l-8-2M674 619l4 3 6 0 6-9 9 2M664 630l7 5M673 667l0 6 4 6-1 7M680 639l3-1 9 4 9-6M732 639l3 4M717 655l3-4M732 628l-12 0M719 643l-3-3M683 569l0-3M698 625l-11 2-3-5M701 631l-3-6M683 638l4-11M1730 329l1-2 11-3M1730 329l6 11 4-1 3-7M1699 464l-3-10-10-1M1696 454l6-6-2-5-9-5-5 6M1725 355l4 5-6 11-5 1 5 16 7 4 4-4 8 2M1725 355l-11 7-2-1-3-14-5-1-3 2-13 0-6 6-3-2M1677 282l-1 9 5 4 15-13-2-2M1683 300l0 3-8 8M1729 360l12 1 1-2-13-14M1734 375l-11-4M1734 375l0 13M1725 346l0 9M1742 359l3-2M1739 296l-4 11 2 4 4 3M1728 291l11 4M1723 304l12 3M1728 318l9-7M1723 304l-8 6 0 7-1 2 9 11 1 0 6-1M1731 327l-3-9M1728 291l0-10-7-5-6 14 8 4M1728 281l10-3M1691 438l0-7-6-3M1699 464l2 2-3 10M1706 464l-5 2M1727 467l-7-7M1727 467l9-2M1706 434l-5-6-2-2-8 5M1707 384l6 5-1 11-14-5 3-9 6-2 7-12-13-2-3-9-10 1-6-4M1679 323l5 13M1724 330l1 16-10-1 0-9 8-6M1710 295l-13 3-1 0 2-14M1712 291l-8-7M1701 307l-4-9M1701 307l11 1-2-13M1712 308l3 2M1715 290l-3 1M1740 446l-6 1-4 4-11 2-4-3-2 0M1712 468l-6-4M1706 434l12 2 2-2 3-5 0-2-1-2-4-2-17 5M1744 437l-17 2 7 8M1713 401l6 3-7 13-12-3 0-1 13-12-1-1M1730 392l-1 3-6 9-4 0M1698 395l-5 4 3 11-5 3-11 0M1718 423l-6-6M1726 409l-3-5M1699 426l1-12M1691 413l-6 14M1683 395l3 0 5 4 2 0M1686 391l8-12 0-2M1686 391l0 4M1674 374l15 1-1-13M1683 383l7-8-1 0M1715 345l-6 2M1687 337l3-1 12 4 3-12-11-3M1692 321l2-6 2-1 15 7-4 6-2 1M1679 323l13-2M1683 303l11 12M1714 319l-3 2M1715 336l-8-9M1701 307l-5 7M1723 427l17-8 0-6-14-4M1749 410l-9 3-1-9-10-9M2351 476l-10 6-4-5M2318 497l6 12 1 1 2 11-4 3M2331 494l-1-14-6-1-5 6 3 8 9 1 5 2 6-6-1-8M2318 497l4-4M2351 476l6 7-7 8-8-1M2362 505l-9-1-3 2 5 13 8-1-1-13M2377 521l-3-3 1-2-2-13 9-4M2374 518l-8 1 0 14M2325 510l11-10 5 7 9-1M2336 496l0 4M2350 491l2 3M2357 483l8 0 1-1M2373 503l-7-2-1-7 1-1 15 0M2366 519l-3-1M2349 524l-5-1-4 9M2355 519l-6 5M2339 519l5 4M1109 739l6-3 1-4 11 0M1120 711l-10 3-4-3-9 2 3 15-5 4M1123 698l-17 6-1-2M1115 729l-4-4-11 3M1115 729l14-9-2-6-7-3M1106 739l3 0M1156 737l1-5-6-9M1140 742l0-2-8 1M1140 740l2-4-1-2-6-10-6-4M1115 729l1 3M1095 713l2 0M1144 716l7 3M1141 705l9-6M1141 705l3 11M1127 714l11-10 3 1M1134 699l-10-3M1138 704l-4-5M2287 1172l5 9 8-8 5 6-1 6-12 0 0-4M2309 1168l0 8 10 5 3-3-7-14M2291 1186l1-1M2291 1186l8 13 9 0 1-9-5-5M2284 1203l8 3 7-7M2268 1216l7-1 9-12M2320 1198l3-6-6-8-8 6M2320 1198l-11 2-1-1M2319 1181l-2 3M2294 1213l-14 5M2296 1226l2-9-1-1 13-12-1-4M2292 1206l2 7M2323 1222l-5-6-2-1-4 3M2325 1210l11 4M2325 1210l-7 6M2310 1204l6 11M2325 1210l1-7M2288 1188l-13-4M2365 1186l-4-9 0-1M2323 1192l8-1 3 9 4 1-1 12M2344 1199l-6 2M2361 1193l-13-2-4 8M2357 1176l-10 11 1 4M2322 1178l3 0 8 7-2 6M2347 1187l-5-4 0-10-9-6-8 11M2332 1159l11-1 7 9-1 2-7 4M2357 1176l-8-7M2675 1198l14 1 2-3 7-5 8 12M2675 1198l-2-8 7-8M2689 1199l2 8M2644 1220l-4-7-1-7-4-2-10 5-4 11 1 1 9 0M2621 1220l-7-1-4-2 2-15 1 0 3-2 9 9M2612 1202l-12 4-2-3-14 3M2613 1202l-14-10M2610 1217l-9-1-1-10M2616 1200l2-5-3-5M2635 1204l-1-5-4-5-12 1M2662 1190l-2 15-5 2-5-3 0-11 6-7-1-5-3-5 13-7 3 1 1 1 8 2 3 2 1 6 9 0 9 9-1 1M2639 1206l11-2M2643 1190l-9 9M2643 1190l7 3M2655 1214l-11 6M2655 1181l11-4 7 12-11 1M2650 1175l-10 8 3 7M2650 1175l2 1M2669 1206l2 9M2660 1205l9 1M2658 1221l10 1M2643 1230l0-1M2643 1230l1 1 9-1M2622 1221l1 7 3 7 17-5M2629 1245l9 1M2629 1245l-3-7 0-3M2699 1170l6 6 7 0 4 3 10-2 1-5-5-9 1-10-4-3-7 0-2 1 0 10 4 4 8-2M2677 1173l4-16M2635 1182l-4 3-1 9M2640 1183l-5-1M2629 1245l-7 10-5 0-5-2-9 5M2774 1176l2-9 11-3-2-8 8-3 5 2 4-3 5 1 9-5M2699 1190l15 0 2 6M2731 1153l3 2 16-2-3-10-7-3-4 2-5 11-8 0M2768 1176l-8-7 2-5-5-10 8-5 0-5-9-9-9 8M2626 1238l-15 3-1-5-3-3-6-1-2-2-4-11-6-1-6-10M2584 1224l5-6M2690 1169l-7-12M2690 1169l9 1 1-2M2680 1175l10-6M2712 1176l2-11M2703 1151l-6 7M2774 1161l1-7 2-1 6-11 3-3 1 0 6 14M2831 1139l-6-4-9 9-10-8-5 1 1 15M2821 1119l2 7-1 1 3 8M2734 1155l3 10-10 7M2725 1195l7-11-6-7M2738 1193l-5-9-1 0M2581 1249l7-5-1-8-7-8 4-4M2581 1251l13 9M2581 1249l0 2M2594 1245l3-2M2750 1153l1 1 6 0M2756 1135l1-6M2822 1127l-12 1-5-9M2787 1139l9-3 5 1M2739 1182l4-15 3 0 5-13M2739 1182l12 1 1-12 8-2M2737 1165l6 2M2733 1184l6-2M2611 1244l1 9M2771 1130l0 8M2771 1130l8-3M2796 1136l-6-14M1901 264l-3 1-7-12M1897 266l1-1M1897 266l-14-1-3-2-7 1-1-1-11-2M1901 264l10 4 4-2 2-13M1915 266l10 3M1897 266l-1 6-5 10-7-9-1-8M1899 304l4-8-3-7 3-2 13-3-5-9-6 3-2 9M1897 305l-13-8 6-11-13-4 0-5-6-10 2-3M1884 297l-6 4 1 4M1877 282l-10 5 0 1 7 11 4 2M1884 273l-7 4M1891 282l0 4M1925 290l-5-2-6 11-11-3M1919 285l1 3M1911 268l0 7M1919 285l-3-1M1896 272l9 6M2719 521l-2-7 5-3 16 10 3-7-3-7-15 3-1 1M2719 521l5 3-3 14 4 2 9-13 3-1 4 22M2721 538l-6-1-3 2-11 1-8 1M2714 528l5-7M2714 528l-9-3-6 5-5-3 0-14 0-1 0-1M2694 512l11 2 7-2 5 2M2741 514l13-1M2737 526l3 1 15-4M2740 527l11 8M2701 540l0 5" transform="scale(.5)" fill="none" stroke="#c8c6c3" stroke-width="1.8"/>
<path d="M1700 747l4 0 2-8M1708 756l-4 4M2176 759l1 8 11 0 1-1M2184 755l2 0 1-1 1-4M1693 743l-2 1-2 12M1686 775l2 9M1718 746l-4-8M1691 757l1 7M1685 696l-3 10M1709 685l7-1M1834 769l-1-1M1778 846l6-1M1782 833l5 1M1812 689l4-7 6 4 7 0M1790 685l4-3M1790 685l-5-11M2231 689l-1 0-6-4-5-1M2234 691l1 3 13 3M2177 745l-2-1M2163 748l1-5M2176 759l-8-4M2160 734l-1 2-4 2M2160 715l1 0 12 0M2166 705l5 0M2187 705l2 8-4 4M2173 703l7 3M2175 695l9-1 2 1M2187 705l0-1M2186 694l13 0M2228 677l-7-5M2208 667l10-2 3 2 2 0 4-1M2201 687l1-1 4-8M2193 684l-7 10M2193 684l2 0M1943 1030l-6 7M1929 1031l-7-4-1-1-5-4M1883 870l-8-5-4 3 1 6M1684 741l-1-5M1691 744l-7-3M1683 756l-2-12M1697 734l-10-2M1696 817l-8 2M1790 685l-1 3 3 3 8 0M1812 689l-9-9M1892 772l4 6M1892 766l0 6M1884 775l-4-1-2 2 0 7M1847 749l-1-1M1834 752l-1 4M1843 761l2 0M1847 749l12-8-5-5M1818 729l1 5M1830 737l-3 1-4 7 1 2-3 6 3 6M1830 737l2-2-8-9 3-5M1826 716l-5-4-8 5 3 10M1778 761l-9 5-3-7M1775 774l-6-8M1778 792l-4 8 1 3M1708 756l8 4M1718 746l2 1 2 8 3 2M1715 723l9 3 1 0M1725 745l1-7M1709 685l-1 8M1699 724l-2-9-3-2M1687 685l-2-10-2 0M1709 655l7 7M1789 688l-9 1 0 1M1780 691l-4 13M1730 693l4 3M1732 707l4-2M1730 689l-6-3-1 0M1714 697l1 1M1741 687l1 11M1739 726l-9 2 2 8M1748 726l-1-8 3-1M1742 729l-3-3M1741 716l-3 2M1729 714l3-7M1763 845l0 1 1 9-1 0-7 2-7-5-3 2-3 9-6-1M1839 791l-1 3-5 8-7 1M1834 772l-14 2-2 1M1865 799l7 5-6 10 12 3 2-4M1865 799l0-2-7-8-4 4M1871 789l4 9 0 6M1805 864l4-8 3-2 5 1 1 0M1826 822l6 4 7-3-2-11 3-2M1796 838l0 9M1807 847l-6 1M1802 825l2-1M1802 825l-2-1M1788 833l8 5M1788 833l1-4-2-5M1815 845l-7 2-1 0M1791 854l7 7M1815 845l4 2M1822 837l1 7M1855 844l8 3M1819 805l0 4M1849 815l-3 0M1845 833l4 14-5 9 1 8 1 1-3 9-10 0M1843 833l-6 6M1785 796l5-2M1787 673l0-8-6-3M1767 663l0 8 2 1M1777 664l-1-1-3-11 8-1 3 3M1757 647l10 5 3-1M1766 653l-15 3-1-2M1759 672l8-1M1752 648l5-1M1749 667l1 8M1925 672l4-7-5-7M1805 661l-8 2-2 10M1805 661l1-2M1793 660l-1-4M2150 745l-1 1M2150 733l-5 3-4-5 6-6M2170 869l8-8M2187 865l-4 6M2232 798l-1 3 1 4M2165 756l0 10 6 3 5-1 1-1M2173 779l5-3 5 2 1 6-2 4M2173 779l-6-3M2236 736l6 1M2236 736l0 9M2172 728l0-1M2170 731l2-3M2235 735l-5-2M2210 695l-2-7-6-2M2217 695l1-10M2206 699l-6-2M2206 699l4-4M2218 697l5 2M2218 697l-1-2M2176 676l-1 10M2170 676l-2 4-7 4M2182 686l2 8M2155 705l5 4M2073 745l-2 10M2073 745l-1-1-12-11 0-1M2061 756l8 0 1 11M1717 865l-1-6M1753 845l10 0M1742 827l1-9-3-4-5 1M1727 814l0-9M1913 1005l-8-3 0-5-6-6-3 3-3 6-9-8M1899 1028l-1-1-2 0M1909 1027l-2 0-3-13M1900 1013l-2-6M1887 1021l1-3M1881 1011l6 5M1885 1003l-3-7-9 0-1-2 2-7M1756 857l1 10-6 1-7-3M1751 846l-2 6M1729 871l10 3M1737 850l9 4M1737 850l-1-7-8 0M1873 996l-1 6-4 3M1882 1006l-10-4M1930 973l8 7M1939 988l-2-5M1922 991l2-9M1940 967l-5-2-5 8M1837 855l-2-3M1761 790l-10 8-2 0M1763 798l-2 7M1761 788l3-3M1771 798l-8 0M1709 785l12 2 0-5-11-5M1715 795l-5 0M1715 795l1 9M1721 791l7 6M1782 806l-3 0M1709 808l-4-2M1706 821l-6 3M1805 734l-5 0-1-11M1810 717l-5 5M1753 753l-3-5 5-7M1764 746l-1-2M1759 754l-3 1-3 7M1738 754l-11 2M1738 747l-2-1M1725 745l7 1M1743 745l-5 2M1701 768l0 1M1715 723l0-4 4-9M1707 694l-12-7M1694 705l-2-12M1705 680l-10 6M1689 665l-1 7-3 3M1699 664l6 11-13-1M1694 654l1 0 4-3M1705 661l-6 3M1716 675l5-4 0-3 8-4M1747 686l-6 1M1747 686l3 1 0 2-6 10M1753 717l6-3 6 3M1755 704l-5 1M1757 702l-2 2M2005 954l8-8M1995 758l9 12M1995 774l8-2M1884 873l-2 3-2 7M1879 884l-4 0-4-6M1772 855l1 10 2 1M1791 854l-7 6M1799 865l-3 6M1813 774l-6-10M1836 774l11-10M1826 783l-6-9M1846 802l6-8M1806 822l3-5-8-9-7-4M1856 838l4-5-4-9M1845 833l6 1M1885 839l6 5 6-2 6 6 6-6-2-8 1 0M1776 818l-3 6M1782 806l5 2M1782 833l-7-8M1753 637l3 0 5 2M1714 648l10 6 1 0 3-3M1798 617l1 0M1799 605l-5-3M1786 636l-1 6M1770 648l3-7M1916 614l4-4 0-3M1935 658l-9-4 6-6 4 0M1920 624l-1 2M1928 683l-11 1-4 4-1 6 3 8 0 1-3 3-12 3 1 8M1863 765l-8-2 0-11 11 7M1870 767l-6-3M1816 682l0-4-7-5 0-2-4-10M2152 724l-4 0M2139 745l-3-2M2138 721l-5 8M2137 796l12-1 1-9M1991 996l-3-3M1991 996l8-5-2-5M2138 789l-7-4M2145 785l-6-9 4-4M2136 795l-4 1-4-9-6 0M2132 766l3-4M2116 809l-5-1M2132 796l-7 5M2096 800l-2 8M2116 809l1 6M2085 780l0-1-9-3 7-10M2094 767l-7 2M2094 767l7 5M2107 803l2-3M2120 785l-9 2-5-12M2102 790l2 0M2102 790l-7 8M2086 798l8 0M2086 798l-5-9M2086 784l4 3 8-2M2157 875l4 2 1 3 11 6M2174 853l2 2M2172 853l-8 5M2191 867l1 11M2225 823l-2 1-11-7M2195 799l-1 5M2207 819l-7-8M2207 819l1 0M2191 867l6-1 3 2M2189 854l8-1 3 2M2193 879l9-5M2160 783l-7 2 8 9-6 6M2148 771l5 8M2188 767l0 8M2188 826l-1 9 0 2M2193 841l3-8M2189 854l-3-7M2197 844l0 9M2255 774l3-3 0-1 4-8M2244 781l0-6M2189 713l6 2-1 6-6 6M2195 736l3-1M2210 734l5 4M2221 735l-6-9 8-3 7 6M2137 693l-1 2 0 6-9 4-1 0M2146 697l-2 5 4 3M2142 684l6 9M2138 711l3-8M2155 705l2-12M2132 716l-7 6-2-2M2127 727l-2-5M2049 759l3 2M2055 762l1 0M2054 747l2-1M1993 756l2 0M2044 745l10 2M2043 741l7-7-6-8-1 1M1737 839l-5-5M1725 836l1 4M1715 847l-5 8-1 0M1764 823l-4 7M1759 816l-4 1-7-11M1769 812l-7 6M1743 835l0-7M1743 835l4 4 2 5M1758 832l-6 0M1700 832l2 2 1 7-2 3M1933 1018l9-1 1 8M1952 1031l3-7M1966 986l9 2 2 1 10-3M1975 998l2-3M1962 999l4-4M1976 974l2 1M2004 1026l2 1M1990 1032l-7 1 0 1M1952 1031l4 5M1857 936l-1 8-4 2-7-5M1893 893l-7 4M1893 893l-1-8M1870 906l4-2 1-3-4-6-9 1-2-8M1861 902l9 4M1884 915l-4 10 11 3 0 6M1889 903l-10 7M1871 962l-5-1-3 1M1882 947l-2 7M1860 986l6-5-1-6-4-4M1914 996l4-5M1881 958l0-1M1893 966l-12 2M1884 977l-4-3M1871 962l9 7M1880 932l4 6-3 7M1873 938l7-6M1893 893l3 2M1869 888l-8-1 1-9M1826 860l7 6M1847 906l-2-8-8-1 9-10M1749 777l-3-1 1-11M1761 788l-8-3-4-8M1760 771l-2 0M1737 764l2-8M1723 816l-6 4M1821 711l-9-5M1803 694l0 7M1821 711l3-10M1780 706l7-6M1791 698l-2 2 5 9-3 3M1804 764l-4-10M1791 746l2 6M1809 738l-5 7M1799 735l1-1M1826 716l3-2M1841 718l-1 1M1778 749l-7-4-3 1M1778 749l7-6 6 3M1774 737l9-1 6-5M1776 754l2-5M1771 726l7 0M1706 715l1-1 8 5M1769 687l-7-5M1775 684l-6 3M1887 799l-3 4M1887 799l-2-6M1890 874l-6-1M1890 874l5 4M1903 886l6 0 8 3 2 7 3 0 8-3M1895 785l1 1 5 9 3 2 1 3 5 4-1 10M1904 772l2 1 5 4M1887 799l6 0M1911 791l7-6 7 8M1981 925l-2 0-7 4M1934 905l1-4 8-4 6 9 3 3M1964 746l6 9 4 0 1 1 16-2M1965 744l8-2M1984 744l-3 0-2 1M1957 757l10 1M1996 755l10 2 0 12M2050 773l-8-1M1854 875l5-1M1849 864l-2 1M1826 783l-2 2M1804 782l8 5 3-2M1858 788l-1-3-1-7-5-2M1867 778l2 8M1858 789l0-1M1796 767l3 1M1875 833l0 10M1868 824l1 1 8-2 3 2M1868 846l3-3M1877 832l8 7M1740 635l2-2M1740 635l-8-4-6 4 5 9M1733 626l10-3M1739 643l1-8M1742 643l7-8M1769 633l-1-4 6-4M1803 628l5-7 1-4M1799 605l10 0M1798 636l-4 11M1792 626l4-2M1791 633l-5 3M1781 627l4-6 7 5M1782 606l-2-4M1794 598l-6-4M1801 595l-2 0M1842 596l9-4M1823 594l8-4M1811 594l1 3-2 6-9-8M1810 603l0 1M1856 585l6 7 9-2M1853 588l3-3M1855 600l3 7-2 7 2 2 0 1 8 4M1840 595l-2 0M1932 611l4 1M1907 614l2-8-5-8M1942 686l1-1M1860 703l3 11M1873 714l-3-2-4 2M1873 723l-5 4M1894 746l1 0M1880 763l3-6 3-1M1890 737l-4 0-3 10M1954 759l3-2M1954 759l-6-5M1933 758l7-4M1941 765l-5 0M1843 678l2 6-1 1-13 4-1-1M1858 691l-12 5-1-12M1858 686l1 4 7 5M1835 703l1-9 1 0M1847 703l-1-7M1851 705l-4-2M2242 808l-1 2M2070 731l8 6 2-1 6 2M2092 756l-9-2M2088 746l-6 2M2104 756l-6-2M2119 768l-4-1M2125 763l7 3M2086 798l-5 5-1 0-1 5M2081 763l-10 7M2072 781l6 9M2094 825l11 0M2093 810l1-1M2162 857l-4-9-7 0M2152 864l5 4M2177 883l7 3M2191 884l-4 2-1 0M2126 805l13 2 1-1M2119 817l-6 8-4 2M2230 789l1-2M2231 801l-7 0-4-7 1-12M2212 827l-9 5M2216 857l-9-4M2197 784l0 2M2170 789l-1 6-1 0M2183 790l-6 10M2194 818l-5 1-1 1-8-8M2271 727l-8-4-2 5M2271 727l2 5M2276 718l-5 9M2255 758l5 0M2258 770l-4-4M2244 761l2 7M2213 744l-6-2-3-5M2214 747l-7 5M2226 736l-5-1M2217 757l-5 2M2197 745l4 3M2205 763l-6 4 0 4-4 6M2211 765l-1 10M2217 757l4 3 1 6 10-1M2242 748l-2 6M2221 760l8-7M2207 703l3 1 3 0M2212 725l2-10M2217 714l7 4M2235 735l6-7 6-2-2-8-3-3M2241 715l-5 4M2170 676l-1-3M2168 671l8-10M2181 667l-3 9M2126 685l-2-2-6-11M2126 685l2 6-2 4-11-1-2 2-6-1M2138 675l-8 0-1-9M2104 694l-8 4M2032 764l2-11 7-4M2006 757l3-10 7-3M1994 737l3-2 1-7M2061 672l-5 2-6 11M2060 667l-4-4-1-7M2048 668l2 6M2045 684l0-1M1922 1002l-4 3M1933 1005l-1 2M1935 1006l9 9-2 2M1935 997l-2 8M1963 1010l0-3-14-4 9-5M1935 1006l13-1M2004 994l-5 12M1962 1024l2 1M1988 1005l-11 2M1965 1012l6 1M1975 937l7-1-1-11M1975 937l3 10 2 1 8-5M1971 935l-6 5-1 0-3-2-8 5M1968 957l-3-4M1978 965l-11-5M1976 973l2-7 12 0M2011 993l4 11-5 3 3 11M2008 1019l-4-10M2024 1016l-1 0M2008 1019l-5 6-6-4-3 3-10-2-5 4 4 7M2024 984l-2 6M1971 1037l-6 2M1971 1037l6 1M1972 1024l-1 13M1852 967l9 3M1830 975l-3-10 7-7 2 0 4 9M1837 945l9 9 3 0 3-8M1832 946l1 10M1850 956l-1-2M1850 928l0 1M1857 935l5-10M1838 927l-1 2M1857 936l0-1M1900 989l2-2M1890 974l4 3M1903 976l9 0M1935 965l-1-2-9-3M1934 963l3-8-1-1M1915 954l1 1M1912 947l5-3M1901 966l-7-1-1 1M1919 897l-12-3M1905 896l3 9M1917 902l1 1M1926 942l-7-1-4-8-5 0M1822 867l3 7-12 2-2-5-10 6-3-2M1822 867l-8 0 3-12M1827 876l-2-2M1841 910l-1 6 6 3M1856 916l-2-1M1847 906l-1 1M1763 887l7 1M1763 887l0-1-9-2M1837 897l-3 1M1838 917l-9 1 1-12M1737 764l-2 2-3 1M1737 800l5-7M1740 814l2-7M1861 743l1 3M1886 737l-5-3M1768 723l10-7M1771 726l-3-3M1749 667l-7 1M1735 685l1-8 4-3M1717 643l-3 4M1734 663l1-8M1915 765l-6 0-3 8M1911 776l8-5 4 6M1889 816l1 0 0-9M1898 877l9 1M1938 811l-6 6M1938 811l0-6-11 2M1939 805l2-1M1922 766l10 4M1922 766l-2 1M1954 924l4-5M1962 928l5-3M1960 936l2-8M1949 906l-13 1M1948 914l-10-1M1961 892l13 3-3-8 3-2-2-9-9 1M1953 897l1 10M1962 906l3-2M1961 891l0 1M1935 822l5 2 2-2 7 3M1935 822l-7 6 4 6M1921 845l7 3M1943 844l-2 4M1975 756l4 7-8 8 0 1-1 3M2022 774l-5 2M2022 774l-5-9M2006 757l5 1 3 6M2032 783l9 5M2038 777l2-1 4 6M2031 784l-7-11M2031 784l1-1M2050 773l5 5M2059 776l4 1 1 7-4 3M1787 783l4-2 0-1 8-10M1782 771l-4 4M1784 768l-2 3M1800 785l-9-4M1817 801l-2-5M1812 787l1 7M1823 626l-10 4-5-9M1822 639l-3 0M1805 636l6-3M1926 599l-2-4M1915 597l-1 7M1959 609l2 6M2048 668l-6 0M1949 604l-2-1M1940 598l3 1M1965 594l-1 5M1891 606l-4-6 1-4M1891 606l3 0 4 1 5-9M1882 593l6 2M1901 589l0 7M1901 589l5-5M1915 597l-4-2M1907 614l-2 2M1947 624l-2 3-4 2M1844 663l5 7 8-5-6-8M1858 617l-1 4M1844 663l4-7M1901 614l-10 2 4 10M1912 627l-7-9M1936 675l3-5 8 2M1939 669l7-10 0-1M1923 694l6 1M1942 686l-2 7M1952 694l-4-7M1938 714l5-8 4 1M1929 701l1 6M1941 726l-5-10M1912 716l-1 9M1912 715l0 1M1955 722l4 2M1954 736l-1 0M1962 736l-3-1M1957 746l-3-10M1822 675l-4-9-2 0M1839 653l-1-9 7-4M1832 635l-8-1M1831 644l-6 0M2247 699l2 10M2260 729l-6 8-6-4-1-6 7-1M2123 757l3-3M2097 742l7 1 2-1 2-5M2113 712l5 9M2017 936l1 1 8 4M2005 954l10 1M2052 964l4-8M2052 964l-9-2-5 2M1992 973l-2-6M2004 960l-9 2M2005 954l-1 4M1992 955l1 0M2033 963l-10 1M2041 976l-5 2-2 10M2034 963l-1 0M2181 897l-5 2-5-7M2171 906l5-5M2163 901l8 5M2157 875l-4 1-7-2M2161 883l-9 4M2141 823l3-7 6-6 3 3 0 8-4 5-5 0M2129 829l-3-4M2129 829l2 1M2138 812l6 4M2135 837l8-2M2153 831l-3 10-2 2M2153 831l-4-5M2158 848l5-6 7 2 2 9M2150 841l11-3M2170 844l6-6 0-3M2150 905l-1 1-6-4M2161 912l-10 3M2133 926l6-11M2131 912l-6 9-5-8M2227 776l-1 5M2216 806l2-12M2230 789l-10 5M2227 776l-6-5M2205 836l14-3M2205 836l0 5 2 3M2215 844l5-9M2165 816l4-3M2177 819l0 2M2181 825l5-1M2243 760l-1 0M2244 761l-1-1M2097 665l-2-7 7-5M2107 653l3 6 11-1-6-12M2098 665l4 7M2154 676l-1-1M2148 680l3-4-10-5M2076 656l6-9 4-1 3 3 7-6M2043 741l-5-5-7 7M2057 715l8 1M2057 715l-2 5-8-10 4-5-7-5 2-7 10 5-3 6M2055 721l5 5M1983 703l8 0M1993 699l-4-5M1954 701l7 9-6 4-4-2-4 5M1947 724l4 1M1955 722l0-8M1975 703l-5-8-4 0M2025 677l5-6M2020 693l-8-9-2 0M2084 636l2 10M2075 643l7 4M2055 636l0 4M2046 633l-1 12M1986 1016l1-1M1959 952l-4 2M1936 945l10-3M2025 998l6 2 2 3 11-1 2 3M2025 994l0 4M2044 1000l-8-8M2054 995l-6-3M2035 990l1 0M2041 976l4 2M1909 913l-1-6M1916 915l4-1M1916 915l-7-2M1929 907l-4 7M1916 922l2 2 0 7M1923 915l0 7M1909 933l-7 0M1909 925l-2-2-1-6M1907 945l2-12M1929 930l0-1 1 0 8 7-4 7M1926 942l1-1M1821 957l-5 0M1822 956l-1 1M1812 944l1 0 2-8M1746 776l-4-1M1736 787l3 1M1798 718l6-6M1803 702l-2 4M1922 766l2-7 6-3-1-11M1890 816l3 1M1921 845l-5-10M1909 842l4 2 7 2M1919 874l-11 2M1974 895l6-1M1995 893l-4 0-5 4M1974 885l7 0M1919 874l1-7M1936 863l-1-5-4-2M1940 867l7 1 5-2M1937 875l1 0 2-8M2023 926l6-13 1 0M1981 764l-2 0M1982 782l3-6M1992 772l-2 0M1997 784l-6 4M2007 779l-3 8M2029 787l2-3M2067 792l1-5 4-6M1965 615l9-8-2-4M1962 615l0 1M1950 633l7 1M1905 677l-8-2 7-11M1916 679l-9-3M1916 665l-5-2 1-9-10-2 1 12-9 0-4-9M1893 675l-8-1-6-3 2-4M1874 595l-1 10 5 1M1913 653l6-4M1932 648l-4-8M1919 647l-5-6M1955 696l8-2M1952 686l10-1 0-7 12 0 0-1 8-4 6 2M1967 641l-9 3 3 9-10 2M1947 641l-8-7-4 3M1948 645l0 1M1953 643l-5 2M1961 653l8 1 0-2 7-4-2-13-2 0M1966 664l3-9 9 3M1950 675l8-1 1 0M1945 685l5-10M1952 686l6-12M1895 705l5-8M1901 687l-2 5 1 4M1912 726l14-3M1917 742l-9 1-3-3 0-2 8-6M1898 720l1 7-8 1-6-6M1898 720l-12-3-8-4M1900 729l-1-2M1890 706l5-1M1890 737l1-9M1949 749l-4-8M1821 649l-2 6M1821 649l-8-5M2259 716l4 4 0 3M2125 738l-4-4-4 0M2135 732l-10 6M2113 733l-2-7M2073 794l2 6M2006 843l-7 5M2006 856l3-2 0-9M2049 976l10 10M2061 968l-1 8M2010 985l-12-2 0-8M2012 965l0 8M2152 864l-3 0-2 1M2152 893l-1-4M2159 823l6-1 0-6M2126 925l-5 11 11 2M2121 936l-2 0 2 7M2101 954l6 0-4 10M2100 646l5-3-1-7M2163 664l-8-1M2157 654l-3 1M2147 643l4 12M2097 684l1-7 2-2M2110 683l-3 0M2092 687l5-3M2098 677l-10-2-4 10M2083 661l-2 8 2 2M2074 669l7 0M2074 669l-2 4 6 5M2065 683l14 1M2065 684l6 9 5 4 4-4M2092 697l-3 1M2070 731l4-7-1-2-9 1M2080 736l1-9 4-4M2097 708l-4 1-7-3M2008 736l7 2 4-6 0-6M2046 723l-5-9M2024 717l-10-4-2 2M2029 714l4 3M2032 732l-5 3-8-3M2005 702l8 1 1 10M1975 713l-3-4M1966 721l-5-11M1987 727l-4-11M1980 730l-4-4M2023 693l9-1 5-7 5 0M2006 693l-5 3M2001 717l-5 3-6-6M2004 714l-3 3M2008 727l-1 0M1987 727l8-4M2060 647l8-4M2075 643l-4 2M2060 630l1-3M2048 619l-1 3 0 11M2047 622l-9 1M2037 642l0-7M1962 966l-4-2M1962 966l-1 4-4 6M1827 926l3 9M1822 947l8-2M1802 957l1-11-8-1M1779 893l-8 5M1925 815l-2 1M1917 803l2 11M1943 793l-12 2M1935 784l1 0M1928 793l1 0M1934 777l1 7M1970 789l6-4M1985 860l-5-5-7 0-1 8-3 3-6 0-2 3M1998 891l1-5M1998 891l8 7M1994 945l7-12M1939 887l3-5 10 3M1932 887l7 0M1961 891l-9-4M1956 798l1 3M1839 609l8-2 0-3M1838 615l7 5 5-7M1825 611l-3 13M1825 611l4 1M1823 609l2 2M1823 626l0-1M1832 635l2-2M1993 630l-10 6M1996 639l-3 2-8 0M1882 684l-5 7-6 0M1869 682l2-2-5-9M1859 683l6-1M1861 671l3 1M1882 627l3-3 7 2-4 6M1870 634l-4 1-5-2M1870 634l3-12M1871 607l2 13M1867 646l-8 3M1847 655l0-11M1889 704l-9 0-3-3-8 2M1890 692l-3 4M1918 735l8-10M1944 738l-7 0M1931 730l-1 1M1945 739l-1-1M2095 739l-5-3 3-8M2042 794l5 3-1 6M2061 792l-9 4M2030 813l-4-7 7-5 3 6M2024 805l2 1M2061 888l-11-2 3 11M2021 839l1 7 9 1M2006 843l-2-5M2012 833l4 5M2080 975l-1 1 9 7M2087 972l8 6M2088 969l6-6M2082 989l-4-9M2078 977l1-1M2069 975l9 2M2030 936l12 10-3 3M2026 945l4 3M2018 925l-1 11M2034 962l3-12M2038 931l8 5 2-2M2052 953l-4-6M2041 913l4 1 5-1 3-7M2133 867l0-3-8-2-5 3M2135 837l-1 5M2134 903l2 9M2100 867l7-4M2096 862l1-9 4-1M2106 844l3 0 3 8M2079 877l11-3M2092 875l0 8-2 11M2108 967l3-5M2115 876l-10 0M2100 870l-8 5M2125 908l0-5M2129 889l-1 3M2129 889l-14-7M2111 918l2-5M2083 635l7-10M2144 643l-5 7M2125 644l-1 0M2124 664l-2-6M2190 654l13 9M2187 666l3-2M2186 679l3-4M2082 708l1 8-9 1-4-8M2075 704l-5 3 0 1M2063 698l7 9M2018 746l10-4M2022 754l-2-1M2034 753l-6-2M1988 666l-1-2M2037 704l-2-1M2037 704l6-4M2041 713l-4-9M2019 676l-2-4M2000 666l-1 7M2006 662l4 3M2006 662l2-4M1995 652l2-3 8-3-2-7-1-1M2031 666l-6-5-2 0M2033 620l-4 7-10-1M2026 646l4 2M1748 890l-7 5M1748 908l2-5-10-6M1826 919l-5-5M1813 876l-1 7M1805 885l1 0M1771 931l5-1 2 3M1904 822l1-6-6-2M1921 826l-7-1M1902 826l2-4M1956 785l-7 2M1963 794l-4 0M1961 782l-4 1M1951 766l3-2 0-5M1973 845l11-1M1970 838l11-2 1-4 0-5M1994 837l-2 5-4 2M1985 860l6-4M2023 828l3-4M2023 828l-11-1 0 6M2033 823l1 8 7 4M2019 806l-3-3M2014 795l3 2M2014 795l-11 4-1-5M1961 858l-4-2M1973 855l-2-1M1953 841l6 5M1970 838l-2-2M2007 897l9 0 2-4M2017 906l-9-1M1952 824l2-9M1957 827l7-4M1981 615l-8 5M1993 630l2-4M1983 625l3-4M1981 615l4 2M1895 641l7 7M1886 642l8-2 1-2M1886 642l-6-5-5 10M2101 733l-4-6M2105 721l-5 3M2059 818l-9-8 8-3 2 11M2060 806l-2 1M2065 793l0 12M2087 863l-3 1-1 0-7 11 3 2M2081 883l0 1M2072 886l-3-4M2011 888l5-1M2009 875l7 3M2125 877l6-4M2104 842l2 2M2109 844l4-2 10 4M2122 826l-5 8-2 0M2124 836l2 8M2125 955l-15-2M2101 954l-6-10M2109 953l-2-11M2082 935l2 4M2072 959l1 5M2087 955l-4 0M2088 969l-6-7M2098 933l-1-8M2111 918l-14 5M2110 891l-1 2M2099 884l1 9M2036 613l12 6M1980 665l-9 4M1988 666l2 9M2008 648l1 8M2017 669l5-7M2015 645l-7 3M2015 645l4 2M1813 904l-1-8M1817 887l0 4M1807 924l-1-7 4-2M1785 881l5 5M1761 909l8-5M1760 925l7-7-6-7M1770 918l1-2M1784 916l-2-2M1770 904l1 1M1802 934l-2-3 6-4M1982 832l12 4-1-8M1970 827l5-2M1989 804l0-10-9-1-2 7M1990 805l3 0M1989 866l7-2M1999 867l-1 5 9 4M2005 864l1-8M2009 875l1-7 6-3M2005 917l13-6 1 2 10 0M1970 811l0-7 3-3M1987 817l-1-2 4-10M1989 804l-7-1M2003 639l6-4-5-9M2009 635l5 0M1870 658l1 1 9-1M1864 659l-2 3-5 3M2097 853l-5-3-3-5M2050 886l-3-2-4 1M2030 890l6-6M2047 877l-4-5 1-8-7-1M2050 874l3-8 6-1 1 0 5 0M2047 884l0-2 0-5M2032 876l11-4M2050 874l8 1M2059 907l0 9M2125 856l-3-5M2125 856l8-4 5 2M2125 862l0-6M2143 876l-8 1M2111 910l-16 5M2070 906l12-10 1 0 1 10M2070 906l-1 2-10-1M2082 909l-12 0 0 1 4 6M2066 896l4 10M2084 916l-2-7M2011 825l-3 0M2010 813l-7 0-2-1-1-5 2-3M1997 818l4-6M2033 620l-1-4M1985 600l5 3 4-1M2092 842l8-2M2085 822l-1 1M2078 821l-5-9-3 0-3 5M2066 835l1 6M2069 827l0 3M2087 856l-7-4M2086 844l-5 3-7-3 0-1M2039 853l-4-8M2049 852l1-7-9-3M2043 896l-1 7M2030 890l0 6M2039 853l-2 5M2071 946l-1-2M2080 935l-5 1M2084 916l1 0M2059 955l1-13M2107 903l-9 1M1797 906l-9 0-3-7M1793 917l-6-2M1799 931l-4-15M2070 853l6 4M2074 844l-4 9M2068 869l-2-3M2056 833l4-8M2049 822l-1 2M2026 858l-8-4M2071 932l-1-7M2066 922l-7 3" transform="scale(.5)" fill="none" stroke="#c4c2bf" stroke-width="1.6"/>
<path d="M2061 579l-2-3-6 2 4 7 2 0 1-1 1-5 6-3 2 0 4 0 0-2-3-7 1-4 4 2 5-2-1-6-1-1-1-3-6 2-2 3-6-3 4-5 2 0 2 5M2051 577l0-5 7-2 1 1 0 5M1972 563l-1 4 2 4 8 2 2-3-1-7-1-1-7-1-2 2M1981 528l5 7-6 2-5-4 0-2 6-3 0-2 3-3 0-1-10-4M1975 531l-3-6 1-3 0-1M1971 535l4-2M2032 570l0-8 8 0 0-5 2-4-2-2 1-3-2-4-6-2-1 4 3 5-3 5-2 1-2-1-7 7 5 1 6 6-2 1-1 4 9 3-5 6 6 3 1 4M2015 584l0-6 2-2 8 8 2-2 0-4-2-2-4-8-2 2-8 1M2015 584l1 1 6 1 0 3-6 5 0 2-2 3M2015 594l1-9M2014 585l-6-2-5 5 0 3 4 1 1 4M2014 585l-4 5 5 4M1995 583l2 6 6 2M1995 583l5-2 3 7M2027 582l4 3M2027 578l2-3M2001 557l2 7 4 0M2010 555l0 7M2010 555l-3-1 0-1-3-4 2-5 3-1 4-4 4 2 2 5 0 1-2 1-3 6-4 1M2028 548l-1 6 1 2M2045 554l-3-1M2045 554l3 9-6 1-2-2M2060 584l8 0 2 1-2 6-1 1-4 0-4-7M2068 591l8 2M2078 550l-3-4-6 4M2075 545l4-4 6-1M2075 545l0 1M2078 550l1 0 6-7M2075 545l-5-5-3 1-3 5 3 4M2048 553l-3 1M2048 553l3 1 2 8-4 1-1 0M2051 572l-1-1-1-8M2058 570l0-8-5 0M2065 564l-6-3-1 1M2065 564l-2 7-4 0M2002 579l4-1 3-5-8-2-1 6 2 2-2 2M2008 583l-2-5M2000 569l1 2M2000 569l-4 0-2 7M2009 573l1-1M2003 564l-3 5M2033 542l-6-4-3 8 4 2M2010 532l0-3 1-3-8-5-2 2-1 3 10 3M2017 532l4-5-2-2-5-3 2-2 6-1-3 6M1987 534l7 2 2-1 4 1 1 5-4 4 3 3 4 1M1987 534l3-8 1 0 5 2 4-2 3 8M1991 526l2-8M2001 523l-7-5M2042 578l7 1 0 7-7-2 0-6-1-1 4-5-4-6-5 4-4 0M2011 547l-2-4M2007 554l4-7M2022 553l-3-6M2027 554l-5-1M2024 546l-5 0M2010 532l0 1-4 1M2010 533l3 6M2006 544l0-1M2015 564l5-1 1 5 9 3M2018 576l1-6M2040 577l1 0M2042 564l-1 2M2038 578l2-1M2050 571l-5 1M2051 577l-2 2M2030 528l-3 10-1 0-7 2 0-5 4-1 3 4M2033 542l3-5M2044 540l-6-4 2-3 1-7-7 0-3 2M2092 581l-9-5 1-4 1-1 3 0M2083 584l0-7 0-1M2083 584l6 2M2045 593l4-7 5 1 3-2M2045 593l3 3 4-1 2-2M2042 592l3 1M2042 592l-1 8M2058 594l5-2M2076 582l-5 3-1 0M2076 582l4 3 3-1M2083 577l-7 2 0 3M2078 591l0-1M2075 528l-1 5 2 1 6-1M2075 528l9 0M2079 541l-3-7M2070 540l1-5 3-2M2074 527l8-8M2079 550l7 2M1968 552l7 1 2-2-3-4-6 0M1973 541l1 1M1978 551l-1 0M1978 551l3-3-3-7 9 1 0 4 3 2M1971 535l2 6M2001 557l-5-1-2 5-2 3-4-3-1-4 5-4M1971 575l1-1 4 6-1 3M1971 575l1 10M1973 571l-1 3M1981 573l0 2M1995 583l-3-2 0-4-5-7 5-4 4 3M1986 535l1-1M1990 526l-6-3M1984 522l1-4M2026 520l0 7-3 0 0 7M2022 519l3-2M2071 535l-3-2-6 2 0 3 5 3M2017 532l2 3M2017 541l2-1M2030 528l-4-1M2026 520l7 0 1 0 0 6M2016 596l6 1 1 5M2034 599l0-3-3-3M2029 600l-5-7-2 4M2022 589l2 4M2051 518l2 1 5 0 2 1-4 8 3 3 5-3 1-2-4-5-1-1M2085 571l-1-7 3-3M2071 563l-1 0-1-5M2084 564l-4-1M2086 557l-7 0M2084 572l-7-1-2-6M2065 564l5-1M2060 556l-1 5M2066 573l1 3M2076 579l-3-3M2077 571l-4 3M2063 571l3 2M2074 527l-3-3-6 2M2072 517l9 1M2072 517l-1 3-5-1-5 2M2062 538l-5 3-2-4 5-6 2 4M1984 579l8-2M1994 540l2 5 1 0M1984 547l3-1M1986 535l1 6M1994 536l0 4M1984 584l7-1-1 7M1984 579l0 5M1992 581l-1 2M2003 521l0-2M2014 522l-6-7M2051 518l-3-1-5 2-1 7 2 0 2 9 1 2 4-2 1-6-2-2 3-8M2068 533l-4-5M2060 531l-1 0M2064 546l-3 1-3 6 2 3M2057 541l-1 1M2056 552l2 1M2040 533l6 2M2042 526l-1 0M2046 540l1-3M2055 537l-4-2M2056 528l-4 1M1981 562l2-5M2053 546l-4 2-3-2 1-5 7 3M2056 552l-3-6M2046 540l1 1M1986 556l1 1M2003 564l-9-3M1992 566l0-2M1883 648l-4-5-4 6-4 1-1 1 10 5 0 3-5 1-6-8M1883 648l-1 3-1 1M1883 648l5-3-5-7 1-1 2-1 5 1 3 3 4-4 1-2-4-3 0-7 2-1 5 4-1 5 7 2 3-4-2-3-3-2 1-5-6-2 0-4-2-2 0-7 4 0 4 5 0 1 3 7 2 0 4-1 3 4-2 5-5-2 0-6M1891 646l-3 7-6-2M1893 645l1 1 3 7-3 2-4 2-2-4M1894 646l11-1M1897 653l5 1M1907 647l-3 6M1939 625l-6-1-1 3 1 3 4 1 2-6 1 0 3 1 0 8 0 4-9 2-1-1 5-6-1-2M1891 637l2-6-5-1-2 6M1908 637l-4 3M1908 637l0-3M1928 720l2-4 0-3 5-6-2-3-5 1 0 6 2 2M1928 720l3 4 1 1M1890 657l-9 4-1-2M1875 660l-6 5M1908 637l5 3-5 7-1 0M1941 617l3 0 5 1 1 1-1 6 1 1 1 6 7 0M1952 613l-5-6-1 0 1-3 5-2M1917 631l0-5M1910 600l-5 2M1933 630l-4 6 2 3 2 0M1932 627l-7 2-1 3-2 1-5-1 0-1M1941 616l-9 1 0 4 1 3M1941 616l0 1M1925 629l-1-7 8-1M1883 638l-5 2-1 0-1-10 6 3 1-6 5 1 2-4-3-5-6 6 2 2M1879 643l-1-3M1869 647l6-7 2 0M1870 631l4-2 1 0 4-4-4-7-1 0-3 2 3 9M1872 638l3 2M1897 622l0 1M1882 720l-3-7-6 5-4-7 4-5-1-1-3-2M1882 720l-6 1-4-3-2 1M1882 720l2 1 1 2M1902 701l-2 8 4 2M1907 710l1-3 3-6-1-1 1-3 8 1 0 4 2 2 1 7 6 0M1915 726l0-2 6 0 2 3 8-3M1928 720l-4 0-3 4M1894 655l3 6-5 1-2-5M1897 661l2 1 1 1 4 3 0 3 3 5 1 0 4-3-5-7-3 2M1881 661l5 5 5 1 1-5M1893 670l-1-1-1-2M1895 673l-2-3M1895 673l0 1 0 2-5 3-1 4 6 2-1 4 6 2 2-7 3-2 0-5-10-3M1884 676l-1-2 9-5M1886 666l-3 5-3-6-7 6-3-3M1882 674l1-3M1939 707l2 4M1950 633l2 5-1 1-7 1-1-2M1950 633l1-1M1957 638l-5 0M1934 640l7 7 3-3 0-4M1937 603l-3 3 2 4 4 1 2-3-4-5 7-2M1936 600l1 3M1946 607l-4 1M1917 614l-1 3M1907 610l7-3 2 3 9-5 1 0 5-6M1910 600l4 6 0 1M1918 598l1 4-5 4M1919 621l4 1 1 0M1913 640l1 0 4 2 0 6 5-2 1-4 7-2 0-1M1923 613l4-6 7-1M1923 613l2 3 7 0-1-2M1923 622l2-6M1932 617l0-1M1899 612l-3 1-2 5M1898 698l-3 7-5 0-1 0-4 7 3 3-4 6M1898 698l-5-2M1915 724l-1-2-4-2-5 1-1 3-3 0-7-4 2-3 8 1M1921 717l-5 2-1-7 7-1M1891 724l3-4M1897 712l3-3-5-4M1897 712l-1 5M1910 720l2-9M1941 648l1 3M1940 656l-9-4 2-4-2-4-5 4M1955 652l-8 0 4-7M1955 652l2-6-4-1M1941 647l0 1M1947 653l0-1M1895 676l3 7-3 2M1936 668l1-8 2-2 5 3-3 7-5 0-1 0 1 4-7 7 1-10-4 0-3 6 5 4-1 3 8 6 1 2-1 1-8-1-1 1-7-3-1-3M1956 655l-2 4-4 2 1 6 0 1-7 2-3-2M1940 656l-1 2M1919 602l6 3M1931 652l-1 1 0 5 7 2M1895 624l-5 0M1888 617l-1 1 0 1M1888 630l0-2M1887 618l-7-3-5 3M1879 625l2 0M1910 691l1 1-9 7 8 1M1910 691l-9 2-1-2M1905 682l5 3 3-1 1-6 5-3 1 8 7-1M1898 698l2-1M1879 713l0-2M1873 706l5 2 4-6-1-4 7-3 3 2M1879 683l-6 1-2-1M1879 683l-3-9-2-1-1 1M1884 676l-2 7 5 1 1 5 6 0M1882 674l-6 0M1880 684l-1-1M1873 671l1 2M1873 689l6 5 0 3 2 1M1873 689l-4 3M1869 696l9 1-6 8M1881 689l-2 5M1873 684l0 5M1887 690l-6-1M1911 692l0 1M1919 688l-2 5 3 3 5-2 1-3M1928 705l-3-3 2-3-2-5M1935 680l3-5M1944 670l-1 6 10-2 0-1 2 3M1951 684l1 6M1948 695l-5-7 3-4 5 0M1922 633l-1 8M1908 647l5 1 0 6 5 1 0 3 4 2 1 0 4 1 3-3M1935 668l-5 0 0 1M1896 613l-4-2-2 1-3-2-2-5 5-2 4-1M1899 605l-4-2-3 8M1876 600l-7 4M1874 618l-3-7 0-3 8 0 2-3 2-1M1889 683l-2 1M1887 690l1-1M1893 711l-4 4M1882 702l7 3M1897 712l-4-1M1911 701l4 2M1927 699l7 0 1-1 3 1 3 4-2 4M1895 673l9-4M1905 677l2-3M1914 678l-6-4M1943 676l1 5 1 1 1 2M1953 673l-2-5M1935 680l1 1 8 0M1939 689l4-1M1939 689l4 7 5 1M1943 696l-5 3M1941 703l5 0M1954 659l7 4M1951 667l11-3M1926 669l-6-2-3 2 2 6 4 0M1887 610l-7 3M1876 600l5 5M1935 698l0-7M1936 681l-1 7M1926 652l-1 0-6-1M1925 652l-3 8M1913 654l-5 3 2 4 2 1 4 7M1907 664l3-3M1975 878l-5 0-2-7-1-1M1977 873l-5-3M1982 857l1-7-6 0-2 1 0 7 4 2 2 5M1982 857l6 3 1-3 0-5-4-3 0-1 6-7 3 2 1 1-5 8-1 0M1988 861l0-1M1988 861l3 4 7-6-9-2M1975 858l-3 3 0 1 2 3 7 1 1 4-5 3M1965 866l7-4M1965 866l-3-5 5-4 0-5 6-1 2 0M2008 878l-6-1 0-4 2-2 6-1 1-1-2-2-6-1 1 5M1982 870l3 2-1 8 3 1 8-3-1-1-6-6 3-4 6 1 4-5 0-4-1-1-3-5-7-1M1980 882l-4-3-1-1M1953 865l1 0 8 2 3-1M1957 860l4 0 0-10-4 1-4-6 2-2 4-3 5 6 0 4-3 0M1953 865l1 3 5 4 1 2 1 1 1 4 4 2 1 2-3 5-2 0-4-6 4-3M2000 858l-2 1M1957 860l-2-6-1 0M2011 874l6 2 1 4-8 3-2-5M2011 869l3-2 0-8 5-1M2010 883l-1 4 4 3 8-3M1994 877l3-8 5 4M1985 872l3-1M2002 877l-2 1 2 6-4 4 1 4 3 1 3 5 8-4 1 1 8 1M1996 879l-1-1M2001 863l2 3M2001 859l3-1 0-9-6 0-1 4M1954 868l-2 4M1960 874l-7 3M1998 849l-1-3 7-3 1 4-1 2M1996 879l-1 6-5 3-2 0M2002 884l5 3M2012 841l-8 1 0 1M1969 839l0 2 2 3 6 1 1-4M1977 850l0-5M1956 890l-2-5 1-3 3 0M1980 882l-1 5-7 0 0-1-5-3M1971 893l3 2 3-1 5 4 1 0 3 3 4-1 1-3 4-2 0-1-5-6M1979 887l1 2 7 1 0 4M2005 847l7 2-5 9 1 1 1 8M2014 859l-6 0M2013 848l3 2M2012 841l2 2M1958 899l2-3-2-5-2-1M1966 902l7-1 1 2M1966 902l-1-6 3-3 3 0M1970 878l-4 3M1968 893l-4-5M1958 891l4-3M1960 896l5 0M1950 844l3 1M1955 854l2-3M1969 841l-5 5M1967 852l-3-2M1958 901l-1 1M1958 901l6 3 2-2M1958 899l0 2M1982 898l-3 7M2005 898l-1 3M1739 689l-1 1-5 2-2-7-2-1 0-3 4-4 1-1 0-1-5-3 1-8-4-1-1 0-2 8 2 1M1740 698l3 0 1 1-1 6M1733 692l-2 3-4-3-1-4-5-1-5-3M1734 700l-3-2 0-3M1752 700l1-1 0-5-7-2-1-6 7-2 3 4 7-4 0-3 5-2 3-2 3 3 0 6 10 1 1-2-5-6-6 1M1752 700l-2 5M1719 662l6 1M1733 664l-3 0M1736 672l-3-8 9-2 1 2 9 1 0 6-3 2-5 0-2-2-6 1M1735 703l-1-3M1768 672l1 0 8-9 4 2 2-3M1766 672l-7 7 3 2M1767 685l-5-1M1769 662l-2 4-6-2-3 8 8 0M1768 672l-1-6M1757 678l2 1M1757 678l-1-5 2-1M1757 662l-4 2-1 1M1752 671l4 2M1795 668l-1-4 1-1M1795 668l3 3 4-1M1729 700l2-2M1729 700l-3 6M1722 699l-2 6M1722 699l-1-2 2-4-3-2M1718 697l3 0M1733 677l8 8 1-6-8-3M1744 673l-1 4-1 2M1749 673l2 8-8-4M1731 685l10 0 4 1M1792 663l-2 1-6 5-3-2-5 4 5 5 4-5-1-2M1798 671l0 5 6 3-4 6-2-1-3-5 3-3M1795 668l-6 5 1 5 0 1-10-1 1-2M1719 672l2 7-5 4M1723 671l-4 1M1726 680l-1 0-4-1M1725 680l-4 7M1744 694l2-2M1752 683l0 1M1769 672l7-1M1808 697l-3 2 0 5M1755 689l2 1 7 1 2 1-1 5 1 3 8 0-2-6-5-2-1 0M1757 690l4 7 4 0M1806 688l-3 0-3-3M1794 702l2-1 1-1 6-2M1797 700l-3-7-3 0-2 2 5 7M1795 693l6 2 2-7M1791 693l-1-7M1790 679l-2 6-4 0M1788 706l-4-7 4-4 1 0M1777 701l3-2 4 0M1777 701l-3-1M1759 706l7-6M1770 687l-3 5M1788 695l-6-7-3 5 1 6M1772 694l4-3 3 2M1770 687l3-1 3 5M1782 688l1-1M1780 678l-1 1M1762 771l3 2 4-4 5 3-1 3-7 3 1 5-10 3M1805 770l1-6 1 0 4 7-6-1-1 2M1766 837l5-3-1-3M1773 828l-2-5-3-1M1774 840l0-2-3-4M1778 830l-1 6-3 2M1778 830l-5-2M1806 764l-1-1-6 1-3 1-1 3-5 1-5-3-4 4-3 0M1809 763l-2 1M1788 797l-5 2 7 8 1 0 3-8-6-2M1811 792l2 5 1 4M1805 790l-1-5 7-3 3 7M1805 790l6 2M1804 792l-8 2-1 4 7 4 1 0 2-2 8-3M1805 790l-1 2M1813 804l-7 3-3-5M1774 840l2 4 0 4-1 0-6 2M1820 837l-1-2-3 0-5 4 1 3M1765 773l0 5M1769 785l-3 7 0 1-3 6 6 1 0 4-6 3M1768 812l-4 8M1788 808l-3 5-3 0-7-6 3-4 0-2-5-4-4 3M1772 812l3-5-6-3M1772 812l-4 0M1814 812l0 3 0 5 2 2 1 5-3 2 2 6M1794 799l1-1M1802 802l-5 6-3 1 2 6-2 1-2 5-5-1 0-1 0-3M1806 807l-2 3-7-2M1813 773l-3 3-3 0-2 3M1799 784l-7 0 0 1 0 5 4 3 0 1M1788 791l-6-6 0-1 10 1M1782 784l1-4 4-3 0-1 3-7M1791 778l1 6M1774 780l6-2-3-6-3 0M1779 816l0 4-1 1-5 0 0-6-1-3M1782 813l-3 3M1787 819l-8 1M1771 823l2-2M1782 828l-4-7M1782 828l3 0 1 2 1 6 1 2 1 2 3 5 5-2 2 0 2-1 2-5 3-1 0-6-1-1-9-2-1 1 1 1 6 7 1 1M1766 793l6 3 1-2 7-4 0-3-8-2 1 9M1783 799l-2-1 0-4-1-4M1788 808l2-1M1782 843l3 4M1782 843l2-5M1783 780l-3-2M1769 785l3 0 2-5M1782 785l-2 2M1798 779l2-2 1-4-5-4-3 8-2 1M1798 779l2 5 3 0 1 1M1793 838l4 5M1796 769l-1-1M1814 820l-4 2-2 7 6 0M1800 821l3-1 1 0 1-5-1-3-8 3 4 6-4 5-4-5M1804 810l0 2M1814 815l-9 0M1810 822l-6-2M1811 839l-5-3M1803 820l2 9M1796 826l0 1M1795 836l1-7M1795 836l7 0M1786 830l9-2M1793 838l2-2" transform="scale(.5)" fill="none" stroke="#bdbbb8" stroke-width="1.5"/>
<path d="M1669 739l1 21 6 14 52-4 12 4-14 51M1670 792l-25 19-13-6M1945 1083l2-1 35-55-43-9-15 11M2005 790l37 29 20-15-7-46-33 3-11-42M2046 1085l-38-31-34 35-27-7M2073 1066l4-37-73-2 4 27M1747 836l46-15 6-27 25 2 27 20M1747 836l7 31M1789 883l27-17 19 3 13-8 44 1 25-41-18-25-13-4M1878 1026l10-4M1878 1026l-2 46M1939 1018l10-48-32-17M2000 1022l2-38-25-19 6-38-43-17-20 10-18-19-52 25-3-3M1814 982l22 1M1782 1005l32-23M1904 960l-46-10M1878 1026l-18-6M1687 724l-18 15M1687 724l-3-63-10-1M2276 827l-13 43-18 15 3 14M1716 828l-46-36M1788 932l-8-16M1748 974l-5-1M2030 965l-14 14-14 5M2064 863l-25 21-4 26 37 27-1 10-41 18M2064 863l34 13-5 33M2042 820l-53 45 50 19M2042 820l22 43M2014 918l21-8M1989 865l-4 0-9-4-22 17-14 32M2124 926l20-7 29 22 0 18-26 17-15-4M2121 863l-23 13M2055 758l16-22-49-22 20-46-48-19M2004 615l-10 33-65-30-1-7-49-11 9-50 17 1 29 31-3 23 57-7 16 17M1934 582l18-19 38 4-2 31M2224 655l-5-30M2187 605l-33 46 52 24M2077 1029l1-2M2016 979l62 37 14-40M1777 563l36-33 22 34-5 39-9 5-44-45M1905 662l13-10M1905 662l-28-9-28-46M2147 976l4 38M2326 750l-35 22M2315 714l11 36M2315 714l-16-7-34 25-17-22M2271 663l-47-8M2276 663l3 2M2173 941l13-25M2146 876l26 2 10 5 39-14-3-53-24-7 1-55 58 29 7-11M2148 760l12 46-34 21-5 36M2148 760l-47 20-6 19M2172 878l12-67M2084 732l17 48M2121 731l29-31 41 18M2121 731l29 24 36-23M2148 760l2-5M2218 816l30-16M2042 668l33-11-7-34-29-24-3-32-19-21M2092 667l29-6M2154 651l-22 2 3-56M1976 861l-21-39 43-32 7 0M1908 721l13 37 26 4M1976 718l-6 32 28 40M1893 713l15 8M1937 667l13 45M1870 720l23-7M1899 796l22-38M1980 716l-4 2M1756 611l-18-14-3-35 2-2M1814 617l7-9M1684 661l8-2 47 17 9-5 8-60M1738 597l-30 23M1870 720l-18-14-2-37 27-16M1850 669l-38-27-17 28-47 1M1835 564l39-22M1954 520l-2 43M1742 915l-29 28-34-34M1701 726l40-14 25 31 35-55 22 14-18 51-22 12-14-7-29 16M1686 869l1 4M1716 828l-30 41M1645 811l1 35M1852 706l-29-4" transform="scale(.5)" fill="none" stroke="#f4c37d" stroke-width="3.4" stroke-linecap="round"/>
<path d="M2245 797l-67-95M1915 636l13-98M1946 666l-31-30M1875 715l63-3M1875 715l-51-95M1774 650l-76-15M1774 650l42-36M1696 751l5 3 7 32M1955 735l-63 77M2006 763l0 34 34 46 2 65M1824 761l3 28 45 30M1827 789l-48 43M2245 797l-27 46M1946 666l65-52M2050 737l-7-117M2177 702l-54 43-73-8M1943 1003l72 0M1932 999l11 4M1932 999l-9-77M2123 745l7 74M2102 990l0-67" transform="scale(.5)" fill="none" stroke="#f6967a" stroke-width="3.8" stroke-linecap="round"/>
<g fill="none" stroke="#c4c2c0" stroke-width="0.8" stroke-linejoin="round">
<path d="M444.3,158.0C445.4,161.6 448.9,172.6 450.7,179.3C452.5,186.1 452.8,192.5 454.9,198.5C457.0,204.5 462.3,210.5 463.4,215.5C464.5,220.5 460.2,223.3 461.3,228.3C462.4,233.3 467.7,239.6 469.8,245.3C471.9,251.0 473.4,259.5 474.1,262.4 M457.1,158.0C459.9,160.1 468.4,168.0 474.1,170.8C479.8,173.6 486.1,173.2 491.1,175.0C496.1,176.8 501.8,180.3 503.9,181.4 M461.3,200.6C464.5,200.9 474.8,200.2 480.5,202.7C486.2,205.2 491.1,211.2 495.4,215.5C499.6,219.8 503.9,223.3 506.0,228.3C508.1,233.3 508.2,240.3 508.2,245.3C508.2,250.3 506.4,256.0 506.0,258.1 M442.1,224.0C445.3,223.3 456.3,219.1 461.3,219.8C466.3,220.5 466.7,226.9 472.0,228.3C477.3,229.7 489.8,228.3 493.3,228.3 M325.0,162.2C327.1,161.8 333.2,159.0 337.8,160.1C342.4,161.2 347.0,168.2 352.7,168.6C358.4,168.9 365.9,164.3 371.9,162.2C377.9,160.1 384.3,158.4 388.9,155.9C393.5,153.4 397.7,148.7 399.5,147.3 M386.8,177.2C388.6,177.5 394.6,177.2 397.4,179.3C400.2,181.4 402.7,188.1 403.8,189.9 M578.5,247.4C578.9,249.9 581.0,257.8 580.6,262.4C580.2,267.0 577.0,273.0 576.3,275.1 M599.8,245.3C601.2,247.4 607.2,253.8 608.3,258.1C609.4,262.4 605.9,266.8 606.2,270.9C606.6,275.0 609.7,281.0 610.4,283.0 M533.7,130.3C534.4,128.2 534.1,121.0 538.0,117.5C541.9,114.0 554.0,110.4 557.2,109.0 M580.6,151.6C583.8,152.3 594.1,156.2 599.8,155.9C605.5,155.6 610.8,153.1 614.7,149.5C618.6,145.9 621.8,137.1 623.2,134.6 M1101.1,109.0C1100.8,111.8 1100.4,120.3 1099.0,126.0C1097.6,131.7 1094.0,137.4 1092.6,143.1C1091.2,148.8 1091.9,155.1 1090.5,160.1C1089.1,165.1 1085.2,167.2 1084.1,172.9C1083.0,178.6 1082.7,188.9 1084.1,194.2C1085.5,199.5 1091.9,200.5 1092.6,204.8C1093.3,209.1 1090.5,215.2 1088.4,219.8C1086.3,224.4 1081.9,228.2 1079.8,232.5C1077.7,236.8 1076.3,243.2 1075.6,245.3 M962.7,145.2C965.2,146.3 971.6,150.9 977.6,151.6C983.6,152.3 991.8,150.6 998.9,149.5C1006.0,148.4 1016.7,145.9 1020.2,145.2 M1240.0,149.5C1237.1,149.8 1227.9,149.8 1222.5,151.6C1217.1,153.4 1211.5,156.5 1207.6,160.1C1203.7,163.7 1202.6,169.3 1199.1,172.9C1195.5,176.5 1188.4,180.0 1186.3,181.4 M1160.8,185.7C1160.4,188.5 1157.2,197.7 1158.6,202.7C1160.0,207.7 1165.8,211.2 1169.3,215.5C1172.8,219.8 1178.1,226.2 1179.9,228.3 M1282.6,143.1C1282.2,145.6 1283.0,153.8 1280.5,158.0C1278.0,162.2 1272.3,165.0 1267.7,168.6C1263.1,172.2 1255.3,177.5 1252.8,179.3 M1474.3,189.9C1476.1,192.0 1481.4,196.3 1484.9,202.7C1488.5,209.1 1492.8,221.2 1495.6,228.3C1498.4,235.4 1499.5,240.3 1502.0,245.3C1504.5,250.3 1509.8,252.4 1510.5,258.1C1511.2,263.8 1506.9,275.8 1506.2,279.4 M1278.3,215.5C1281.2,214.4 1291.1,208.4 1295.4,209.1C1299.7,209.8 1301.1,217.0 1303.9,219.8C1306.7,222.6 1308.9,223.6 1312.4,226.1C1316.0,228.6 1319.5,232.9 1325.2,234.7C1330.9,236.5 1343.0,236.5 1346.5,236.8 M1389.1,224.0C1389.8,226.1 1391.3,235.0 1393.4,236.8C1395.5,238.6 1399.1,234.7 1401.9,234.7C1404.7,234.7 1407.6,232.9 1410.4,236.8C1413.2,240.7 1417.5,254.6 1418.9,258.1 M499.7,355.4C500.1,357.5 502.2,364.3 501.8,368.2C501.4,372.1 497.1,375.2 497.5,378.8C497.9,382.4 500.7,388.1 503.9,389.5C507.1,390.9 513.2,388.1 516.7,387.4C520.2,386.7 523.8,385.6 525.2,385.2 M325.0,372.5C327.1,373.6 334.2,376.0 337.8,378.8C341.4,381.6 344.5,385.6 346.3,389.5C348.1,393.4 346.6,398.8 348.4,402.3C350.2,405.9 356.2,407.2 356.9,410.8C357.6,414.4 353.4,421.5 352.7,423.6 M346.3,400.1C351.6,400.5 371.1,403.4 378.2,402.3C385.3,401.2 386.8,397.7 388.9,393.8C391.0,389.9 389.2,381.8 391.0,378.8C392.8,375.8 395.6,373.2 399.5,375.7C403.4,378.2 410.9,388.7 414.5,393.8C418.1,398.9 419.8,404.4 420.8,406.5 M444.3,314.9C442.5,315.3 435.2,314.2 433.6,317.1C432.0,320.0 434.5,329.5 434.7,332.0 M463.4,368.2C462.0,371.8 453.1,385.6 454.9,389.5C456.7,393.4 468.1,393.0 474.1,391.6C480.1,390.2 486.8,382.4 491.1,381.0C495.4,379.6 498.3,382.8 499.7,383.1 M474.1,391.6C476.2,394.1 485.5,401.9 486.9,406.5C488.3,411.1 482.2,415.0 482.6,419.3C483.0,423.6 487.9,430.0 489.0,432.1 M559.3,368.2C558.6,370.3 557.5,376.0 555.0,381.0C552.5,386.0 547.2,393.0 544.4,398.0C541.6,403.0 539.1,408.7 538.0,410.8 M376.1,310.7 L367.6,321.3 M435.8,295.8C437.2,297.2 440.8,302.9 444.3,304.3C447.9,305.7 452.1,303.2 457.1,304.3C462.1,305.4 471.3,309.6 474.1,310.7 M580.6,325.6C582.0,327.4 588.0,331.9 589.1,336.2C590.2,340.5 589.1,348.0 587.0,351.2C584.9,354.4 578.1,354.7 576.3,355.4 M418.7,440.6C420.8,441.3 427.2,444.9 431.5,444.9C435.8,444.9 440.0,439.9 444.3,440.6C448.6,441.3 452.9,446.4 457.1,449.1C461.4,451.8 467.7,455.7 469.8,457.0 M1514.8,283.0C1514.1,287.3 1513.3,301.5 1510.5,308.6C1507.7,315.7 1497.7,320.3 1497.7,325.6C1497.7,330.9 1507.3,337.3 1510.5,340.5C1513.7,343.7 1515.8,344.1 1516.9,344.8 M1444.5,321.3C1444.8,324.9 1447.3,335.5 1446.6,342.6C1445.9,349.7 1441.3,360.3 1440.2,363.9 M489.0,461.3C489.4,464.1 491.1,472.6 491.1,478.3C491.1,484.0 491.1,490.3 489.0,495.3C486.9,500.3 481.2,503.5 478.4,508.1C475.6,512.7 473.8,518.0 472.0,523.0C470.2,528.0 469.1,535.0 467.7,537.9C466.3,540.8 464.5,541.2 463.4,540.1C462.3,539.0 462.7,532.9 461.3,531.5C459.9,530.1 457.7,530.1 454.9,531.5C452.1,532.9 446.8,536.2 444.3,540.1C441.8,544.0 442.1,549.7 440.0,555.0C437.9,560.3 433.3,567.4 431.5,572.0C429.7,576.6 428.7,578.8 429.4,582.7C430.1,586.6 432.6,591.5 435.8,595.4C439.0,599.3 444.2,605.0 448.5,606.1C452.8,607.2 458.4,605.3 461.3,601.8C464.2,598.2 463.5,589.8 465.6,584.8C467.7,579.8 470.6,575.5 474.1,572.0C477.7,568.5 483.3,566.3 486.9,563.5C490.4,560.7 493.3,558.5 495.4,555.0C497.5,551.5 499.3,546.8 499.7,542.2C500.1,537.6 496.4,532.6 497.5,527.3C498.6,522.0 504.6,516.2 506.0,510.2C507.4,504.2 506.7,496.4 506.0,491.1C505.3,485.8 503.9,482.6 501.8,478.3C499.7,474.0 494.7,467.6 493.3,465.5 M454.9,531.5C455.3,534.4 455.3,543.6 457.1,548.6C458.9,553.6 462.8,557.5 465.6,561.4C468.4,565.3 472.7,570.2 474.1,572.0 M463.4,604.0C463.8,605.8 463.8,610.7 465.6,614.6C467.4,618.5 472.7,625.3 474.1,627.4 M495.4,561.4C497.2,562.8 503.2,566.0 506.0,569.9C508.8,573.8 510.6,579.5 512.4,584.8C514.2,590.1 516.7,596.1 516.7,601.8C516.7,607.5 514.2,615.7 512.4,618.9C510.6,622.1 507.1,620.6 506.0,621.0 M350.6,510.2C351.7,513.0 354.8,522.0 356.9,527.3C359.0,532.6 359.8,538.7 363.3,542.2C366.9,545.8 375.0,544.7 378.2,548.6C381.4,552.5 381.1,561.4 382.5,565.6C383.9,569.9 384.3,573.7 386.8,574.1C389.3,574.5 394.8,573.1 397.4,567.8C400.0,562.5 402.7,549.0 402.7,542.2C402.7,535.5 400.4,530.8 397.4,527.3C394.4,523.8 389.6,523.0 384.6,520.9C379.6,518.8 370.4,515.6 367.6,514.5 M402.7,542.2C405.0,543.3 412.2,546.5 416.6,548.6C421.1,550.7 425.5,553.9 429.4,555.0C433.3,556.1 438.2,555.0 440.0,555.0 M363.3,542.2C362.2,545.8 355.8,559.2 356.9,563.5C358.0,567.8 367.9,564.6 369.7,567.8C371.5,571.0 366.5,579.5 367.6,582.7C368.7,585.9 372.9,588.0 376.1,586.9C379.3,585.8 385.0,578.1 386.8,576.3 M363.3,589.1C364.0,591.9 365.1,600.4 367.6,606.1C370.1,611.8 375.7,619.4 378.2,623.1C380.7,626.8 381.8,627.6 382.5,628.5 M506.0,508.1C508.9,508.5 519.2,508.4 523.1,510.2C527.0,512.0 525.6,516.3 529.5,518.8C533.4,521.3 541.5,525.6 546.5,525.2C551.5,524.8 555.8,516.6 559.3,516.6C562.8,516.6 567.1,521.3 567.8,525.2C568.5,529.1 562.9,535.5 563.6,540.1C564.3,544.7 568.6,549.2 572.1,552.8C575.6,556.3 580.6,561.4 584.9,561.4C589.1,561.4 593.4,556.7 597.6,552.8C601.9,548.9 607.2,542.5 610.4,537.9C613.6,533.3 618.9,527.0 616.8,525.2C614.7,523.4 601.5,529.8 597.6,527.3C593.7,524.8 597.0,514.8 593.4,510.2C589.8,505.6 580.2,498.5 576.3,499.6C572.4,500.7 571.0,513.8 569.9,516.6 M521.0,482.6C522.0,485.4 523.8,496.8 527.3,499.6C530.8,502.4 537.0,500.0 542.3,499.6C547.6,499.2 553.6,497.5 559.3,497.5C565.0,497.5 573.5,499.2 576.3,499.6 M578.5,559.2C577.1,562.1 573.1,571.3 569.9,576.3C566.7,581.3 562.1,583.1 559.3,589.1C556.5,595.1 552.5,607.5 552.9,612.5C553.2,617.5 560.0,617.8 561.4,618.9 M576.3,499.6C575.9,496.1 573.5,485.4 574.2,478.3C574.9,471.2 579.5,460.6 580.6,457.0 M442.1,508.1C441.1,510.2 435.4,515.9 435.8,520.9C436.2,525.9 442.9,535.1 444.3,537.9 M420.8,474.0C421.5,476.1 425.1,482.5 425.1,486.8C425.1,491.1 419.0,498.2 420.8,499.6C422.6,501.0 431.2,497.8 435.8,495.3C440.4,492.8 446.4,486.5 448.5,484.7 M325.0,476.2C327.1,477.3 332.8,482.2 337.8,482.6C342.8,483.0 349.8,476.9 354.8,478.3C359.8,479.7 363.3,489.3 367.6,491.1C371.9,492.9 375.8,490.0 380.4,488.9C385.0,487.8 392.8,485.4 395.3,484.7 M374.0,457.0C373.3,459.1 368.6,466.2 369.7,469.8C370.8,473.4 378.6,476.9 380.4,478.3 M493.3,465.5C497.2,466.9 512.1,471.1 516.7,474.0C521.3,476.9 520.3,481.2 521.0,482.6 M463.4,499.6C465.2,498.2 470.6,491.8 474.1,491.1C477.7,490.4 482.9,494.6 484.7,495.3"/>
</g>
<g fill="none" stroke="#a3a3a0" stroke-opacity="0.85" stroke-width="1.1" stroke-linejoin="round">
<path d="M1240.0,522.0C1238.2,522.5 1231.5,522.2 1228.9,525.2C1226.4,528.2 1228.2,536.2 1224.7,540.1C1221.2,544.0 1212.2,545.8 1207.6,548.6C1203.0,551.4 1200.5,554.3 1197.0,557.1C1193.5,559.9 1190.2,562.8 1186.3,565.6C1182.4,568.4 1175.7,572.7 1173.6,574.1 M1169.3,561.4C1167.2,561.0 1160.8,558.9 1156.5,559.2C1152.2,559.6 1148.7,562.1 1143.7,563.5C1138.7,564.9 1129.2,565.3 1126.7,567.8C1124.2,570.3 1130.2,575.9 1128.8,578.4C1127.4,580.9 1122.8,580.9 1118.2,582.7C1113.6,584.5 1105.4,587.0 1101.1,589.1C1096.8,591.2 1096.1,594.0 1092.6,595.4C1089.0,596.8 1082.6,595.1 1079.8,597.6C1077.0,600.1 1077.7,606.1 1075.6,610.4C1073.5,614.6 1069.6,620.1 1067.1,623.1C1064.6,626.1 1061.8,627.6 1060.7,628.5 M1240.0,523.0C1242.1,524.1 1248.5,527.1 1252.8,529.4C1257.1,531.7 1261.7,537.2 1265.6,536.9C1269.5,536.5 1272.3,530.0 1276.2,527.3C1280.1,524.6 1284.7,522.5 1289.0,520.9C1293.3,519.3 1297.9,519.1 1301.8,517.7C1305.7,516.3 1309.6,514.5 1312.4,512.4C1315.2,510.3 1316.7,505.3 1318.8,504.9C1320.9,504.5 1323.1,510.5 1325.2,510.2C1327.3,509.9 1329.5,503.1 1331.6,502.8C1333.7,502.5 1337.7,505.4 1338.0,508.1C1338.3,510.8 1333.0,516.7 1333.7,518.8C1334.4,520.9 1337.9,520.9 1342.2,520.9C1346.5,520.9 1355.0,520.6 1359.3,518.8C1363.6,517.0 1364.6,512.1 1367.8,510.2C1371.0,508.2 1374.9,507.5 1378.4,507.1C1382.0,506.8 1385.2,508.6 1389.1,508.1C1393.0,507.6 1397.3,505.7 1401.9,503.9C1406.5,502.1 1411.8,500.0 1416.8,497.5C1421.8,495.0 1427.1,490.7 1431.7,488.9C1436.3,487.1 1441.0,486.3 1444.5,486.8C1448.0,487.3 1449.8,491.8 1453.0,492.1C1456.2,492.5 1460.4,490.8 1463.6,488.9C1466.8,486.9 1470.4,483.6 1472.2,480.4C1474.0,477.2 1472.9,472.6 1474.3,469.8C1475.7,467.0 1478.2,465.5 1480.7,463.4C1483.2,461.3 1487.8,458.1 1489.2,457.0 M1316.7,531.5C1317.4,533.3 1318.8,538.7 1320.9,542.2C1323.0,545.8 1328.8,549.2 1329.5,552.8C1330.2,556.3 1327.7,560.3 1325.2,563.5C1322.7,566.7 1318.4,569.2 1314.5,572.0C1310.6,574.8 1305.0,578.0 1301.8,580.5C1298.6,583.0 1296.5,585.8 1295.4,586.9"/>
</g>
<g fill="none" stroke="#b48fc0" stroke-opacity="0.7" stroke-width="1.2" stroke-dasharray="4 2 1 2">
<path d="M1303.9,143.1C1305.0,144.5 1306.8,149.8 1310.3,151.6C1313.8,153.4 1322.0,151.9 1325.2,153.7C1328.4,155.5 1328.8,160.8 1329.5,162.2 M1359.3,196.3C1360.7,198.4 1365.0,204.5 1367.8,209.1C1370.6,213.7 1372.8,220.1 1376.3,224.0C1379.8,227.9 1384.8,230.7 1389.1,232.5C1393.4,234.3 1397.6,234.0 1401.9,234.7C1406.2,235.4 1411.9,232.9 1414.7,236.8C1417.5,240.7 1416.1,253.1 1418.9,258.1C1421.7,263.1 1427.8,263.4 1431.7,266.6C1435.6,269.8 1440.5,275.5 1442.3,277.3 M646.0,283.0C645.8,286.6 644.0,297.9 644.9,304.3C645.8,310.7 648.8,316.3 651.3,321.3C653.8,326.3 659.4,329.8 659.8,334.1C660.1,338.4 655.5,342.6 653.4,346.9C651.3,351.2 647.7,355.4 647.0,359.7C646.3,364.0 650.6,368.9 649.2,372.5C647.8,376.1 641.0,378.2 638.5,381.0C636.0,383.8 635.0,388.1 634.3,389.5 M1444.5,283.0C1445.6,284.8 1450.9,289.7 1450.9,293.6C1450.9,297.5 1445.6,302.1 1444.5,306.4C1443.4,310.7 1441.3,317.1 1444.5,319.2C1447.7,321.3 1459.0,317.8 1463.6,319.2C1468.2,320.6 1469.0,325.6 1472.2,327.7C1475.4,329.8 1478.9,332.7 1482.8,332.0C1486.7,331.3 1491.3,325.6 1495.6,323.5C1499.9,321.4 1503.8,321.3 1508.4,319.2C1513.0,317.1 1518.7,313.2 1523.3,310.7C1527.9,308.2 1533.0,303.6 1536.1,304.3C1539.2,305.0 1541.0,313.1 1542.0,314.9 M599.8,476.2C601.2,476.9 606.5,477.2 608.3,480.4C610.1,483.6 609.0,490.3 610.4,495.3C611.8,500.3 614.7,505.6 616.8,510.2C618.9,514.8 621.0,521.2 623.2,523.0C625.4,524.8 628.9,521.2 630.0,520.9 M630.0,604.0C628.1,604.7 622.9,607.9 618.9,608.2C614.9,608.6 610.5,605.4 606.2,606.1C602.0,606.8 598.4,611.1 593.4,612.5C588.4,613.9 580.2,615.3 576.3,614.6C572.4,613.9 571.7,607.9 569.9,608.2C568.1,608.6 567.8,613.3 565.7,616.7C563.6,620.1 558.6,626.5 557.2,628.5 M630.0,537.9C630.7,540.0 632.2,546.4 634.3,550.7C636.4,555.0 638.5,560.0 642.8,563.5C647.0,567.0 655.5,569.9 659.8,572.0C664.0,574.1 667.9,574.2 668.3,576.3C668.6,578.4 665.4,582.7 661.9,584.8C658.4,586.9 650.2,586.3 647.0,589.1C643.8,591.9 644.6,598.2 642.8,601.8C641.0,605.3 638.5,609.7 636.4,610.4C634.3,611.1 631.1,606.8 630.0,606.1"/>
</g>
<g fill="none" stroke="#8a8a8a" stroke-width="1.3" stroke-linejoin="round">
<path d="M416.6,109.0C415.5,111.1 412.7,116.1 410.2,121.8C407.7,127.5 403.5,136.0 401.7,143.1C399.9,150.2 400.2,158.0 399.5,164.4C398.8,170.8 397.6,174.7 397.4,181.4C397.2,188.1 396.7,199.1 398.5,204.8C400.3,210.5 404.7,212.3 408.1,215.5C411.5,218.7 414.8,221.3 418.7,224.0C422.6,226.7 427.2,230.1 431.5,231.5C435.8,232.9 440.8,230.9 444.3,232.5C447.9,234.1 450.7,238.2 452.8,241.1C454.9,243.9 457.1,246.4 457.1,249.6C457.1,252.8 452.1,256.3 452.8,260.2C453.5,264.1 459.2,269.2 461.3,273.0C463.4,276.8 464.9,281.3 465.6,283.0 M832.3,109.0C833.0,111.8 834.5,121.4 836.6,126.0C838.7,130.6 841.9,131.4 845.1,136.7C848.3,142.0 852.2,152.0 855.8,158.0C859.3,164.0 865.7,167.2 866.4,172.9C867.1,178.6 862.5,186.8 860.0,192.1C857.5,197.4 854.3,200.2 851.5,204.8C848.7,209.4 844.8,214.5 843.0,219.8C841.2,225.1 840.9,231.8 840.9,236.8C840.9,241.8 841.6,246.0 843.0,249.6C844.4,253.2 848.3,256.7 849.4,258.1 M1363.5,143.1C1363.2,145.6 1362.6,154.4 1361.4,158.0C1360.2,161.6 1357.0,163.3 1356.1,164.4 M1335.8,196.3C1334.8,198.4 1332.0,205.2 1329.5,209.1C1327.0,213.0 1324.1,217.1 1320.9,219.8C1317.7,222.5 1312.1,224.2 1310.3,225.1 M1248.5,283.0C1249.2,281.3 1250.3,275.7 1252.8,273.0C1255.3,270.3 1261.6,267.7 1263.4,266.6 M1389.1,109.0C1388.8,110.4 1388.4,115.4 1387.0,117.5C1385.6,119.6 1381.7,121.1 1380.6,121.8 M325.0,317.1C327.1,316.7 333.5,314.9 337.8,314.9C342.1,314.9 346.4,315.5 350.6,317.1C354.9,318.7 358.7,321.7 363.3,324.5C367.9,327.3 373.9,331.4 378.2,334.1C382.5,336.8 385.7,338.0 388.9,340.5C392.1,343.0 393.8,348.3 397.4,349.0C400.9,349.7 406.3,345.7 410.2,344.8C414.1,343.9 417.2,343.4 420.8,343.7C424.4,344.0 427.6,346.7 431.5,346.9C435.4,347.1 441.5,343.7 444.3,344.8C447.1,345.9 446.4,350.8 448.5,353.3C450.6,355.8 453.6,357.6 457.1,359.7C460.7,361.8 465.9,365.8 469.8,366.1C473.7,366.5 477.3,363.6 480.5,361.8C483.7,360.0 485.1,357.0 489.0,355.4C492.9,353.8 500.0,352.0 503.9,352.2C507.8,352.4 510.4,354.6 512.4,356.5C514.4,358.4 515.2,360.9 515.6,363.9C516.0,366.9 513.4,371.4 514.6,374.6C515.9,377.8 520.6,380.3 523.1,383.1C525.6,385.9 527.9,388.1 529.5,391.6C531.1,395.2 532.4,400.5 532.7,404.4C533.1,408.3 530.7,412.3 531.6,415.1C532.5,417.9 534.1,419.6 538.0,421.4C541.9,423.2 549.3,423.9 555.0,425.7C560.7,427.5 566.1,430.3 572.1,432.1C578.1,433.9 585.9,434.6 591.2,436.4C596.5,438.2 599.7,440.6 604.0,442.7C608.3,444.8 613.6,446.7 616.8,449.1C620.0,451.5 622.1,455.7 623.2,457.0 M465.6,283.0C467.0,284.1 472.3,286.2 474.1,289.4C475.9,292.6 473.7,299.7 476.2,302.2C478.7,304.7 486.0,302.5 489.0,304.3C492.0,306.1 494.3,309.2 494.3,312.8C494.3,316.4 490.2,321.7 489.0,325.6C487.8,329.5 488.0,332.6 486.9,336.2C485.8,339.8 482.6,343.7 482.6,346.9C482.6,350.1 486.2,354.0 486.9,355.4 M849.4,287.3C849.8,289.4 849.4,295.4 851.5,300.0C853.6,304.6 859.0,310.6 862.2,314.9C865.4,319.2 868.9,321.7 870.7,325.6C872.5,329.5 871.0,335.2 872.8,338.4C874.6,341.6 875.6,343.6 881.3,344.8C887.0,346.0 899.1,344.7 906.9,345.8C914.7,346.9 923.5,349.2 928.2,351.2C932.9,353.1 933.9,356.4 935.0,357.5 M774.8,340.5C777.6,341.4 785.5,344.7 791.9,345.8C798.3,346.9 806.8,346.4 813.2,346.9C819.6,347.4 824.9,348.3 830.2,349.0C835.5,349.7 842.6,350.8 845.1,351.2 M670.5,351.2C671.9,351.6 676.9,351.9 679.0,353.3C681.1,354.7 682.5,358.6 683.2,359.7 M706.7,357.5C709.2,356.8 716.6,354.7 721.6,353.3C726.6,351.9 733.5,350.6 736.5,349.0C739.5,347.4 739.2,344.6 739.7,343.7 M935.0,366.1C937.8,365.9 944.9,366.1 952.0,365.0C959.1,363.9 968.7,361.6 977.6,359.7C986.5,357.8 997.1,354.9 1005.3,353.3C1013.5,351.7 1020.6,349.4 1026.6,350.1C1032.6,350.8 1036.9,355.4 1041.5,357.5C1046.1,359.6 1049.3,362.4 1054.3,362.9C1059.3,363.4 1065.6,361.4 1071.3,360.7C1077.0,360.0 1082.7,357.7 1088.4,358.6C1094.1,359.5 1100.4,363.8 1105.4,366.1C1110.4,368.4 1114.7,372.1 1118.2,372.5C1121.8,372.9 1123.2,370.7 1126.7,368.2C1130.2,365.7 1134.5,361.1 1139.5,357.5C1144.5,353.9 1153.3,350.8 1156.5,346.9C1159.7,343.0 1158.6,338.4 1158.6,334.1C1158.6,329.8 1156.8,323.4 1156.5,321.3 M994.6,346.9C995.3,344.8 995.4,337.7 998.9,334.1C1002.4,330.6 1010.2,328.8 1015.9,325.6C1021.6,322.4 1026.6,317.0 1033.0,314.9C1039.4,312.8 1049.3,312.1 1054.3,312.8C1059.3,313.5 1057.1,317.6 1062.8,319.2C1068.5,320.8 1080.2,321.9 1088.4,322.4C1096.6,322.9 1107.9,322.4 1111.8,322.4 M1165.0,351.2C1169.3,352.1 1183.5,354.9 1190.6,356.5C1197.7,358.1 1202.3,359.5 1207.6,360.7C1212.9,361.9 1217.1,364.1 1222.5,363.9C1227.9,363.7 1237.1,360.4 1240.0,359.7 M949.9,374.6C951.7,377.8 957.0,387.8 960.6,393.8C964.2,399.8 966.6,406.2 971.2,410.8C975.8,415.4 983.6,418.2 988.2,421.4C992.8,424.6 995.0,425.0 998.9,430.0C1002.8,435.0 1009.6,447.8 1011.7,451.3 M1194.9,368.2C1194.5,371.8 1193.8,381.7 1192.7,389.5C1191.6,397.3 1191.0,407.3 1188.5,415.1C1186.0,422.9 1181.3,430.7 1177.8,436.4C1174.2,442.1 1170.4,445.7 1167.2,449.1C1164.0,452.5 1160.0,455.7 1158.6,457.0 M1039.4,283.0C1040.1,285.1 1044.0,291.2 1043.6,295.8C1043.2,300.4 1038.3,308.2 1037.2,310.7 M1378.4,283.0C1377.4,284.1 1374.6,286.6 1372.1,289.4C1369.6,292.2 1367.0,297.2 1363.5,300.0C1360.0,302.8 1355.0,304.3 1350.8,306.4C1346.5,308.5 1342.6,310.3 1338.0,312.8C1333.4,315.3 1328.4,318.8 1323.1,321.3C1317.8,323.8 1312.8,325.6 1306.0,327.7C1299.2,329.8 1290.0,331.6 1282.6,334.1C1275.1,336.6 1268.4,338.7 1261.3,342.6C1254.2,346.5 1243.5,355.0 1240.0,357.5 M630.0,463.4C632.1,464.8 640.3,468.0 642.8,471.9C645.3,475.8 642.8,482.2 644.9,486.8C647.0,491.4 652.0,495.0 655.6,499.6C659.2,504.2 663.0,509.9 666.2,514.5C669.4,519.1 671.5,523.4 674.7,527.3C677.9,531.2 680.4,536.1 685.4,537.9C690.4,539.7 700.2,537.2 704.5,537.9C708.8,538.6 710.2,539.7 710.9,542.2C711.6,544.7 707.4,549.6 708.8,552.8C710.2,556.0 715.6,559.1 719.5,561.4C723.4,563.7 728.0,566.7 732.2,566.7C736.5,566.7 741.1,563.0 745.0,561.4C748.9,559.8 752.2,556.8 755.7,557.1C759.2,557.5 763.1,560.7 766.3,563.5C769.5,566.3 772.3,570.6 774.8,574.1C777.3,577.6 778.7,581.6 781.2,584.8C783.7,588.0 786.5,590.5 789.7,593.3C792.9,596.1 797.9,598.2 800.4,601.8C802.9,605.3 804.0,610.1 804.7,614.6C805.4,619.1 804.7,626.2 804.7,628.5 M870.7,457.0C873.2,460.6 881.7,473.3 885.6,478.3C889.5,483.3 893.0,482.2 894.1,486.8C895.2,491.4 893.4,500.3 892.0,506.0C890.6,511.7 888.1,515.9 885.6,520.9C883.1,525.9 879.2,530.1 877.1,535.8C875.0,541.5 873.5,551.8 872.8,555.0 M1060.7,463.4C1062.1,464.5 1067.4,466.6 1069.2,469.8C1071.0,473.0 1069.5,479.1 1071.3,482.6C1073.1,486.2 1076.2,488.6 1079.8,491.1C1083.3,493.6 1088.3,495.0 1092.6,497.5C1096.9,500.0 1102.9,502.4 1105.4,506.0C1107.9,509.6 1105.7,514.2 1107.5,518.8C1109.3,523.4 1112.8,529.5 1116.0,533.7C1119.2,538.0 1121.4,541.8 1126.7,544.3C1132.0,546.8 1140.9,547.4 1148.0,548.6C1155.1,549.9 1163.5,550.6 1169.3,551.8C1175.1,553.0 1181.7,553.3 1183.1,556.0C1184.5,558.7 1180.8,563.7 1177.8,567.8C1174.8,571.9 1169.2,576.2 1165.0,580.5C1160.8,584.8 1156.5,589.0 1152.3,593.3C1148.0,597.6 1143.8,602.2 1139.5,606.1C1135.2,610.0 1131.0,613.5 1126.7,616.7C1122.4,619.9 1116.0,623.9 1113.9,625.3"/>
</g>
<g fill="none" stroke="#f4c37d" stroke-width="1.9" stroke-linejoin="round" stroke-linecap="round">
<path d="M423.4,109.0C423.5,111.1 423.0,116.8 424.0,121.8C425.0,126.8 428.1,134.9 429.4,138.8C430.6,142.7 432.2,142.3 431.5,145.2C430.8,148.0 425.9,151.3 425.1,155.9C424.3,160.5 426.3,168.7 426.8,172.9C427.3,177.2 428.8,177.1 428.3,181.4C427.8,185.7 425.2,192.8 424.0,198.5C422.8,204.2 422.4,211.8 420.8,215.5C419.2,219.2 417.0,219.0 414.5,220.8C412.0,222.6 407.9,224.5 405.9,226.1C403.9,227.7 403.2,229.7 402.7,230.4 M431.5,145.2C433.6,145.5 441.8,148.7 444.3,147.3C446.8,145.9 445.0,139.0 446.4,136.7C447.8,134.4 451.7,134.0 452.8,133.5 M459.2,131.4C460.3,133.0 462.4,138.2 465.6,140.9C468.8,143.6 473.4,145.2 478.4,147.3C483.4,149.4 490.4,152.8 495.4,153.7C500.4,154.6 505.0,153.4 508.2,152.7C511.4,152.0 511.1,148.4 514.6,149.5C518.1,150.6 524.9,157.3 529.5,159.1C534.1,160.9 538.8,158.9 542.3,160.1C545.8,161.3 547.6,164.2 550.8,166.5C554.0,168.8 557.1,171.9 561.4,174.0C565.6,176.1 572.6,177.0 576.3,179.3C580.0,181.6 581.7,184.2 583.8,187.8C585.9,191.4 587.5,197.2 589.1,200.6C590.7,204.0 590.2,206.8 593.4,208.0C596.6,209.2 603.3,208.5 608.3,208.0C613.3,207.5 619.6,205.7 623.2,204.8C626.8,203.9 628.9,203.0 630.0,202.7 M565.7,132.9C566.2,133.9 569.2,136.4 568.9,138.8C568.5,141.2 565.7,145.2 563.6,147.3C561.5,149.4 557.4,149.5 556.1,151.6C554.9,153.7 555.6,156.9 556.1,160.1C556.6,163.3 558.8,169.0 559.3,170.8 M379.3,242.1C377.4,242.6 369.9,243.7 367.6,245.3C365.3,246.9 367.6,249.9 365.5,251.7C363.4,253.5 358.2,254.6 354.8,256.0C351.4,257.4 347.5,257.7 345.2,260.2C342.9,262.7 342.1,267.1 341.0,270.9C339.9,274.7 339.2,281.0 338.8,283.0 M766.3,109.0C767.0,110.4 768.5,115.0 770.6,117.5C772.7,120.0 777.0,121.8 779.1,123.9C781.2,126.0 780.2,128.4 783.4,130.3C786.6,132.2 795.5,133.8 798.3,135.6C801.1,137.4 800.0,140.0 800.4,140.9 M779.1,123.9C779.8,122.8 782.2,120.0 783.4,117.5C784.6,115.0 786.0,110.4 786.5,109.0 M813.2,109.0C813.4,111.1 814.6,117.5 814.2,121.8C813.8,126.1 810.8,129.6 811.0,134.6C811.2,139.6 814.2,147.3 815.3,151.6C816.4,155.8 814.9,158.8 817.4,160.1C819.9,161.3 826.7,158.0 830.2,159.1C833.8,160.2 836.6,163.1 838.7,166.5C840.8,169.9 841.9,176.1 843.0,179.3C844.1,182.5 844.8,184.6 845.1,185.7 M806.8,153.7C805.4,155.5 800.8,160.8 798.3,164.4C795.8,168.0 793.0,173.2 791.9,175.0 M844.1,153.7 L840.9,166.5 M935.0,187.8C933.1,188.7 926.8,192.4 923.9,193.1C921.0,193.8 918.6,192.3 917.5,192.1 M749.3,202.7C752.1,202.0 761.3,199.6 766.3,198.5C771.3,197.4 777.0,196.7 779.1,196.3 M753.5,211.2C754.2,213.0 754.9,220.5 757.8,221.9C760.6,223.3 768.5,220.2 770.6,219.8 M764.2,226.1C763.1,227.9 759.2,232.9 757.8,236.8C756.4,240.7 756.1,247.5 755.7,249.6 M681.1,252.8C682.9,252.6 689.3,250.5 691.8,251.7C694.3,252.9 694.2,258.1 696.0,260.2C697.8,262.3 701.3,263.8 702.4,264.5 M736.5,258.1C737.2,256.7 738.0,251.0 740.8,249.6C743.6,248.2 751.4,249.6 753.5,249.6 M845.1,209.1C845.5,211.2 844.8,218.3 847.3,221.9C849.8,225.5 856.5,226.9 860.0,230.4C863.5,233.9 869.0,240.0 868.6,243.2C868.2,246.4 859.9,247.1 857.9,249.6C855.9,252.1 855.7,255.3 856.8,258.1C857.9,260.9 862.3,262.5 864.3,266.6C866.3,270.8 867.9,280.3 868.6,283.0 M630.0,219.8C631.1,221.2 633.2,225.5 636.4,228.3C639.6,231.1 645.7,234.3 649.2,236.8C652.8,239.3 656.3,242.1 657.7,243.2 M1135.2,256.0C1135.9,254.6 1136.0,249.9 1139.5,247.4C1143.0,244.9 1149.8,243.6 1156.5,241.1C1163.2,238.6 1172.5,236.1 1179.9,232.5C1187.4,228.9 1194.8,223.0 1201.2,219.8C1207.6,216.6 1214.0,215.9 1218.3,213.4C1222.6,210.9 1225.0,208.4 1226.8,204.8C1228.6,201.2 1226.7,196.0 1228.9,192.1C1231.1,188.2 1238.2,183.2 1240.0,181.4 M1232.1,143.1C1232.3,144.5 1232.3,148.8 1233.2,151.6C1234.1,154.4 1236.3,157.3 1237.4,160.1C1238.5,162.9 1239.6,167.2 1240.0,168.6 M935.0,186.7C936.8,186.9 941.7,188.2 945.6,187.8C949.5,187.5 956.3,185.1 958.4,184.6 M1165.0,249.6C1165.7,251.0 1169.3,255.3 1169.3,258.1C1169.3,260.9 1165.3,262.5 1165.0,266.6C1164.7,270.8 1166.8,280.3 1167.2,283.0 M1169.3,258.1 L1177.8,251.7 M1039.4,283.0C1039.4,280.3 1037.6,270.0 1039.4,266.6C1041.2,263.2 1047.5,263.3 1050.0,262.4C1052.5,261.5 1053.6,261.5 1054.3,261.3 M1378.4,153.7C1380.2,154.8 1385.2,158.7 1389.1,160.1C1393.0,161.5 1398.0,160.4 1401.9,162.2C1405.8,164.0 1410.7,169.4 1412.5,170.8 M1453.0,143.1C1451.6,145.6 1448.0,153.8 1444.5,158.0C1441.0,162.2 1436.0,165.4 1431.7,168.6C1427.4,171.8 1422.1,173.6 1418.9,177.2C1415.7,180.8 1413.9,186.3 1412.5,189.9C1411.1,193.5 1410.8,197.1 1410.4,198.5 M1429.6,145.2C1429.2,147.3 1428.5,154.8 1427.4,158.0C1426.3,161.2 1423.9,163.3 1423.2,164.4 M1440.2,143.1C1440.5,145.6 1439.8,153.8 1442.3,158.0C1444.8,162.2 1450.5,166.1 1455.1,168.6C1459.7,171.1 1467.3,170.4 1470.0,172.9C1472.7,175.4 1470.9,181.7 1471.1,183.5 M1365.7,195.3C1366.4,196.9 1368.8,201.1 1369.9,204.8C1371.0,208.5 1370.3,214.9 1372.1,217.6C1373.9,220.3 1377.0,221.2 1380.6,220.8C1384.1,220.5 1389.2,217.8 1393.4,215.5C1397.7,213.2 1404.0,208.4 1406.1,207.0 M1372.1,217.6C1371.0,220.1 1367.5,227.9 1365.7,232.5C1363.9,237.1 1361.9,242.5 1361.4,245.3C1360.9,248.2 1362.3,248.9 1362.5,249.6 M1367.8,262.4C1367.5,264.5 1366.8,271.7 1365.7,275.1C1364.6,278.5 1362.1,281.7 1361.4,283.0 M1240.0,172.9C1240.3,171.8 1242.1,168.3 1242.1,166.5C1242.1,164.7 1240.3,162.9 1240.0,162.2 M1240.0,117.5C1242.1,117.2 1248.9,116.8 1252.8,115.4C1256.7,114.0 1261.6,110.1 1263.4,109.0 M334.6,283.0C334.8,285.1 335.8,290.8 335.6,295.8C335.4,300.8 333.1,308.9 333.5,312.8C333.9,316.7 335.3,317.6 337.8,319.2C340.3,320.8 346.6,321.9 348.4,322.4 M591.2,371.4C594.4,370.1 603.9,365.8 610.4,363.9C616.9,361.9 626.7,360.4 630.0,359.7 M552.9,366.1C550.4,367.5 541.5,371.1 538.0,374.6C534.5,378.2 532.3,382.8 531.6,387.4C530.9,392.0 534.1,397.0 533.7,402.3C533.4,407.6 532.3,414.7 529.5,419.3C526.7,423.9 521.0,427.1 516.7,430.0C512.4,432.9 506.7,433.2 503.9,436.4C501.1,439.6 500.0,445.7 499.7,449.1C499.4,452.5 501.4,455.7 501.8,457.0 M512.4,457.0C513.8,455.7 516.7,450.6 521.0,449.1C525.3,447.6 531.6,447.7 538.0,448.1C544.4,448.5 552.2,449.8 559.3,451.3C566.4,452.8 577.0,456.1 580.6,457.0 M630.0,419.3C629.6,421.1 629.2,426.4 627.4,430.0C625.5,433.6 621.7,437.1 618.9,440.6C616.1,444.2 613.2,448.6 610.4,451.3C607.6,454.0 603.3,456.1 601.9,457.0 M721.6,283.0C722.0,285.1 721.2,292.6 723.7,295.8C726.2,299.0 733.0,299.4 736.5,302.2C740.0,305.0 743.2,309.2 745.0,312.8C746.8,316.4 745.0,321.0 747.1,323.5C749.2,326.0 756.0,327.0 757.8,327.7 M630.0,359.7C632.8,359.2 641.3,357.0 647.0,356.5C652.7,356.0 659.1,356.3 664.1,356.5C669.1,356.7 673.4,356.3 676.9,357.5C680.4,358.7 684.0,362.8 685.4,363.9 M728.0,346.9C728.4,348.3 731.9,353.3 730.1,355.4C728.3,357.5 721.6,359.3 717.3,359.7C713.0,360.1 706.6,357.9 704.5,357.5 M745.0,344.8C745.4,346.6 747.8,351.5 747.1,355.4C746.4,359.3 743.6,365.7 740.8,368.2C738.0,370.7 731.9,369.9 730.1,370.3 M817.4,329.9C817.0,331.3 813.9,335.6 815.3,338.4C816.7,341.2 824.2,345.5 826.0,346.9 M815.3,329.9C818.5,329.7 830.6,327.4 834.5,328.8C838.4,330.2 838.0,336.8 838.7,338.4 M817.4,363.9C816.7,365.3 814.6,370.0 813.2,372.5C811.8,375.0 808.5,377.0 808.9,378.8C809.2,380.6 813.2,384.2 815.3,383.1C817.4,382.1 818.9,375.7 821.7,372.5C824.5,369.3 828.8,363.9 832.3,363.9C835.8,363.9 841.2,371.1 843.0,372.5 M866.4,283.0C866.8,285.1 869.3,291.5 868.6,295.8C867.9,300.1 861.9,304.7 862.2,308.6C862.6,312.5 868.6,315.3 870.7,319.2C872.8,323.1 874.2,329.9 874.9,332.0 M896.2,332.0C896.6,329.1 896.6,319.2 898.4,314.9C900.2,310.6 903.7,307.1 906.9,306.4C910.1,305.7 915.4,308.2 917.5,310.7C919.6,313.2 919.3,319.5 919.7,321.3 M906.9,338.4C908.0,336.3 908.6,329.2 913.3,325.6C918.0,322.1 931.4,318.5 935.0,317.1 M994.6,339.4C998.9,339.2 1013.1,339.3 1020.2,338.4C1027.3,337.5 1031.5,335.2 1037.2,334.1C1042.9,333.0 1049.3,333.4 1054.3,332.0C1059.3,330.6 1065.0,326.7 1067.1,325.6 M1020.2,338.4C1022.3,339.5 1029.1,342.3 1033.0,344.8C1036.9,347.3 1040.8,350.1 1043.6,353.3C1046.4,356.5 1048.6,360.7 1050.0,363.9C1051.4,367.1 1050.0,371.8 1052.1,372.5C1054.2,373.2 1060.3,370.2 1062.8,368.2C1065.3,366.2 1069.2,361.8 1067.1,360.7C1065.0,359.6 1052.8,361.6 1050.0,361.8 M1024.5,370.3C1027.3,369.6 1036.9,365.7 1041.5,366.1C1046.1,366.5 1050.3,371.4 1052.1,372.5 M977.6,374.6C979.7,376.0 986.5,380.8 990.4,383.1C994.3,385.4 997.5,388.0 1001.0,388.4C1004.5,388.8 1007.8,388.2 1011.7,385.2C1015.6,382.2 1022.4,372.8 1024.5,370.3 M962.7,398.0C967.0,397.3 981.8,393.8 988.2,393.8C994.6,393.8 996.7,395.2 1001.0,398.0C1005.3,400.8 1009.2,407.2 1013.8,410.8C1018.4,414.4 1025.2,417.2 1028.7,419.3C1032.2,421.4 1031.2,423.6 1035.1,423.6C1039.0,423.6 1049.3,420.0 1052.1,419.3 M1071.3,322.4C1075.6,322.4 1089.5,322.2 1096.9,322.4C1104.4,322.6 1111.0,324.8 1116.0,323.5C1121.0,322.2 1123.2,316.0 1126.7,314.9C1130.2,313.8 1133.8,314.6 1137.3,317.1C1140.8,319.6 1144.1,326.0 1148.0,329.9C1151.9,333.8 1158.7,338.7 1160.8,340.5 M1107.5,324.5C1107.9,326.8 1108.6,334.3 1109.7,338.4C1110.8,342.5 1114.6,345.4 1113.9,349.0C1113.2,352.6 1107.5,355.8 1105.4,359.7C1103.3,363.6 1102.2,367.5 1101.1,372.5C1100.0,377.5 1099.3,384.2 1099.0,389.5C1098.7,394.8 1101.5,401.6 1099.0,404.4C1096.5,407.2 1090.1,405.8 1084.1,406.5C1078.1,407.2 1066.3,408.3 1062.8,408.7 M1071.3,353.3C1073.4,352.4 1080.9,347.6 1084.1,348.0C1087.3,348.4 1087.3,353.1 1090.5,355.4C1093.7,357.7 1101.2,360.7 1103.3,361.8 M1218.3,365.0C1218.5,369.1 1218.9,381.9 1219.3,389.5C1219.7,397.1 1220.6,403.7 1220.4,410.8C1220.2,417.9 1216.9,425.7 1218.3,432.1C1219.7,438.5 1226.4,445.0 1228.9,449.1C1231.4,453.2 1232.5,455.7 1233.2,457.0 M935.0,312.8C936.4,314.2 942.4,317.0 943.5,321.3C944.6,325.6 941.8,335.5 941.4,338.4 M954.2,312.8 L945.6,329.9 M1028.7,432.1C1028.3,434.2 1028.7,441.7 1026.6,444.9C1024.5,448.1 1017.7,450.2 1015.9,451.3 M971.2,419.3C974.4,420.0 985.8,420.8 990.4,423.6C995.0,426.5 996.4,432.5 998.9,436.4C1001.4,440.3 1004.2,445.2 1005.3,447.0 M935.0,419.3C936.1,416.5 939.3,407.3 941.4,402.3C943.5,397.3 946.4,393.8 947.8,389.5C949.2,385.2 949.5,378.8 949.9,376.7 M1365.7,283.0C1365.3,283.7 1365.3,286.2 1363.5,287.3C1361.7,288.4 1356.8,288.0 1355.0,289.4C1353.2,290.8 1355.7,294.4 1352.9,295.8C1350.1,297.2 1343.3,296.8 1338.0,297.9C1332.7,299.0 1325.9,300.1 1320.9,302.2C1315.9,304.3 1311.4,307.5 1308.2,310.7C1305.0,313.9 1305.0,318.5 1301.8,321.3C1298.6,324.1 1294.0,325.6 1289.0,327.7C1284.0,329.8 1277.2,332.7 1271.9,334.1C1266.6,335.5 1259.5,335.9 1257.0,336.2 M1261.3,334.1C1263.4,332.9 1269.5,327.8 1274.1,326.7C1278.7,325.6 1286.5,327.5 1289.0,327.7 M1293.2,353.3C1293.6,355.1 1293.6,360.7 1295.4,363.9C1297.2,367.1 1300.7,370.7 1303.9,372.5C1307.1,374.3 1310.2,373.9 1314.5,374.6C1318.8,375.3 1326.0,375.5 1329.5,376.7C1333.0,377.9 1331.9,381.1 1335.8,382.0C1339.7,382.9 1346.9,381.8 1352.9,382.0C1359.0,382.2 1366.1,382.6 1372.1,383.1C1378.1,383.6 1383.4,385.6 1389.1,385.2C1394.8,384.8 1401.5,382.6 1406.1,381.0C1410.7,379.4 1412.5,377.5 1416.8,375.7C1421.1,373.9 1427.1,371.7 1431.7,370.3C1436.3,368.9 1439.2,368.5 1444.5,367.1C1449.8,365.7 1457.6,363.2 1463.6,361.8C1469.6,360.4 1476.4,360.7 1480.7,358.6C1485.0,356.5 1486.7,351.5 1489.2,349.0C1491.7,346.5 1493.1,344.1 1495.6,343.7C1498.1,343.3 1502.7,346.4 1504.1,346.9 M1308.2,376.7C1307.1,378.8 1302.5,385.2 1301.8,389.5C1301.1,393.8 1305.3,398.8 1303.9,402.3C1302.5,405.9 1297.5,408.3 1293.2,410.8C1288.9,413.3 1283.3,414.7 1278.3,417.2C1273.3,419.7 1266.6,422.5 1263.4,425.7C1260.2,428.9 1259.6,431.2 1259.2,436.4C1258.8,441.6 1261.0,453.6 1261.3,457.0 M1267.7,355.4C1268.8,357.5 1273.4,364.6 1274.1,368.2C1274.8,371.8 1272.3,375.3 1271.9,376.7 M1240.0,361.8C1241.4,362.9 1245.7,365.7 1248.5,368.2C1251.3,370.7 1253.8,374.9 1257.0,376.7C1260.2,378.5 1265.9,378.4 1267.7,378.8 M484.7,457.0C484.4,458.4 484.4,463.0 482.6,465.5C480.8,468.0 476.9,469.8 474.1,471.9C471.3,474.0 469.5,477.1 465.6,478.3C461.7,479.6 454.6,480.1 450.7,479.4C446.8,478.7 445.3,475.2 442.1,474.0C438.9,472.8 435.4,472.2 431.5,471.9C427.6,471.5 424.0,471.4 418.7,471.9C413.4,472.4 403.2,473.0 399.5,475.1C395.8,477.2 398.2,481.0 396.4,484.7C394.6,488.4 391.2,494.5 388.9,497.5C386.6,500.5 386.1,501.4 382.5,502.8C378.9,504.2 371.9,505.1 367.6,506.0C363.3,506.9 359.7,508.5 356.9,508.1C354.1,507.8 351.7,504.6 350.6,503.9 M506.0,457.0C506.7,457.9 508.9,462.3 510.3,462.3C511.7,462.3 513.9,457.9 514.6,457.0 M325.0,536.9 L329.3,533.7 M834.5,457.0C833.1,458.1 828.9,461.3 826.0,463.4C823.1,465.5 820.6,467.0 817.4,469.8C814.2,472.6 810.7,478.1 806.8,480.4C802.9,482.7 797.2,482.2 794.0,483.6C790.8,485.0 788.7,486.6 787.6,488.9C786.5,491.2 787.6,496.1 787.6,497.5 M830.2,463.4C829.9,465.9 829.5,474.1 828.1,478.3C826.7,482.6 823.1,484.6 821.7,488.9C820.3,493.2 821.0,498.9 819.6,503.9C818.2,508.9 813.9,513.8 813.2,518.8C812.5,523.8 814.6,529.1 815.3,533.7C816.0,538.3 818.8,542.6 817.4,546.5C816.0,550.4 809.6,553.6 806.8,557.1C804.0,560.6 802.5,564.6 800.4,567.8C798.3,571.0 796.1,574.9 794.0,576.3C791.9,577.7 788.7,576.3 787.6,576.3 M870.7,465.5C868.2,465.5 860.4,464.8 855.8,465.5C851.2,466.2 847.3,467.7 843.0,469.8C838.7,471.9 832.3,476.9 830.2,478.3 M764.2,480.4C764.9,482.5 767.3,488.6 768.4,493.2C769.5,497.8 770.2,505.6 770.6,508.1 M768.4,529.4C769.8,531.2 775.2,535.8 777.0,540.1C778.8,544.4 777.7,550.4 779.1,555.0C780.5,559.6 783.7,563.5 785.5,567.8C787.3,572.0 788.3,576.2 789.7,580.5C791.1,584.8 792.9,589.8 794.0,593.3C795.1,596.8 795.8,600.4 796.1,601.8 M885.6,463.4C887.7,464.5 895.9,466.2 898.4,469.8C900.9,473.4 898.4,481.5 900.5,484.7C902.6,487.9 907.3,488.5 911.2,488.9C915.1,489.2 919.9,486.1 923.9,486.8C927.9,487.5 933.1,492.1 935.0,493.2 M892.0,457.0C891.6,459.1 891.3,465.2 889.9,469.8C888.5,474.4 884.9,479.7 883.5,484.7C882.1,489.7 880.9,495.0 881.3,499.6C881.6,504.2 884.5,508.1 885.6,512.4C886.7,516.7 885.9,521.3 887.7,525.2C889.5,529.1 893.0,533.5 896.2,535.8C899.4,538.1 905.1,538.5 906.9,539.0 M887.7,525.2C886.3,527.3 882.0,533.6 879.2,537.9C876.4,542.1 873.2,546.8 870.7,550.7C868.2,554.6 866.4,557.1 864.3,561.4C862.2,565.7 859.3,571.7 857.9,576.3C856.5,580.9 855.4,584.9 855.8,589.1C856.1,593.4 860.0,598.2 860.0,601.8C860.0,605.3 858.6,607.5 855.8,610.4C853.0,613.2 847.6,617.1 843.0,618.9C838.4,620.7 832.4,619.4 828.1,621.0C823.8,622.6 819.2,627.2 817.4,628.5 M804.7,608.2C805.1,610.3 805.0,617.6 806.8,621.0C808.6,624.4 813.9,627.2 815.3,628.5 M1062.8,465.5C1065.6,465.1 1074.8,462.7 1079.8,463.4C1084.8,464.1 1090.5,466.6 1092.6,469.8C1094.7,473.0 1093.3,479.1 1092.6,482.6C1091.9,486.2 1089.1,489.7 1088.4,491.1 M1233.2,457.0C1233.9,458.4 1236.3,463.7 1237.4,465.5C1238.5,467.3 1239.6,467.2 1240.0,467.6 M1240.0,467.6C1241.8,469.0 1248.1,476.2 1250.6,476.2C1253.1,476.2 1253.1,470.8 1254.9,467.6C1256.7,464.4 1260.2,458.8 1261.3,457.0"/>
</g>
<g fill="none" stroke="#f6967a" stroke-width="2.3" stroke-linejoin="round" stroke-linecap="round">
<path d="M350.6,109.0C353.4,110.1 362.6,112.9 367.6,115.4C372.6,117.9 375.8,122.5 380.4,123.9C385.0,125.3 389.6,124.0 395.3,123.9C401.0,123.8 411.3,123.6 414.5,123.5 M1182.1,247.4C1184.6,249.2 1193.5,254.6 1197.0,258.1C1200.5,261.7 1199.9,265.5 1203.4,268.7C1207.0,271.9 1214.8,275.5 1218.3,277.3C1221.8,279.1 1223.6,279.0 1224.7,279.4 M359.1,322.4C361.6,323.8 369.0,328.6 374.0,330.9C379.0,333.2 382.9,334.6 388.9,336.2C394.9,337.8 403.8,340.5 410.2,340.5C416.6,340.5 421.5,337.3 427.2,336.2C432.9,335.1 439.3,333.6 444.3,334.1C449.3,334.6 453.2,336.5 457.1,339.4C461.0,342.2 463.4,348.9 467.7,351.2C471.9,353.5 478.0,352.8 482.6,353.3C487.2,353.8 491.1,354.6 495.4,354.4C499.7,354.2 504.6,351.5 508.2,352.2C511.8,352.9 513.9,358.1 516.7,358.6C519.5,359.1 521.7,356.3 525.2,355.4C528.8,354.5 534.1,355.1 538.0,353.3C541.9,351.5 547.0,349.4 548.6,344.8C550.2,340.2 546.9,331.6 547.6,325.6C548.3,319.6 550.6,313.9 552.9,308.6C555.2,303.3 558.2,297.9 561.4,293.6C564.6,289.3 570.3,284.8 572.1,283.0 M548.6,353.3C549.7,355.1 552.1,361.1 555.0,363.9C557.9,366.7 561.4,368.9 565.7,370.3C570.0,371.7 576.0,372.1 580.6,372.5C585.2,372.9 589.5,370.7 593.4,372.5C597.3,374.3 601.2,379.6 604.0,383.1C606.8,386.7 609.0,389.9 610.4,393.8C611.8,397.7 610.4,403.7 612.5,406.5C614.6,409.3 620.3,409.7 623.2,410.8C626.1,411.9 628.9,412.5 630.0,412.9 M704.5,372.5C705.9,374.6 711.0,380.9 713.1,385.2C715.2,389.4 716.9,394.1 717.3,398.0C717.6,401.9 715.6,406.9 715.2,408.7 M704.5,344.8C704.1,347.3 702.0,355.1 702.4,359.7C702.8,364.3 706.0,370.4 706.7,372.5 M704.5,344.8C707.0,344.3 715.6,341.2 719.5,341.6C723.4,342.0 726.6,346.0 728.0,346.9 M830.2,395.9C831.6,393.8 834.8,387.7 838.7,383.1C842.6,378.5 849.7,371.8 853.6,368.2C857.5,364.6 860.8,362.9 862.2,361.8 M847.3,402.3C849.8,401.2 856.9,398.4 862.2,395.9C867.5,393.4 874.2,386.7 879.2,387.4C884.2,388.1 887.4,397.6 892.0,400.1C896.6,402.6 904.4,401.9 906.9,402.3 M889.9,402.3C891.3,403.7 894.5,408.7 898.4,410.8C902.3,412.9 908.3,413.7 913.3,415.1C918.3,416.5 925.7,418.6 928.2,419.3 M969.1,349.0C969.8,352.2 971.5,362.2 973.3,368.2C975.1,374.2 979.0,380.6 979.7,385.2C980.4,389.8 980.4,393.6 977.6,395.9C974.8,398.2 965.9,396.6 962.7,399.1C959.5,401.6 959.5,406.0 958.4,410.8C957.3,415.6 955.2,422.8 956.3,427.8C957.4,432.8 962.3,437.8 964.8,440.6C967.3,443.5 970.1,444.2 971.2,444.9 M992.5,344.8C993.6,346.9 995.0,352.9 998.9,357.5C1002.8,362.1 1010.2,367.2 1015.9,372.5C1021.6,377.8 1027.7,385.1 1033.0,389.5C1038.3,393.9 1043.3,396.4 1047.9,399.1C1052.5,401.8 1059.6,401.8 1060.7,405.5C1061.8,409.2 1056.4,415.5 1054.3,421.4C1052.2,427.2 1049.7,435.3 1047.9,440.6C1046.1,445.9 1044.3,451.3 1043.6,453.4 M1069.2,312.8C1068.8,316.0 1067.1,325.6 1067.1,332.0C1067.1,338.4 1068.2,345.2 1069.2,351.2C1070.2,357.2 1072.3,362.2 1073.4,368.2C1074.5,374.2 1074.5,381.4 1075.6,387.4C1076.7,393.4 1079.1,398.7 1079.8,404.4C1080.5,410.1 1081.2,416.8 1079.8,421.4C1078.4,426.0 1073.4,428.2 1071.3,432.1C1069.2,436.0 1069.2,441.3 1067.1,444.9C1065.0,448.4 1060.6,451.4 1058.5,453.4C1056.4,455.4 1055.0,456.4 1054.3,457.0 M1160.8,336.2C1162.2,338.3 1165.8,345.8 1169.3,349.0C1172.8,352.2 1176.8,353.8 1182.1,355.4C1187.4,357.0 1194.5,357.4 1201.2,358.6C1207.9,359.9 1216.0,363.1 1222.5,362.9C1229.0,362.7 1237.1,358.4 1240.0,357.5 M1182.1,368.2C1182.8,369.3 1186.3,370.3 1186.3,374.6C1186.3,378.9 1183.5,387.8 1182.1,393.8C1180.7,399.8 1179.9,405.1 1177.8,410.8C1175.7,416.5 1171.4,423.5 1169.3,427.8C1167.2,432.1 1165.0,432.8 1165.0,436.4C1165.0,439.9 1168.9,445.7 1169.3,449.1C1169.7,452.5 1167.5,455.7 1167.2,457.0 M1226.8,283.0C1227.2,285.8 1227.1,295.7 1228.9,300.0C1230.7,304.3 1235.8,305.1 1237.4,308.6C1239.0,312.2 1238.3,319.2 1238.5,321.3 M962.7,399.1C965.2,401.1 972.3,407.8 977.6,410.8C982.9,413.8 990.7,413.6 994.6,417.2C998.5,420.8 998.9,427.5 1001.0,432.1C1003.1,436.7 1004.9,440.8 1007.4,444.9C1009.9,449.0 1014.5,455.0 1015.9,457.0 M1240.0,319.2C1240.3,321.0 1240.7,327.4 1242.1,329.9C1243.5,332.4 1246.4,333.2 1248.5,334.1C1250.6,335.0 1254.6,334.1 1254.9,335.2C1255.2,336.3 1252.4,339.3 1250.6,340.5C1248.8,341.7 1246.1,340.5 1244.3,342.6C1242.5,344.7 1240.7,351.5 1240.0,353.3 M1240.0,355.4C1242.1,356.8 1248.5,360.7 1252.8,363.9C1257.1,367.1 1263.1,371.1 1265.6,374.6C1268.1,378.2 1265.9,382.0 1267.7,385.2C1269.5,388.4 1273.7,390.6 1276.2,393.8C1278.7,397.0 1280.1,400.8 1282.6,404.4C1285.1,407.9 1287.9,412.3 1291.1,415.1C1294.3,417.9 1298.2,418.6 1301.8,421.4C1305.3,424.2 1309.6,428.9 1312.4,432.1C1315.2,435.3 1316.7,437.4 1318.8,440.6C1320.9,443.8 1323.4,448.6 1325.2,451.3C1327.0,454.0 1328.8,456.1 1329.5,457.0 M325.0,512.4C326.1,514.5 329.3,520.2 331.4,525.2C333.5,530.2 336.4,538.0 337.8,542.2C339.2,546.5 341.0,548.2 339.9,550.7C338.8,553.2 333.9,555.2 331.4,557.1C328.9,559.0 326.1,561.5 325.0,562.4 M870.7,459.1C871.8,460.2 874.6,463.0 877.1,465.5C879.6,468.0 882.8,471.1 885.6,474.0C888.4,476.9 892.7,481.2 894.1,482.6 M877.1,463.4C876.4,465.9 873.5,473.0 872.8,478.3C872.1,483.6 872.1,490.7 872.8,495.3C873.5,499.9 875.3,503.9 877.1,506.0C878.9,508.1 882.4,507.8 883.5,508.1 M1160.8,457.0C1158.7,458.8 1152.3,464.1 1148.0,467.6C1143.7,471.2 1138.8,475.1 1135.2,478.3C1131.7,481.5 1129.5,483.2 1126.7,486.8C1123.9,490.4 1121.8,495.7 1118.2,499.6C1114.7,503.5 1109.7,507.4 1105.4,510.2C1101.1,513.0 1096.9,514.1 1092.6,516.6C1088.3,519.1 1084.0,521.7 1079.8,525.2C1075.5,528.8 1071.3,534.0 1067.1,537.9C1062.8,541.8 1058.6,545.0 1054.3,548.6C1050.0,552.2 1045.4,556.0 1041.5,559.2C1037.6,562.4 1033.3,568.1 1030.8,567.8C1028.3,567.4 1029.4,559.1 1026.6,557.1C1023.8,555.1 1015.9,556.2 1013.8,556.0 M1058.5,457.0C1058.3,459.8 1058.4,468.7 1057.5,474.0C1056.6,479.3 1052.3,485.0 1053.2,488.9C1054.1,492.8 1061.2,496.1 1062.8,497.5 M1328.4,457.0C1328.9,458.4 1330.0,462.3 1331.6,465.5C1333.2,468.7 1336.2,473.0 1338.0,476.2C1339.8,479.4 1340.8,481.9 1342.2,484.7C1343.6,487.5 1343.7,491.1 1346.5,493.2C1349.3,495.3 1355.0,496.1 1359.3,497.5C1363.6,498.9 1367.5,501.3 1372.1,501.7C1376.7,502.1 1383.6,499.8 1387.0,499.6C1390.4,499.4 1392.3,499.6 1392.3,500.7C1392.3,501.8 1388.2,503.0 1387.0,506.0C1385.8,509.0 1386.2,514.5 1384.8,518.8C1383.4,523.0 1378.6,528.7 1378.4,531.5C1378.2,534.3 1382.5,533.7 1383.8,535.8C1385.0,537.9 1387.2,541.1 1385.9,544.3C1384.7,547.5 1379.1,551.8 1376.3,555.0C1373.5,558.2 1370.1,560.5 1368.9,563.5C1367.7,566.5 1368.9,571.5 1368.9,573.1 M1285.8,628.5C1286.2,626.2 1286.3,618.3 1287.9,614.6C1289.5,610.9 1291.7,609.3 1295.4,606.1C1299.1,602.9 1304.6,598.6 1310.3,595.4C1316.0,592.2 1323.5,589.5 1329.5,586.9C1335.5,584.2 1339.9,581.8 1346.5,579.5C1353.1,577.2 1361.8,575.4 1368.9,573.1C1376.0,570.8 1382.2,567.9 1389.1,565.6C1396.0,563.3 1404.0,561.0 1410.4,559.2C1416.8,557.4 1422.4,555.7 1427.4,555.0C1432.4,554.3 1435.9,555.7 1440.2,555.0C1444.5,554.3 1447.3,552.8 1453.0,550.7C1458.7,548.6 1467.9,544.7 1474.3,542.2C1480.7,539.7 1487.4,537.0 1491.3,535.8C1495.2,534.5 1494.8,533.8 1497.7,534.7C1500.6,535.6 1504.1,540.4 1508.4,541.1C1512.7,541.8 1517.7,539.5 1523.3,539.0C1528.9,538.5 1538.9,538.1 1542.0,537.9"/>
</g>
<g fill="none" stroke="#e66e89" stroke-width="2.6" stroke-linejoin="round" stroke-linecap="round">
<path d="M417.0,109.0C416.4,111.5 415.1,118.2 413.4,123.9C411.7,129.6 408.4,136.7 407.0,143.1C405.6,149.5 404.9,156.5 404.9,162.2C404.9,167.9 406.2,171.9 407.0,177.2C407.8,182.5 409.3,188.5 409.8,194.2C410.3,199.9 410.2,206.0 409.8,211.2C409.4,216.3 408.1,222.2 407.6,225.1C407.1,227.9 408.4,223.9 407.0,228.3C405.6,232.7 402.5,246.0 399.5,251.7C396.5,257.4 393.1,258.8 388.9,262.4C384.6,265.9 379.0,269.6 374.0,273.0C369.0,276.4 361.6,281.3 359.1,283.0 M325.0,223.6C329.3,224.6 341.6,227.1 350.6,229.3C359.7,231.5 366.4,233.4 379.3,236.8C392.2,240.2 417.5,247.1 428.3,249.6C439.1,252.1 439.5,250.7 444.3,252.1C449.1,253.5 452.5,256.2 457.1,258.1C461.7,260.0 466.0,263.0 472.0,263.4C478.0,263.8 485.9,261.0 493.3,260.7C500.8,260.4 509.3,260.5 516.7,261.3C524.2,262.1 531.2,264.3 538.0,265.5C544.8,266.7 551.9,267.1 557.2,268.7C562.5,270.3 567.8,274.0 569.9,275.1 M570.0,275.0C573.3,275.9 583.3,279.0 590.0,280.5C596.7,282.0 605.0,282.4 610.0,284.0C615.0,285.6 616.7,288.0 620.0,290.0C623.3,292.0 628.3,295.0 630.0,296.0 M439.0,109.0C439.9,110.8 442.0,115.7 444.3,119.6C446.6,123.5 448.6,131.3 452.8,132.4C457.1,133.5 464.1,128.0 469.8,126.0C475.5,124.0 482.6,120.9 486.9,120.7C491.2,120.5 491.1,123.4 495.4,125.0C499.6,126.6 507.4,129.8 512.4,130.3C517.4,130.8 518.8,128.7 525.2,128.2C531.6,127.7 544.0,126.3 550.8,127.1C557.5,127.9 560.7,132.9 565.7,132.9C570.7,132.9 574.6,129.3 580.6,127.1C586.6,124.9 593.7,121.9 601.9,119.6C610.1,117.3 625.3,114.3 630.0,113.3 M737.6,109.0C739.5,110.8 745.9,116.0 749.3,119.6C752.7,123.1 754.6,126.4 757.8,130.3C761.0,134.2 765.6,138.8 768.4,143.1C771.2,147.4 771.6,151.3 774.8,155.9C778.0,160.5 785.1,166.6 787.6,170.8C790.1,175.1 789.0,177.5 789.7,181.4C790.4,185.3 790.1,190.6 791.9,194.2C793.7,197.8 796.8,200.2 800.4,202.7C804.0,205.2 809.7,206.2 813.2,209.1C816.8,211.9 818.9,215.9 821.7,219.8C824.5,223.7 828.4,227.5 830.2,232.5C832.0,237.5 831.2,243.9 832.3,249.6C833.4,255.3 835.9,263.8 836.6,266.6 M753.5,109.0C754.2,111.1 757.4,117.9 757.8,121.8C758.2,125.7 756.6,128.5 755.7,132.4C754.8,136.3 752.1,141.3 752.5,145.2C752.9,149.1 755.5,151.6 757.8,155.9C760.1,160.2 762.8,166.2 766.3,170.8C769.8,175.4 775.5,180.3 779.1,183.5C782.7,186.7 786.2,188.8 787.6,189.9 M779.1,194.2C778.0,195.6 774.1,199.5 772.7,202.7C771.3,205.9 769.9,209.1 770.6,213.4C771.3,217.7 775.6,223.7 777.0,228.3C778.4,232.9 778.4,237.9 779.1,241.1C779.8,244.3 779.1,245.6 781.2,247.4C783.3,249.2 788.0,249.9 791.9,251.7C795.8,253.5 800.5,256.0 804.7,258.1C809.0,260.2 813.9,262.9 817.4,264.5C820.9,266.1 824.6,267.2 826.0,267.7 M843.0,266.6 L855.8,258.1 M957.4,109.0C958.3,111.1 960.8,117.2 962.7,121.8C964.7,126.4 968.4,131.7 969.1,136.7C969.8,141.7 965.1,148.0 966.9,151.6C968.7,155.2 977.4,155.5 979.7,158.0C982.0,160.5 981.9,163.7 980.8,166.5C979.7,169.3 974.4,171.8 973.3,175.0C972.2,178.2 973.0,181.8 974.4,185.7C975.8,189.6 978.2,194.9 981.9,198.5C985.6,202.1 994.7,203.8 996.8,207.0C998.9,210.2 996.4,214.0 994.6,217.6C992.8,221.2 988.2,225.1 986.1,228.3C984.0,231.5 983.7,233.2 981.9,236.8C980.1,240.4 976.2,244.6 975.5,249.6C974.8,254.6 976.4,261.0 977.6,266.6C978.8,272.2 982.0,280.3 982.9,283.0 M1067.1,283.0C1069.9,282.1 1077.0,280.0 1084.1,277.3C1091.2,274.6 1100.8,270.2 1109.7,266.6C1118.6,263.1 1128.8,259.2 1137.3,256.0C1145.8,252.8 1153.7,249.5 1160.8,247.4C1167.9,245.3 1173.2,245.7 1179.9,243.2C1186.6,240.7 1194.1,236.1 1201.2,232.5C1208.3,228.9 1216.0,224.6 1222.5,221.9C1229.0,219.2 1237.1,217.5 1240.0,216.6 M1240.0,268.7C1238.2,269.8 1232.2,273.3 1228.9,275.1C1225.6,276.9 1225.0,278.3 1220.4,279.4C1215.8,280.5 1208.0,280.9 1201.2,281.5C1194.5,282.1 1183.5,282.8 1179.9,283.0 M1137.3,256.0C1138.0,257.8 1140.2,262.1 1141.6,266.6C1143.0,271.1 1145.2,280.3 1145.9,283.0 M1240.0,215.5C1243.5,213.9 1254.2,208.7 1261.3,205.9C1268.4,203.1 1274.4,201.7 1282.6,198.5C1290.8,195.3 1303.7,189.4 1310.3,186.7C1316.9,184.0 1312.2,185.2 1322.0,182.5C1331.8,179.8 1359.9,173.3 1369.3,170.8C1378.7,168.3 1374.4,168.8 1378.4,167.6C1382.4,166.3 1388.1,164.9 1393.4,163.3C1398.7,161.7 1404.7,160.7 1410.4,158.0C1416.1,155.3 1422.4,150.2 1427.4,147.3C1432.4,144.5 1435.9,143.0 1440.2,140.9C1444.5,138.8 1447.3,139.9 1453.0,134.6C1458.7,129.3 1470.8,113.3 1474.3,109.0 M1240.0,268.7C1242.1,267.6 1247.1,266.3 1252.8,262.4C1258.5,258.5 1266.6,251.0 1274.1,245.3C1281.5,239.6 1290.4,233.6 1297.5,228.3C1304.6,223.0 1310.3,216.6 1316.7,213.4C1323.1,210.2 1329.4,209.5 1335.8,209.1C1342.2,208.7 1349.3,211.5 1355.0,211.2C1360.7,210.8 1364.9,208.9 1369.9,207.0C1374.9,205.1 1380.2,200.8 1384.8,199.5C1389.4,198.2 1393.3,199.3 1397.6,199.5C1401.9,199.7 1404.7,200.8 1410.4,200.6C1416.1,200.4 1424.6,199.6 1431.7,198.5C1438.8,197.4 1446.6,196.0 1453.0,194.2C1459.4,192.4 1464.7,190.6 1470.0,187.8C1475.3,185.0 1480.6,181.1 1484.9,177.2C1489.2,173.3 1491.0,167.9 1495.6,164.4C1500.2,160.9 1507.6,159.1 1512.6,155.9C1517.6,152.7 1520.5,148.0 1525.4,145.2C1530.3,142.3 1539.2,139.9 1542.0,138.8 M1311.4,186.7C1312.3,188.7 1315.7,194.1 1316.7,198.5C1317.8,202.9 1317.5,210.9 1317.7,213.4 M1372.1,143.1C1373.1,145.6 1377.4,153.4 1378.4,158.0C1379.5,162.6 1376.6,166.9 1378.4,170.8C1380.2,174.7 1386.2,178.2 1389.1,181.4C1391.9,184.6 1394.1,186.9 1395.5,189.9C1396.9,192.9 1395.8,196.7 1397.6,199.5C1399.4,202.3 1404.7,205.8 1406.1,207.0 M1316.7,109.0C1318.1,110.4 1321.7,115.5 1325.2,117.5C1328.8,119.5 1333.7,120.4 1338.0,120.7C1342.3,121.0 1348.7,119.8 1350.8,119.6 M1506.2,109.0C1507.6,110.4 1511.2,115.4 1514.8,117.5C1518.3,119.6 1523.0,119.7 1527.5,121.8C1532.0,123.9 1539.6,128.9 1542.0,130.3 M363.3,283.0C363.8,285.1 366.5,291.2 366.5,295.8C366.5,300.4 364.5,306.4 363.3,310.7C362.1,314.9 361.9,318.1 359.1,321.3C356.3,324.5 350.6,327.0 346.3,329.9C342.0,332.8 337.1,335.9 333.5,338.4C329.9,340.9 326.4,343.7 325.0,344.8 M361.2,283.0C358.7,284.8 350.9,290.4 346.3,293.6C341.7,296.8 337.1,300.1 333.5,302.2C329.9,304.3 326.4,305.7 325.0,306.4 M630.0,295.8C632.1,296.9 638.2,299.4 642.8,302.2C647.4,305.0 653.5,308.9 657.7,312.8C662.0,316.7 664.4,321.3 668.3,325.6C672.2,329.9 676.1,335.4 681.1,338.4C686.1,341.4 693.2,343.2 698.2,343.7C703.2,344.2 706.6,343.0 710.9,341.6C715.1,340.2 718.7,336.7 723.7,335.2C728.7,333.7 734.4,332.9 740.8,332.4C747.2,331.9 755.7,331.9 762.1,332.0C768.5,332.1 773.1,332.6 779.1,333.1C785.1,333.6 792.6,334.1 798.3,335.2C804.0,336.2 808.6,337.8 813.2,339.4C817.8,341.0 821.0,343.6 826.0,344.8C831.0,346.1 839.5,346.5 843.0,346.9C846.5,347.2 846.6,346.9 847.3,346.9 M847.3,336.2C850.1,335.9 857.9,334.5 864.3,334.1C870.7,333.8 878.5,333.4 885.6,334.1C892.7,334.8 900.5,337.1 906.9,338.4C913.3,339.6 919.2,340.7 923.9,341.6C928.6,342.5 933.1,343.4 935.0,343.7 M843.0,346.9 L847.3,336.2 M817.4,287.3C816.3,289.4 813.1,295.4 811.0,300.0C808.9,304.6 807.5,310.6 804.7,314.9C801.9,319.2 796.3,322.4 794.0,325.6C791.7,328.8 790.8,330.6 790.8,334.1C790.8,337.7 793.8,341.9 794.0,346.9C794.2,351.9 792.1,358.2 791.9,363.9C791.7,369.6 791.5,376.0 792.9,381.0C794.3,386.0 799.1,389.9 800.4,393.8C801.6,397.7 801.8,400.1 800.4,404.4C799.0,408.6 794.4,414.7 791.9,419.3C789.4,423.9 786.9,427.8 785.5,432.1C784.1,436.4 784.5,440.8 783.4,444.9C782.3,449.0 779.8,455.0 779.1,457.0 M819.6,287.3C820.3,289.1 822.0,294.7 823.8,297.9C825.6,301.1 828.4,302.8 830.2,306.4C832.0,309.9 832.4,316.0 834.5,319.2C836.6,322.4 840.9,323.1 843.0,325.6C845.1,328.1 846.6,332.7 847.3,334.1 M843.0,287.3C843.7,289.4 845.5,296.1 847.3,300.0C849.1,303.9 851.5,306.8 853.6,310.7C855.7,314.6 857.9,319.9 860.0,323.5C862.1,327.1 865.0,329.9 866.4,332.0C867.8,334.1 868.2,335.5 868.6,336.2 M653.4,421.4C655.9,421.4 663.3,421.2 668.3,421.4C673.3,421.6 677.9,423.9 683.2,422.5C688.5,421.1 694.2,414.8 700.3,412.9C706.3,410.9 712.0,411.5 719.5,410.8C727.0,410.1 738.6,409.6 745.0,408.7C751.4,407.8 752.1,406.4 757.8,405.5C763.5,404.6 772.0,403.8 779.1,403.3C786.2,402.8 794.4,402.5 800.4,402.3C806.4,402.1 810.3,403.4 815.3,402.3C820.3,401.2 824.5,396.6 830.2,395.9C835.9,395.2 843.7,399.1 849.4,398.0C855.1,396.9 859.3,391.3 864.3,389.5C869.3,387.7 876.7,387.8 879.2,387.4 M783.4,444.9C784.8,442.8 788.0,435.7 791.9,432.1C795.8,428.6 801.1,425.7 806.8,423.6C812.5,421.5 820.7,420.4 826.0,419.3C831.3,418.2 836.6,417.6 838.7,417.2 M845.1,349.0C846.9,351.1 851.5,358.2 855.8,361.8C860.1,365.4 866.8,367.5 870.7,370.3C874.6,373.1 876.7,374.9 879.2,378.8C881.7,382.7 883.8,389.9 885.6,393.8C887.4,397.7 889.9,398.8 889.9,402.3C889.9,405.9 887.0,410.9 885.6,415.1C884.2,419.4 883.8,424.2 881.3,427.8C878.8,431.4 873.9,432.8 870.7,436.4C867.5,439.9 863.6,447.0 862.2,449.1 M928.2,336.2C928.9,341.5 931.3,362.1 932.4,368.2C933.5,374.2 934.6,371.8 935.0,372.5 M935.0,342.6C937.1,343.1 943.2,344.4 947.8,345.8C952.4,347.2 957.7,350.8 962.7,351.2C967.7,351.6 973.0,349.1 977.6,348.0C982.2,346.9 987.7,346.1 990.4,344.8C993.1,343.6 993.1,341.2 993.6,340.5 M966.9,349.0C968.7,347.2 973.7,342.3 977.6,338.4C981.5,334.5 985.1,329.5 990.4,325.6C995.7,321.7 1002.8,318.8 1009.5,314.9C1016.2,311.0 1023.3,306.1 1030.8,302.2C1038.3,298.3 1047.2,294.7 1054.3,291.5C1061.4,288.3 1070.2,284.4 1073.4,283.0 M992.5,339.4C994.6,337.4 1000.7,331.1 1005.3,327.7C1009.9,324.3 1015.2,322.0 1020.2,319.2C1025.2,316.4 1029.4,312.5 1035.1,310.7C1040.8,308.9 1049.0,308.2 1054.3,308.6C1059.6,309.0 1062.1,313.2 1067.1,312.8C1072.1,312.4 1079.1,308.3 1084.1,306.4C1089.1,304.4 1091.6,302.2 1096.9,301.1C1102.2,300.0 1109.3,300.2 1116.0,300.0C1122.7,299.8 1131.6,300.7 1137.3,300.0C1143.0,299.3 1146.2,297.6 1150.1,295.8C1154.0,294.0 1157.6,291.5 1160.8,289.4C1164.0,287.3 1167.9,284.1 1169.3,283.0 M980.8,283.0C981.0,285.1 980.7,291.5 981.9,295.8C983.1,300.1 987.0,303.6 988.2,308.6C989.4,313.6 988.6,320.6 989.3,325.6C990.0,330.6 992.0,336.3 992.5,338.4 M1148.0,283.0C1148.3,284.8 1148.0,290.8 1150.1,293.6C1152.2,296.4 1158.3,296.8 1160.8,300.0C1163.3,303.2 1165.4,308.5 1165.0,312.8C1164.6,317.1 1158.8,321.3 1158.6,325.6C1158.4,329.9 1163.3,333.8 1164.0,338.4C1164.7,343.0 1164.2,348.3 1162.9,353.3C1161.7,358.3 1158.3,362.9 1156.5,368.2C1154.7,373.5 1153.7,379.5 1152.3,385.2C1150.9,390.9 1149.8,396.6 1148.0,402.3C1146.2,408.0 1144.4,414.3 1141.6,419.3C1138.8,424.3 1134.5,428.6 1131.0,432.1C1127.5,435.7 1123.1,436.5 1120.3,440.6C1117.5,444.8 1115.0,454.3 1113.9,457.0 M935.0,432.1C935.4,434.2 937.1,440.8 937.1,444.9C937.1,449.0 935.4,455.0 935.0,457.0 M769.5,457.0C768.6,459.8 766.5,468.3 764.2,474.0C761.9,479.7 758.6,485.8 755.7,491.1C752.9,496.4 750.0,502.4 747.1,506.0C744.2,509.6 740.7,509.2 738.6,512.4C736.5,515.6 736.2,520.2 734.4,525.2C732.6,530.2 730.1,537.6 728.0,542.2C725.9,546.8 722.9,548.5 721.6,552.8C720.4,557.1 721.6,563.2 720.5,567.8C719.4,572.4 716.6,575.9 715.2,580.5C713.8,585.1 713.4,590.1 712.0,595.4C710.6,600.7 708.7,607.9 706.7,612.5C704.8,617.1 701.4,621.3 700.3,623.1 M783.4,457.0C783.6,458.8 783.0,464.1 784.4,467.6C785.8,471.2 790.3,474.8 791.9,478.3C793.5,481.9 792.6,484.6 794.0,488.9C795.4,493.2 799.7,498.9 800.4,503.9C801.1,508.9 798.3,514.5 798.3,518.8C798.3,523.0 798.3,526.6 800.4,529.4C802.5,532.2 806.7,533.7 811.0,535.8C815.3,537.9 822.1,539.7 826.0,542.2C829.9,544.7 832.7,547.2 834.5,550.7C836.3,554.2 834.8,560.0 836.6,563.5C838.4,567.0 841.6,569.5 845.1,572.0C848.6,574.5 852.9,577.1 857.9,578.4C862.9,579.6 869.2,579.3 874.9,579.5C880.6,579.7 887.4,579.3 892.0,579.5C896.6,579.7 900.8,580.3 902.6,580.5 M787.6,457.0C787.8,458.8 787.8,464.1 788.7,467.6C789.6,471.2 792.2,476.5 792.9,478.3 M911.2,568.8C913.3,568.4 920.4,567.2 923.9,566.7C927.4,566.2 931.0,565.8 932.4,565.6 M930.3,457.0 L935.0,465.5 M975.5,457.0C976.9,460.6 980.8,471.2 984.0,478.3C987.2,485.4 992.1,493.2 994.6,499.6C997.1,506.0 997.1,511.3 998.9,516.6C1000.7,521.9 1003.7,527.2 1005.3,531.5C1006.9,535.8 1007.8,539.0 1008.5,542.2C1009.2,545.4 1007.5,546.8 1009.5,550.7C1011.5,554.6 1017.4,561.0 1020.2,565.6C1023.1,570.2 1025.2,573.4 1026.6,578.4C1028.0,583.4 1028.0,589.4 1028.7,595.4C1029.4,601.4 1029.7,609.1 1030.8,614.6C1031.9,620.1 1034.4,626.2 1035.1,628.5 M935.0,467.6C937.1,469.0 944.6,472.3 947.8,476.2C951.0,480.1 952.8,485.4 954.2,491.1C955.6,496.8 955.2,504.2 956.3,510.2C957.4,516.2 959.2,522.0 960.6,527.3C962.0,532.6 964.4,537.2 964.8,542.2C965.1,547.2 962.4,551.4 962.7,557.1C963.1,562.8 965.1,569.9 966.9,576.3C968.7,582.7 971.5,589.4 973.3,595.4C975.1,601.4 976.5,607.0 977.6,612.5C978.7,618.0 979.4,625.8 979.7,628.5 M935.0,561.4C937.1,560.0 942.8,555.6 947.8,552.8C952.8,549.9 958.8,546.6 964.8,544.3C970.8,542.0 979.0,539.4 984.0,539.0C989.0,538.6 990.5,541.5 994.6,542.2C998.7,542.9 1004.2,544.0 1008.5,543.3C1012.8,542.6 1016.1,539.9 1020.2,537.9C1024.3,535.9 1029.8,534.3 1033.0,531.5C1036.2,528.7 1037.3,524.4 1039.4,520.9C1041.5,517.4 1043.3,512.5 1045.8,510.2C1048.3,507.9 1052.9,507.6 1054.3,507.1 M1116.0,457.0C1115.7,459.1 1116.0,465.5 1113.9,469.8C1111.8,474.1 1107.2,479.1 1103.3,482.6C1099.4,486.2 1093.3,488.6 1090.5,491.1C1087.7,493.6 1086.9,496.4 1086.2,497.5 M1096.9,628.5C1098.3,626.9 1102.2,621.2 1105.4,618.9C1108.6,616.6 1112.1,615.1 1116.0,614.6C1119.9,614.1 1125.6,614.6 1128.8,615.7C1132.0,616.8 1132.0,619.8 1135.2,621.0C1138.4,622.2 1145.2,621.9 1148.0,623.1C1150.8,624.4 1151.6,627.6 1152.3,628.5"/>
</g>
<g fill="none" stroke="#e8738d" stroke-width="3.3" stroke-linejoin="round" stroke-linecap="round">
<path d="M843.0,346.0C845.8,345.0 853.0,341.8 860.0,340.0C867.0,338.2 875.8,335.7 885.0,335.0C894.2,334.3 905.8,334.8 915.0,336.0C924.2,337.2 932.2,340.2 940.0,342.0C947.8,343.8 955.3,346.7 962.0,347.0C968.7,347.3 975.0,345.2 980.0,344.0C985.0,342.8 990.0,340.7 992.0,340.0"/>
</g>
<rect x="379.3" y="231.5" width="49" height="17.5" rx="1.5" fill="#f1cbd4" stroke="#dea3b2" stroke-width="1"/>
<text x="403.8" y="243.9" text-anchor="middle" font-size="10" fill="#7a2f45" textLength="36" lengthAdjust="spacingAndGlyphs">SP-075</text>
<rect x="811" y="266.6" width="48" height="17.5" rx="1.5" fill="#f1cbd4" stroke="#dea3b2" stroke-width="1"/>
<text x="835.0" y="279.1" text-anchor="middle" font-size="10" fill="#7a2f45" textLength="35" lengthAdjust="spacingAndGlyphs">SP-021</text>
<rect x="1322" y="164.4" width="47.3" height="30.2" rx="1.5" fill="#f1cbd4" stroke="#dea3b2" stroke-width="1"/>
<text x="1345.65" y="177.0" text-anchor="middle" font-size="10" fill="#7a2f45" textLength="34.3" lengthAdjust="spacingAndGlyphs">SP-060</text>
<text x="1345.65" y="189.4" text-anchor="middle" font-size="10" fill="#7a2f45" textLength="34.3" lengthAdjust="spacingAndGlyphs">BR-116</text>
<rect x="1250" y="241.5" width="47.5" height="17.9" rx="1.5" fill="#f1cbd4" stroke="#dea3b2" stroke-width="1"/>
<text x="1273.75" y="254.1" text-anchor="middle" font-size="10" fill="#7a2f45" textLength="34.5" lengthAdjust="spacingAndGlyphs">SP-070</text>
<rect x="951.6" y="595" width="47.3" height="17.5" rx="1.5" fill="#f1cbd4" stroke="#dea3b2" stroke-width="1"/>
<text x="975.25" y="607.5" text-anchor="middle" font-size="10" fill="#7a2f45" textLength="34.3" lengthAdjust="spacingAndGlyphs">SP-160</text>
<rect x="600.8" y="99" width="47.5" height="17.5" rx="1.5" fill="#f1cbd4" stroke="#dea3b2" stroke-width="1"/>
<text x="624.55" y="111.5" text-anchor="middle" font-size="10" fill="#7a2f45" textLength="34.5" lengthAdjust="spacingAndGlyphs">SP-300</text>
<text x="419.8" y="137.7" font-size="13.4" fill="#4a4a4a" stroke="#f7f5f0" stroke-opacity="0.8" stroke-width="1.6" paint-order="stroke" textLength="17.0" lengthAdjust="spacingAndGlyphs">Itu</text>
<text x="532.7" y="172.9" font-size="10.3" fill="#4a4a4a" stroke="#f7f5f0" stroke-opacity="0.8" stroke-width="1.6" paint-order="stroke" textLength="45.8" lengthAdjust="spacingAndGlyphs">Cabreúva</text>
<text x="795.7" y="152.2" font-size="12.8" fill="#4a4a4a" stroke="#f7f5f0" stroke-opacity="0.8" stroke-width="1.6" paint-order="stroke" textLength="107.6" lengthAdjust="spacingAndGlyphs">Francisco Morato</text>
<text x="813.2" y="194.2" font-size="12.8" fill="#4a4a4a" stroke="#f7f5f0" stroke-opacity="0.8" stroke-width="1.6" paint-order="stroke" textLength="103.3" lengthAdjust="spacingAndGlyphs">Franco da Rocha</text>
<text x="751.4" y="195.3" font-size="10" fill="#4a4a4a" stroke="#f7f5f0" stroke-opacity="0.8" stroke-width="1.6" paint-order="stroke" textLength="50.7" lengthAdjust="spacingAndGlyphs">Jordanésia</text>
<text x="729" y="214" font-size="10" fill="#4a4a4a" stroke="#f7f5f0" stroke-opacity="0.8" stroke-width="1.6" paint-order="stroke" textLength="39.9" lengthAdjust="spacingAndGlyphs">Cajamar</text>
<text x="827.7" y="219.8" font-size="10" fill="#4a4a4a" stroke="#f7f5f0" stroke-opacity="0.8" stroke-width="1.6" paint-order="stroke" textLength="37.7" lengthAdjust="spacingAndGlyphs">Caieiras</text>
<text x="627" y="240" font-size="10" fill="#4a4a4a" stroke="#f7f5f0" stroke-opacity="0.8" stroke-width="1.6" paint-order="stroke" textLength="55.2" lengthAdjust="spacingAndGlyphs">Pirapora do</text>
<text x="629" y="252.8" font-size="10" fill="#4a4a4a" stroke="#f7f5f0" stroke-opacity="0.8" stroke-width="1.6" paint-order="stroke" textLength="50.4" lengthAdjust="spacingAndGlyphs">Bom Jesus</text>
<text x="683.7" y="277.9" font-size="13.4" fill="#4a4a4a" stroke="#f7f5f0" stroke-opacity="0.8" stroke-width="1.6" paint-order="stroke" textLength="70.5" lengthAdjust="spacingAndGlyphs">Santana de</text>
<text x="691.8" y="294.7" font-size="13.4" fill="#4a4a4a" stroke="#f7f5f0" stroke-opacity="0.8" stroke-width="1.6" paint-order="stroke" textLength="54.9" lengthAdjust="spacingAndGlyphs">Parnaíba</text>
<text x="945.2" y="182.5" font-size="10.3" fill="#4a4a4a" stroke="#f7f5f0" stroke-opacity="0.8" stroke-width="1.6" paint-order="stroke" textLength="46.9" lengthAdjust="spacingAndGlyphs">Mairiporã</text>
<text x="1160.3" y="247.4" font-size="10.3" fill="#4a4a4a" stroke="#f7f5f0" stroke-opacity="0.8" stroke-width="1.6" paint-order="stroke" textLength="25.6" lengthAdjust="spacingAndGlyphs">Arujá</text>
<text x="1211.6" y="182.6" font-size="10.3" fill="#4a4a4a" stroke="#f7f5f0" stroke-opacity="0.8" stroke-width="1.6" paint-order="stroke" textLength="59.5" lengthAdjust="spacingAndGlyphs">Santa Isabel</text>
<text x="1014.2" y="116.5" font-size="10.3" fill="#7a9d7a" font-style="italic" stroke="#f7f5f0" stroke-opacity="0.8" stroke-width="1.6" paint-order="stroke" textLength="39.2" lengthAdjust="spacingAndGlyphs">Estadual</text>
<text x="1002.7" y="128.6" font-size="10.3" fill="#7a9d7a" font-style="italic" stroke="#f7f5f0" stroke-opacity="0.8" stroke-width="1.6" paint-order="stroke" textLength="61.8" lengthAdjust="spacingAndGlyphs">do Itapetinga</text>
<text x="941" y="237.9" font-size="10.6" fill="#1f9430" font-style="italic" stroke="#f7f5f0" stroke-opacity="0.8" stroke-width="1.6" paint-order="stroke" textLength="33" lengthAdjust="spacingAndGlyphs">Parque</text>
<text x="937.6" y="250.2" font-size="10.6" fill="#1f9430" font-style="italic" stroke="#f7f5f0" stroke-opacity="0.8" stroke-width="1.6" paint-order="stroke" textLength="39.1" lengthAdjust="spacingAndGlyphs">Estadual</text>
<text x="928.6" y="262.4" font-size="10.6" fill="#1f9430" font-style="italic" stroke="#f7f5f0" stroke-opacity="0.8" stroke-width="1.6" paint-order="stroke" textLength="60.1" lengthAdjust="spacingAndGlyphs">da Cantareira</text>
<text x="1413.6" y="172.9" font-size="13.4" fill="#4a4a4a" stroke="#f7f5f0" stroke-opacity="0.8" stroke-width="1.6" paint-order="stroke" textLength="41.1" lengthAdjust="spacingAndGlyphs">Jacareí</text>
<text x="1357.1" y="260.2" font-size="10.3" fill="#4a4a4a" stroke="#f7f5f0" stroke-opacity="0.8" stroke-width="1.6" paint-order="stroke" textLength="54.4" lengthAdjust="spacingAndGlyphs">Guararema</text>
<text x="1469.6" y="247" font-size="10.3" fill="#4a4a4a" stroke="#f7f5f0" stroke-opacity="0.8" stroke-width="1.6" paint-order="stroke" textLength="63.3" lengthAdjust="spacingAndGlyphs">Santa Branca</text>
<text x="282" y="333" font-size="13.4" fill="#4a4a4a" stroke="#f7f5f0" stroke-opacity="0.8" stroke-width="1.6" paint-order="stroke" textLength="56.8" lengthAdjust="spacingAndGlyphs">Sorocaba</text>
<text x="289" y="363.9" font-size="13.4" fill="#4a4a4a" stroke="#f7f5f0" stroke-opacity="0.8" stroke-width="1.6" paint-order="stroke" textLength="66.9" lengthAdjust="spacingAndGlyphs">Votorantim</text>
<text x="439.4" y="347.5" font-size="10.3" fill="#4a4a4a" stroke="#f7f5f0" stroke-opacity="0.8" stroke-width="1.6" paint-order="stroke" textLength="43.2" lengthAdjust="spacingAndGlyphs">Alumínio</text>
<text x="527.3" y="356.5" font-size="10.3" fill="#4a4a4a" stroke="#f7f5f0" stroke-opacity="0.8" stroke-width="1.6" paint-order="stroke" textLength="51.8" lengthAdjust="spacingAndGlyphs">São Roque</text>
<text x="601.1" y="407" font-size="10.3" fill="#4a4a4a" stroke="#f7f5f0" stroke-opacity="0.8" stroke-width="1.6" paint-order="stroke" textLength="76.5" lengthAdjust="spacingAndGlyphs">Vargem Grande</text>
<text x="621" y="419.3" font-size="10.3" fill="#4a4a4a" stroke="#f7f5f0" stroke-opacity="0.8" stroke-width="1.6" paint-order="stroke" textLength="37.7" lengthAdjust="spacingAndGlyphs">Paulista</text>
<text x="472.6" y="458.7" font-size="10.3" fill="#4a4a4a" stroke="#f7f5f0" stroke-opacity="0.8" stroke-width="1.6" paint-order="stroke" textLength="30.8" lengthAdjust="spacingAndGlyphs">Ibiúna</text>
<text x="726.9" y="340.9" font-size="13.4" fill="#4a4a4a" stroke="#f7f5f0" stroke-opacity="0.8" stroke-width="1.6" paint-order="stroke" textLength="45.4" lengthAdjust="spacingAndGlyphs">Barueri</text>
<text x="790.2" y="359.3" font-size="13.4" fill="#4a4a4a" stroke="#f7f5f0" stroke-opacity="0.8" stroke-width="1.6" paint-order="stroke" textLength="47.5" lengthAdjust="spacingAndGlyphs">Osasco</text>
<text x="685.4" y="372.5" font-size="13.4" fill="#4a4a4a" stroke="#f7f5f0" stroke-opacity="0.8" stroke-width="1.6" paint-order="stroke" textLength="41.5" lengthAdjust="spacingAndGlyphs">Itapevi</text>
<text x="900.5" y="374.2" font-size="13.4" fill="#4a4a4a" stroke="#f7f5f0" stroke-opacity="0.8" stroke-width="1.6" paint-order="stroke" textLength="66.5" lengthAdjust="spacingAndGlyphs">São Paulo</text>
<text x="702" y="418.3" font-size="13.4" fill="#4a4a4a" stroke="#f7f5f0" stroke-opacity="0.8" stroke-width="1.6" paint-order="stroke" textLength="31.3" lengthAdjust="spacingAndGlyphs">Cotia</text>
<text x="791.9" y="416.1" font-size="13.4" fill="#4a4a4a" stroke="#f7f5f0" stroke-opacity="0.8" stroke-width="1.6" paint-order="stroke" textLength="63.4" lengthAdjust="spacingAndGlyphs">Taboão da</text>
<text x="807.2" y="433.6" font-size="13.4" fill="#4a4a4a" stroke="#f7f5f0" stroke-opacity="0.8" stroke-width="1.6" paint-order="stroke" textLength="32.6" lengthAdjust="spacingAndGlyphs">Serra</text>
<text x="718.4" y="455.1" font-size="13.4" fill="#4a4a4a" stroke="#f7f5f0" stroke-opacity="0.8" stroke-width="1.6" paint-order="stroke" textLength="98.6" lengthAdjust="spacingAndGlyphs">Embu das Artes</text>
<text x="978.7" y="306" font-size="13.4" fill="#4a4a4a" stroke="#f7f5f0" stroke-opacity="0.8" stroke-width="1.6" paint-order="stroke" textLength="70.3" lengthAdjust="spacingAndGlyphs">Guarulhos</text>
<text x="1093" y="312.4" font-size="13.4" fill="#4a4a4a" stroke="#f7f5f0" stroke-opacity="0.8" stroke-width="1.6" paint-order="stroke" textLength="107.8" lengthAdjust="spacingAndGlyphs">Itaquaquecetuba</text>
<text x="1155.4" y="367.8" font-size="13.4" fill="#4a4a4a" stroke="#f7f5f0" stroke-opacity="0.8" stroke-width="1.6" paint-order="stroke" textLength="45.2" lengthAdjust="spacingAndGlyphs">Suzano</text>
<text x="1211.6" y="352.5" font-size="13.4" fill="#4a4a4a" stroke="#f7f5f0" stroke-opacity="0.8" stroke-width="1.6" paint-order="stroke" textLength="111.7" lengthAdjust="spacingAndGlyphs">Mogi das Cruzes</text>
<text x="972.3" y="459.4" font-size="13.4" fill="#4a4a4a" stroke="#f7f5f0" stroke-opacity="0.8" stroke-width="1.6" paint-order="stroke" textLength="82.4" lengthAdjust="spacingAndGlyphs">Santo André</text>
<text x="1349.7" y="389.1" font-size="10.3" fill="#4a4a4a" stroke="#f7f5f0" stroke-opacity="0.8" stroke-width="1.6" paint-order="stroke" textLength="66.0" lengthAdjust="spacingAndGlyphs">Biritiba Mirim</text>
<text x="1502.6" y="355.4" font-size="10.3" fill="#4a4a4a" stroke="#f7f5f0" stroke-opacity="0.8" stroke-width="1.6" paint-order="stroke" textLength="57.4" lengthAdjust="spacingAndGlyphs">Salesópolis</text>
<text x="311" y="502.8" font-size="10.3" fill="#4a4a4a" stroke="#f7f5f0" stroke-opacity="0.8" stroke-width="1.6" paint-order="stroke" textLength="41.3" lengthAdjust="spacingAndGlyphs">Piedade</text>
<text x="291" y="593.3" font-size="10.3" fill="#4a4a4a" stroke="#f7f5f0" stroke-opacity="0.8" stroke-width="1.6" paint-order="stroke" textLength="54.2" lengthAdjust="spacingAndGlyphs">São Miguel</text>
<text x="291" y="605" font-size="10.3" fill="#4a4a4a" stroke="#f7f5f0" stroke-opacity="0.8" stroke-width="1.6" paint-order="stroke" textLength="38" lengthAdjust="spacingAndGlyphs">Arcanjo</text>
<text x="735.9" y="503.4" font-size="13.4" fill="#4a4a4a" stroke="#f7f5f0" stroke-opacity="0.8" stroke-width="1.6" paint-order="stroke" textLength="68.8" lengthAdjust="spacingAndGlyphs">Itapecerica</text>
<text x="744.4" y="520.5" font-size="13.4" fill="#4a4a4a" stroke="#f7f5f0" stroke-opacity="0.8" stroke-width="1.6" paint-order="stroke" textLength="51.7" lengthAdjust="spacingAndGlyphs">da Serra</text>
<text x="764.6" y="605.5" font-size="10.3" fill="#4a4a4a" stroke="#f7f5f0" stroke-opacity="0.8" stroke-width="1.6" paint-order="stroke" textLength="62.4" lengthAdjust="spacingAndGlyphs">Embu-Guaçu</text>
<text x="665.1" y="616.7" font-size="10.3" fill="#4a4a4a" stroke="#f7f5f0" stroke-opacity="0.8" stroke-width="1.6" paint-order="stroke" textLength="66.7" lengthAdjust="spacingAndGlyphs">São Lourenço</text>
<text x="678.6" y="628.5" font-size="10.3" fill="#4a4a4a" stroke="#f7f5f0" stroke-opacity="0.8" stroke-width="1.6" paint-order="stroke" textLength="39.8" lengthAdjust="spacingAndGlyphs">da Serra</text>
<text x="881.3" y="564.6" font-size="10.6" fill="#1f9430" font-style="italic" stroke="#f7f5f0" stroke-opacity="0.8" stroke-width="1.6" paint-order="stroke" textLength="35.2" lengthAdjust="spacingAndGlyphs">Área de</text>
<text x="878.1" y="577.3" font-size="10.6" fill="#1f9430" font-style="italic" stroke="#f7f5f0" stroke-opacity="0.8" stroke-width="1.6" paint-order="stroke" textLength="41.1" lengthAdjust="spacingAndGlyphs">Proteção</text>
<text x="874.9" y="589.5" font-size="10.6" fill="#1f9430" font-style="italic" stroke="#f7f5f0" stroke-opacity="0.8" stroke-width="1.6" paint-order="stroke" textLength="47.3" lengthAdjust="spacingAndGlyphs">Ambiental</text>
<text x="874.5" y="601.8" font-size="10.6" fill="#1f9430" font-style="italic" stroke="#f7f5f0" stroke-opacity="0.8" stroke-width="1.6" paint-order="stroke" textLength="46.2" lengthAdjust="spacingAndGlyphs">do Bororé-</text>
<text x="881.3" y="614.2" font-size="10.6" fill="#1f9430" font-style="italic" stroke="#f7f5f0" stroke-opacity="0.8" stroke-width="1.6" paint-order="stroke" textLength="35.2" lengthAdjust="spacingAndGlyphs">Colônia</text>
<text x="950.3" y="495.3" font-size="13.4" fill="#4a4a4a" stroke="#f7f5f0" stroke-opacity="0.8" stroke-width="1.6" paint-order="stroke" textLength="91.8" lengthAdjust="spacingAndGlyphs">São Bernardo</text>
<text x="962.3" y="514.1" font-size="13.4" fill="#4a4a4a" stroke="#f7f5f0" stroke-opacity="0.8" stroke-width="1.6" paint-order="stroke" textLength="68.5" lengthAdjust="spacingAndGlyphs">do Campo</text>
<text x="1055.8" y="508.1" font-size="13.4" fill="#4a4a4a" stroke="#f7f5f0" stroke-opacity="0.8" stroke-width="1.6" paint-order="stroke" textLength="85.4" lengthAdjust="spacingAndGlyphs">Ribeirão Pires</text>
<text x="1089.4" y="526.2" font-size="10.3" fill="#4a4a4a" stroke="#f7f5f0" stroke-opacity="0.8" stroke-width="1.6" paint-order="stroke" textLength="53.3" lengthAdjust="spacingAndGlyphs">Rio Grande</text>
<text x="1095.8" y="539" font-size="10.3" fill="#4a4a4a" stroke="#f7f5f0" stroke-opacity="0.8" stroke-width="1.6" paint-order="stroke" textLength="40.5" lengthAdjust="spacingAndGlyphs">da Serra</text>
<text x="930.7" y="565" font-size="10.3" fill="#7a97c9" font-style="italic" stroke="#f7f5f0" stroke-opacity="0.8" stroke-width="1.6" paint-order="stroke" textLength="36.3" lengthAdjust="spacingAndGlyphs">Represa</text>
<text x="935" y="577.3" font-size="10.3" fill="#7a97c9" font-style="italic" stroke="#f7f5f0" stroke-opacity="0.8" stroke-width="1.6" paint-order="stroke" textLength="29.8" lengthAdjust="spacingAndGlyphs">Billings</text>
<text x="1287.3" y="618.9" font-size="10.3" fill="#4a4a4a" stroke="#f7f5f0" stroke-opacity="0.8" stroke-width="1.6" paint-order="stroke" textLength="37.7" lengthAdjust="spacingAndGlyphs">Bertioga</text>
<text x="576" y="281" font-size="10.3" fill="#4a4a4a" stroke="#f7f5f0" stroke-opacity="0.8" stroke-width="1.6" paint-order="stroke" textLength="67.1" lengthAdjust="spacingAndGlyphs">Araçariguama</text>
<g fill="#8461c4"><path id="pl" transform="translate(1050,276.5) scale(0.62)" d="M0-11c1 0 1.6 1.2 1.6 3v4.5l9 5.5v2.2l-9-2.8v5.2l2.6 2v1.6l-4.2-1.2-4.2 1.2v-1.6l2.6-2v-5.2l-9 2.8v-2.2l9-5.5v-4.5c0-1.8.6-3 1.6-3z"/><use href="#pl" transform="translate(-133.5,156.2)"/></g>
</svg>
<div style="position:absolute;left:12px;top:12px;width:33px;height:64px;background:#fff;border-radius:4px;box-shadow:0 0 0 1.5px rgba(0,0,0,0.22)"></div>
<div style="position:absolute;left:12px;top:43.5px;width:33px;height:1px;background:#ccc"></div>
<div id="zplus" style="position:absolute;left:12.8px;top:14.6px;width:33px;height:32px;color:#000;font:bold 25px/32px 'Liberation Sans',sans-serif;text-align:center">+</div>
<div id="zminus" style="position:absolute;left:12.8px;top:45.3px;width:33px;height:32px;color:#000;font:bold 25px/32px 'Liberation Sans',sans-serif;text-align:center">&#8722;</div>
<div style="position:absolute;left:874.5px;top:12px;width:330.5px;height:21px;background:#232225;border-radius:2px;box-shadow:0 1px 3px rgba(0,0,0,0.35)"></div>
<div style="position:absolute;left:970px;top:503.5px;width:247px;height:17px;background:rgba(255,255,255,0.8);font:12px/16px 'Liberation Sans',sans-serif;color:#333;white-space:nowrap">
<svg style="position:absolute;left:5.3px;top:4.7px" width="11.5" height="7.6" viewBox="0 0 12 8"><rect width="12" height="4" fill="#4c7be1"/><rect y="4" width="12" height="4" fill="#ffd500"/></svg>
<span style="position:absolute;left:21.3px;top:0.5px;color:#0078a8">Leaflet</span>
<span style="position:absolute;left:61.5px;top:0px;color:#333">|</span>
<span style="position:absolute;left:68.5px;top:0.5px;letter-spacing:0.35px">&#169; OpenStreetMap contributors</span>
</div>
</div><!--/map-->

<div class="abs lbl" style="left:325px;top:656.6px">Origem</div>
<div class="abs inp" style="left:324px;top:684px">Digite a origem</div>
<div class="abs lbl" style="left:633px;top:656.6px">Destino</div>
<div class="abs inp" style="left:633px;top:684px">Digite o destino</div>
<div class="abs lbl2" style="left:942.4px;top:660.2px">Preço da Gasolina (R$/litro)</div>
<div class="abs inp" style="left:942px;top:682.2px;width:292px;letter-spacing:-0.1px;line-height:47px">Ex: 5.60</div>
<div class="abs lbl2" style="left:1251px;top:660.2px">Consumo (km/l)</div>
<div class="abs inp" style="left:1250.5px;top:682.2px;width:292.5px;letter-spacing:-0.1px;line-height:47px">Ex: 10</div>
<svg class="abs" style="left:1203.900px;top:696.600px;width:19.200px;height:19.200px" viewBox="0 0 19 19"><rect width="19" height="19" rx="1.500" fill="#2d2b41"/><path d="M6.300 7.800L9.500 4.900l3.200 2.900M6.300 11.200l3.200 2.900 3.200-2.900" fill="none" stroke="#d0d0d8" stroke-width="1.400" stroke-linecap="round" stroke-linejoin="round"/></svg>
<svg class="abs" style="left:1512.400px;top:696.600px;width:19.200px;height:19.200px" viewBox="0 0 19 19"><rect width="19" height="19" rx="1.500" fill="#2d2b41"/><path d="M6.300 7.800L9.500 4.900l3.200 2.900M6.300 11.200l3.200 2.900 3.200-2.900" fill="none" stroke="#d0d0d8" stroke-width="1.400" stroke-linecap="round" stroke-linejoin="round"/></svg>
<div class="abs btn" style="left:324px;width:123px">Buscar Rota</div>
<div class="abs btn" style="left:464px;width:89px">Limpar</div>
</body>
</html>
